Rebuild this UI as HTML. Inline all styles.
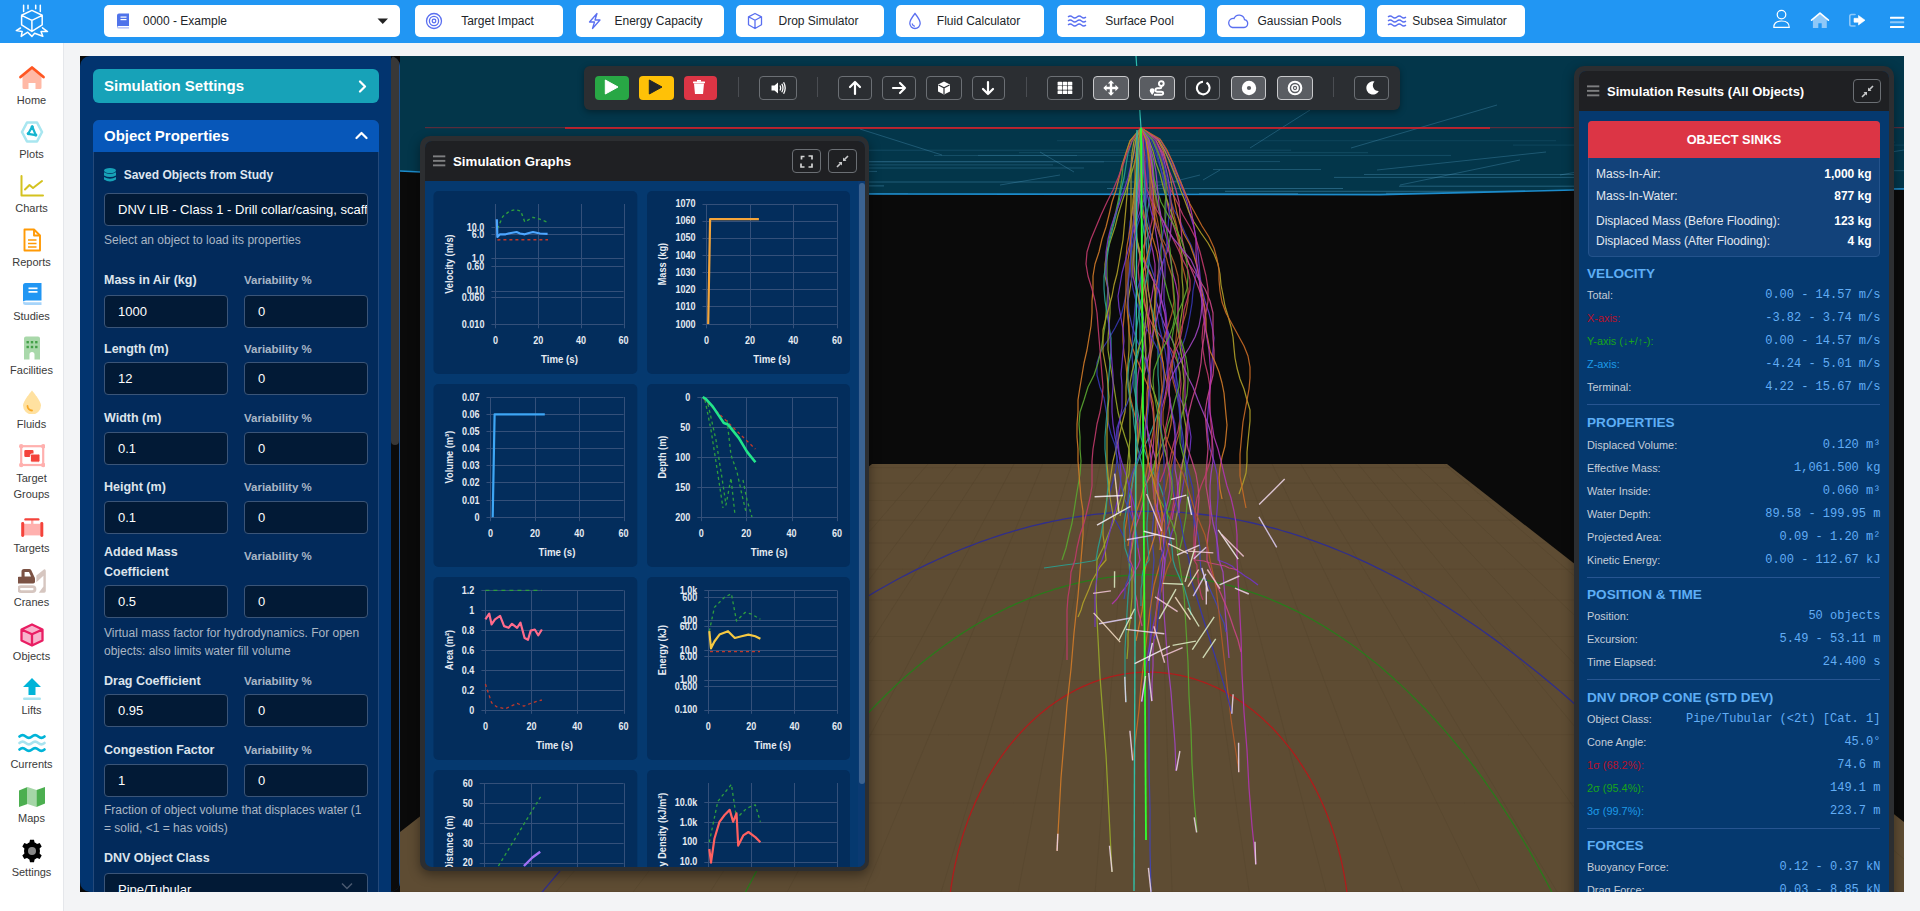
<!DOCTYPE html>
<html><head><meta charset="utf-8">
<style>
*{box-sizing:border-box;margin:0;padding:0}
html,body{width:1920px;height:911px;overflow:hidden;background:#f3f4f6;font-family:"Liberation Sans",sans-serif;position:relative}
.abs{position:absolute}
#top{position:absolute;left:0;top:0;width:1920px;height:43px;background:#2196f3}
.navbtn{position:absolute;top:5px;height:32px;width:148px;background:#fff;border-radius:5px;font-size:12px;white-space:nowrap;color:#212529;line-height:32px}
.navbtn svg{position:absolute;left:10px;top:7px}
.navbtn span{position:absolute;left:30px;right:13px;top:0;text-align:center}
#side{position:absolute;left:0;top:43px;width:64px;height:868px;background:#fff;border-right:1px solid #e5e7eb}
.si{position:absolute;left:0;width:63px;text-align:center;font-size:11px;color:#3a3a3a;line-height:16px}
.si svg{position:absolute;left:18px}
#main{position:absolute;left:80px;top:56px;width:1824px;height:836px;background:#0a0a0a;overflow:hidden}
#lp{position:absolute;left:0;top:0;width:320px;height:836px;background:#02346f;border-radius:10px;overflow:hidden}
.hdr{position:absolute;left:13px;width:286px;color:#fff;font-weight:bold;font-size:16px}
.lbl{position:absolute;font-size:12.5px;font-weight:bold;color:#dde4ec}
.vlbl{position:absolute;font-size:11.5px;font-weight:bold;color:#a9b6c6}
.inp{position:absolute;height:33px;background:#021a36;border:1px solid #3b5578;border-radius:4px;color:#fff;font-size:13px;line-height:31px;padding-left:13px}
.help{position:absolute;font-size:12px;color:#aab6c4;line-height:18px}
#scene{position:absolute;left:320px;top:0;width:1504px;height:836px;overflow:hidden}
</style></head>
<body>
<div id="top">
<svg class="abs" style="left:0;top:0" width="64" height="43" viewBox="0 0 64 43" fill="none" stroke="#fff" stroke-width="1.5" stroke-linejoin="round" stroke-linecap="round">
<path d="M23.6 5.3 V11.6 M28 5.3 V8.8 M35.7 5.3 V8.8 M40.3 5.3 V11.6"/>
<path d="M31.9 10.4 L42.2 15.3 V24.8 L31.9 31.4 L21.6 24.8 V15.3 Z M21.6 15.3 L31.9 20.3 L42.2 15.3 M31.9 20.3 V31.4"/>
<path d="M20.5 28 L16.3 30.6 L22.2 31.4 L21.2 36.4 L27.7 32.2 L31.9 36.4 L34.6 33.3 L42.8 36.2 L41 31.6 L47.5 31.6 L42.5 27.8"/>
</svg>
<div class="abs" style="left:104px;top:5px;width:296px;height:32px;background:#fff;border-radius:5px"></div>
<svg class="abs" style="left:115px;top:13px" width="15" height="16" viewBox="0 0 15 16"><path d="M2 2.5 Q2 0.5 4 0.5 H14 V13 H3.5 Q2 13 2 14.5 Z" fill="#4f73ea"/><path d="M2 14 Q2 15.5 3.5 15.5 H14 V14.2 H3.5" fill="#a9b8f5"/><rect x="5.5" y="3.5" width="6" height="1.2" fill="#fff"/><rect x="5.5" y="6" width="6" height="1.2" fill="#fff"/></svg>
<div class="abs" style="left:143px;top:5px;line-height:32px;font-size:12px;color:#212529">0000 - Example</div>
<svg class="abs" style="left:377px;top:18px" width="12" height="7" viewBox="0 0 12 7"><path d="M0.5 0.5 H11 L5.75 6 Z" fill="#222"/></svg>
<div class="navbtn" style="left:415px"><svg width="18" height="18" viewBox="0 0 18 18" fill="none" stroke="#5a6ff0" stroke-width="1.3"><circle cx="9" cy="9" r="7.5"/><circle cx="9" cy="9" r="4.6"/><circle cx="9" cy="9" r="1.8"/></svg><span>Target Impact</span></div>
<div class="navbtn" style="left:576px"><svg width="18" height="18" viewBox="0 0 18 18" fill="none" stroke="#5a6ff0" stroke-width="1.3" stroke-linejoin="round"><path d="M11 1.5 L3.5 10 H8.5 L6.5 16.5 L14 8 H9 Z"/></svg><span>Energy Capacity</span></div>
<div class="navbtn" style="left:736px"><svg width="18" height="18" viewBox="0 0 18 18" fill="none" stroke="#5a6ff0" stroke-width="1.3" stroke-linejoin="round"><path d="M9 1.5 L15.5 4.8 V12.8 L9 16.5 L2.5 12.8 V4.8 Z M2.5 4.8 L9 8.3 L15.5 4.8 M9 8.3 V16.5"/></svg><span>Drop Simulator</span></div>
<div class="navbtn" style="left:896px"><svg width="18" height="18" viewBox="0 0 18 18" fill="none" stroke="#5a6ff0" stroke-width="1.3"><path d="M9 1.5 C9 1.5 3.8 8 3.8 11.3 A5.2 5.2 0 0 0 14.2 11.3 C14.2 8 9 1.5 9 1.5 Z"/><path d="M6.3 11.5 A2.7 2.7 0 0 0 9 14.2"/></svg><span>Fluid Calculator</span></div>
<div class="navbtn" style="left:1057px"><svg width="20" height="18" viewBox="0 0 20 18" fill="none" stroke="#5a6ff0" stroke-width="1.3"><path d="M1 5 q2.25 -2 4.5 0 t4.5 0 t4.5 0 t4.5 0"/><path d="M1 9 q2.25 -2 4.5 0 t4.5 0 t4.5 0 t4.5 0"/><path d="M1 13 q2.25 -2 4.5 0 t4.5 0 t4.5 0 t4.5 0"/></svg><span>Surface Pool</span></div>
<div class="navbtn" style="left:1217px"><svg width="22" height="18" viewBox="0 0 22 18" fill="none" stroke="#5a6ff0" stroke-width="1.3"><path d="M5.5 15.5 H17 A4 4 0 0 0 17.5 7.6 A5.5 5.5 0 0 0 7 6.5 A4.5 4.5 0 0 0 5.5 15.5 Z"/></svg><span>Gaussian Pools</span></div>
<div class="navbtn" style="left:1377px"><svg width="20" height="18" viewBox="0 0 20 18" fill="none" stroke="#5a6ff0" stroke-width="1.3"><path d="M1 5 q2.25 -2 4.5 0 t4.5 0 t4.5 0 t4.5 0"/><path d="M1 9 q2.25 -2 4.5 0 t4.5 0 t4.5 0 t4.5 0"/><path d="M1 13 q2.25 -2 4.5 0 t4.5 0 t4.5 0 t4.5 0"/></svg><span>Subsea Simulator</span></div>
<svg class="abs" style="left:1760px;top:0" width="160" height="43" viewBox="1760 0 160 43">
<circle cx="1781.5" cy="14.6" r="4.3" fill="none" stroke="#fff" stroke-width="1.2"/>
<path d="M1773.8 27.4 Q1773.8 21 1781.5 21 Q1789.3 21 1789.3 27.4 Z" fill="none" stroke="#fff" stroke-width="1.2" stroke-linejoin="round"/>
<path d="M1812.9 19.5 L1820 13.8 L1826.8 19.5 V27.9 H1821.7 V23.3 H1818.3 V27.9 H1812.9 Z" fill="#8ec8f8"/>
<path d="M1811.6 20.2 L1820 13.2 L1828.4 20.2" fill="none" stroke="#fff" stroke-width="1.7" stroke-linecap="round" stroke-linejoin="round"/>
<path d="M1855 14.5 H1851.5 Q1849.8 14.5 1849.8 16.2 V24.3 Q1849.8 26 1851.5 26 H1855" fill="none" stroke="#8ec8f8" stroke-width="1.6" stroke-linecap="round"/>
<path d="M1854 18.3 H1858.5 V15.5 L1865 20.2 L1858.5 25 V22.2 H1854 Z" fill="#fff" stroke="#fff" stroke-width="0.6" stroke-linejoin="round"/>
<rect x="1890" y="16.7" width="14.2" height="2" rx="0.5" fill="#fff"/>
<rect x="1890" y="21.3" width="14.2" height="2" rx="0.5" fill="#8ec8f8"/>
<rect x="1890" y="26" width="14.2" height="2" rx="0.5" fill="#fff"/>
</svg>
</div>
<div id="side">
<div class="abs" style="left:18.0px;top:22.0px;width:28px;height:26px"><svg width="28" height="26" viewBox="0 0 28 26"><path d="M4.5 11 L14 3.5 L23.5 11 V22.5 Q23.5 24 22 24 H17.5 V18 H10.5 V24 H6 Q4.5 24 4.5 22.5 Z" fill="#ffb9a6"/><path d="M2.5 12 L14 2.5 L25.5 12" fill="none" stroke="#ff5622" stroke-width="2.8" stroke-linecap="round" stroke-linejoin="round"/></svg></div>
<div class="si" style="top:49px">Home</div>
<div class="abs" style="left:20.0px;top:77.0px;width:24px;height:24px"><svg width="24" height="24" viewBox="0 0 24 24"><path d="M7 2.5 H17 L22 12 L17 21.5 H7 L2 12 Z" fill="none" stroke="#a8e6f0" stroke-width="2.6" stroke-linejoin="round"/><path d="M12.2 6.5 L8.2 13.8 L15.8 15.2 Z" fill="none" stroke="#16b5cf" stroke-width="2.2" stroke-linejoin="round"/><circle cx="12.2" cy="6.8" r="1.6" fill="#16b5cf"/><circle cx="15.8" cy="15" r="1.6" fill="#16b5cf"/><circle cx="8.3" cy="13.6" r="1.6" fill="#16b5cf"/></svg></div>
<div class="si" style="top:103px">Plots</div>
<div class="abs" style="left:20.0px;top:132.0px;width:24px;height:22px"><svg width="24" height="22" viewBox="0 0 24 22" fill="none" stroke="#d4c21f" stroke-width="2" stroke-linecap="round" stroke-linejoin="round"><path d="M1.5 1 V20.5 H23"/><path d="M5 14.5 L9.5 10 L13 13 L22 6"/></svg></div>
<div class="si" style="top:157px">Charts</div>
<div class="abs" style="left:21.0px;top:185.0px;width:22px;height:24px"><svg width="22" height="24" viewBox="0 0 22 24" fill="none" stroke="#ff9a06" stroke-width="1.9" stroke-linejoin="round"><path d="M3.5 1.5 H13 L19 7.5 V22.5 H3.5 Z"/><path d="M13 1.5 V7.5 H19"/><path d="M7 12 H15.5 M7 15.5 H15.5 M7 19 H15.5" stroke-width="1.6"/></svg></div>
<div class="si" style="top:211px">Reports</div>
<div class="abs" style="left:20.0px;top:239.0px;width:24px;height:24px"><svg width="24" height="24" viewBox="0 0 24 24"><path d="M3 3.5 Q3 1 5.5 1 H21.5 V18.5 H6 Q3 18.5 3 20 Z" fill="#2196f3"/><path d="M3 20.5 Q3 23 5.5 23 H21.5 V20.2 H5.5 Q4 20.2 4 19" fill="#a6d4fa"/><rect x="8.5" y="5.5" width="9" height="1.7" fill="#fff"/><rect x="8.5" y="9" width="9" height="1.7" fill="#fff"/></svg></div>
<div class="si" style="top:265px">Studies</div>
<div class="abs" style="left:22.0px;top:293.0px;width:20px;height:24px"><svg width="20" height="24" viewBox="0 0 20 24"><path d="M2 2.5 Q2 0.5 4 0.5 H16 Q18 0.5 18 2.5 V23.5 H12.5 V18.5 Q12.5 16 10 16 Q7.5 16 7.5 18.5 V23.5 H2 Z" fill="#a9d8aa"/><g fill="#43a047"><rect x="4.5" y="5" width="2.4" height="2.4"/><rect x="8.8" y="5" width="2.4" height="2.4"/><rect x="13.1" y="5" width="2.4" height="2.4"/><rect x="4.5" y="9.8" width="2.4" height="2.4"/><rect x="8.8" y="9.8" width="2.4" height="2.4"/><rect x="13.1" y="9.8" width="2.4" height="2.4"/></g></svg></div>
<div class="si" style="top:319px">Facilities</div>
<div class="abs" style="left:22.0px;top:347.0px;width:20px;height:24px"><svg width="20" height="24" viewBox="0 0 20 24"><path d="M10 0.5 C10 0.5 1 11 1 15.5 A9 9 0 0 0 19 15.5 C19 11 10 0.5 10 0.5 Z" fill="#ffe1a0"/><path d="M5.5 16 A4.5 4.5 0 0 0 10 20.5" fill="none" stroke="#f9a825" stroke-width="1.8" stroke-linecap="round"/></svg></div>
<div class="si" style="top:373px">Fluids</div>
<div class="abs" style="left:19.0px;top:401.0px;width:26px;height:24px"><svg width="26" height="24" viewBox="19 444 26 24"><rect x="21.2" y="446.2" width="22" height="18.8" fill="none" stroke="#ffb0ae" stroke-width="2.2"/><circle cx="21.2" cy="446.2" r="2.2" fill="#ffb0ae"/><circle cx="43.2" cy="446.2" r="2.2" fill="#ffb0ae"/><circle cx="21.2" cy="465" r="2.2" fill="#ffb0ae"/><circle cx="43.2" cy="465" r="2.2" fill="#ffb0ae"/><rect x="24.3" y="449.9" width="9.2" height="7.1" rx="1.2" fill="#f4433b"/><rect x="30.4" y="454" width="9.6" height="8.2" rx="1.4" fill="#f4433b" stroke="#fff" stroke-width="1"/></svg></div>
<div class="si" style="top:427px">Target<br>Groups</div>
<div class="abs" style="left:19.0px;top:473.0px;width:26px;height:22px"><svg width="26" height="22" viewBox="19 516 26 22"><rect x="24" y="523.8" width="16.5" height="11.6" fill="#ffb0ae"/><rect x="21.2" y="522" width="3" height="15" rx="1.4" fill="#f4433b"/><rect x="40.3" y="522" width="3" height="15" rx="1.4" fill="#f4433b"/><rect x="31" y="519.5" width="2.4" height="4.5" fill="#ffb0ae"/><rect x="24.3" y="518.2" width="15.2" height="2.4" rx="1.2" fill="#f4433b"/></svg></div>
<div class="si" style="top:497px">Targets</div>
<div class="abs" style="left:18.0px;top:526.0px;width:28px;height:24px"><svg width="28" height="24" viewBox="18 569 28 24"><path d="M21.5 571.5 Q21.5 569 24 569 H29.3 Q30.6 569 31.3 570.3 L34.3 576.8 Q35 577.5 35 579 V581.8 Q35 583.6 33.2 583.6 H18.9 Q17.1 583.6 17.1 581.8 V578.6 Q17.1 576.8 18.9 576.8 H21.5 Z M24.6 572 V576.5 H31 L29 572 Z" fill="#7b5244" fill-rule="evenodd"/><rect x="18.6" y="586.6" width="16.4" height="5" rx="2.5" fill="none" stroke="#d6c6c0" stroke-width="2.8"/><path d="M36.4 575.5 L44.2 569.3 Q45.8 569 45.8 571 V591 Q45.8 592.8 44.2 592.8 H38.8 L43.4 586.5 V575.8 L36.4 582.2 Z" fill="#d6c6c0"/></svg></div>
<div class="si" style="top:551px">Cranes</div>
<div class="abs" style="left:19.0px;top:580.0px;width:26px;height:24px"><svg width="26" height="24" viewBox="0 0 26 24"><path d="M13 1.5 L23.5 6.5 V17.5 L13 22.5 L2.5 17.5 V6.5 Z" fill="#f8b4cd"/><path d="M13 1.5 L23.5 6.5 V17.5 L13 22.5 L2.5 17.5 V6.5 Z M2.5 6.5 L13 11.3 L23.5 6.5 M13 11.3 V22.5" fill="none" stroke="#e91e63" stroke-width="2.3" stroke-linejoin="round"/></svg></div>
<div class="si" style="top:605px">Objects</div>
<div class="abs" style="left:20.0px;top:634.0px;width:24px;height:24px"><svg width="24" height="24" viewBox="0 0 24 24"><path d="M12 1 L21 10 H15.5 V18 H8.5 V10 H3 Z" fill="#00b4d8"/><rect x="3" y="20.5" width="18" height="2.6" rx="1.3" fill="#a8e3ef"/></svg></div>
<div class="si" style="top:659px">Lifts</div>
<div class="abs" style="left:18.0px;top:690.0px;width:28px;height:20px"><svg width="28" height="20" viewBox="0 0 28 20" fill="none" stroke-width="2.6" stroke-linecap="round"><path d="M1.5 3.5 q3.1 -2.6 6.25 0 t6.25 0 t6.25 0 t6.25 0" stroke="#00b4d8"/><path d="M1.5 10 q3.1 -2.6 6.25 0 t6.25 0 t6.25 0 t6.25 0" stroke="#a8e3ef"/><path d="M1.5 16.5 q3.1 -2.6 6.25 0 t6.25 0 t6.25 0 t6.25 0" stroke="#00b4d8"/></svg></div>
<div class="si" style="top:713px">Currents</div>
<div class="abs" style="left:18.0px;top:743.0px;width:28px;height:22px"><svg width="28" height="22" viewBox="0 0 28 22"><path d="M1 4.5 L9.5 1 V18 L1 21 Z" fill="#4caf50"/><path d="M9.5 1 L18.5 4 V21 L9.5 18 Z" fill="#a5d6a7"/><path d="M18.5 4 L27 1 V17.5 L18.5 21 Z" fill="#4caf50"/></svg></div>
<div class="si" style="top:767px">Maps</div>
<div class="abs" style="left:20.0px;top:796.0px;width:24px;height:24px"><svg width="24" height="24" viewBox="0 0 24 24"><path fill="#000" d="M10 0.8 H14 L14.6 3.6 A8.8 8.8 0 0 1 17 5 L19.7 4 L21.7 7.5 L19.6 9.4 A8.8 8.8 0 0 1 19.6 14.6 L21.7 16.5 L19.7 20 L17 19 A8.8 8.8 0 0 1 14.6 20.4 L14 23.2 H10 L9.4 20.4 A8.8 8.8 0 0 1 7 19 L4.3 20 L2.3 16.5 L4.4 14.6 A8.8 8.8 0 0 1 4.4 9.4 L2.3 7.5 L4.3 4 L7 5 A8.8 8.8 0 0 1 9.4 3.6 Z"/><circle cx="12" cy="12" r="4" fill="#888"/></svg></div>
<div class="si" style="top:821px">Settings</div>
</div>
<div id="main">
<svg class="abs" style="left:320px;top:0" width="1504" height="836" viewBox="400 56 1504 836">
<rect x="400" y="56" width="1504" height="836" fill="#0a0a0a"/>
<path d="M400 56 H1904 V189 L1574 190 L1380 194.6 L870 194 L400 171 Z" fill="#03364a"/>
<clipPath id="tealclip"><path d="M400 56 H1904 V189 L1574 190 L1380 194.6 L870 194 L400 171 Z"/></clipPath>
<g stroke-width="1" fill="none" clip-path="url(#tealclip)"><path d="M1107 188.5 H1343" stroke="#5aa8d0" stroke-opacity="0.39"/><path d="M1213 169.5 H1321" stroke="#5aa8d0" stroke-opacity="0.29"/><path d="M1489 193.9 H1678" stroke="#5aa8d0" stroke-opacity="0.42"/><path d="M1694 188.6 H1972" stroke="#5aa8d0" stroke-opacity="0.39"/><path d="M1019 152.7 H1368" stroke="#5aa8d0" stroke-opacity="0.19"/><path d="M1225 191.3 H1670" stroke="#5aa8d0" stroke-opacity="0.41"/><path d="M1364 174.5 H1726" stroke="#5aa8d0" stroke-opacity="0.31"/><path d="M1386 193.3 H1714" stroke="#5aa8d0" stroke-opacity="0.42"/><path d="M440 185.9 H884" stroke="#5aa8d0" stroke-opacity="0.38"/><path d="M1334 177.4 H1784" stroke="#5aa8d0" stroke-opacity="0.33"/><path d="M1597 161.9 H1843" stroke="#5aa8d0" stroke-opacity="0.24"/><path d="M978 155.4 H1451" stroke="#5aa8d0" stroke-opacity="0.21"/><path d="M527 149.3 H664" stroke="#5aa8d0" stroke-opacity="0.18"/><path d="M1655 189.2 H1918" stroke="#5aa8d0" stroke-opacity="0.39"/><path d="M791 168.0 H1084" stroke="#5aa8d0" stroke-opacity="0.28"/><path d="M856 182.0 H1182" stroke="#5aa8d0" stroke-opacity="0.35"/><path d="M1575 170.7 H1942" stroke="#5aa8d0" stroke-opacity="0.29"/><path d="M1513 145.1 H2010" stroke="#5aa8d0" stroke-opacity="0.15"/><path d="M612 164.9 H1053" stroke="#5aa8d0" stroke-opacity="0.26"/><path d="M1576 142.1 H1895" stroke="#5aa8d0" stroke-opacity="0.14"/><path d="M674 161.9 H1104" stroke="#5aa8d0" stroke-opacity="0.25"/><path d="M770 171.4 H877" stroke="#5aa8d0" stroke-opacity="0.30"/><path d="M1687 151.3 H1804" stroke="#5aa8d0" stroke-opacity="0.19"/><path d="M934 155.5 H1077" stroke="#5aa8d0" stroke-opacity="0.21"/><path d="M1399 186.2 H1846" stroke="#5aa8d0" stroke-opacity="0.38"/><path d="M1199 193.6 H1298" stroke="#5aa8d0" stroke-opacity="0.42"/><path d="M830 161.6 H1280" stroke="#5aa8d0" stroke-opacity="0.24"/><path d="M1057 140.7 H1556" stroke="#5aa8d0" stroke-opacity="0.13"/><path d="M500 185.6 H832" stroke="#5aa8d0" stroke-opacity="0.37"/><path d="M657 193.8 H908" stroke="#5aa8d0" stroke-opacity="0.42"/><path d="M603 169.0 H701" stroke="#5aa8d0" stroke-opacity="0.28"/><path d="M808 150.2 H1291" stroke="#5aa8d0" stroke-opacity="0.18"/><path d="M1250 148 L1310 110" stroke="#5aa8d0" stroke-opacity="0.3"/><path d="M1351 148 L1497 105" stroke="#5aa8d0" stroke-opacity="0.3"/><path d="M1040 152 L1074 172" stroke="#5aa8d0" stroke-opacity="0.3"/><path d="M1377 170 L1546 152" stroke="#5aa8d0" stroke-opacity="0.3"/><path d="M860 129 L942 155" stroke="#5aa8d0" stroke-opacity="0.3"/><path d="M1203 180 L1220 170" stroke="#5aa8d0" stroke-opacity="0.3"/><path d="M1600 160 L1760 130" stroke="#5aa8d0" stroke-opacity="0.3"/><path d="M1560 175 L1700 150" stroke="#5aa8d0" stroke-opacity="0.3"/><path d="M1680 185 L1904 150" stroke="#5aa8d0" stroke-opacity="0.3"/><path d="M430 150 L520 165" stroke="#5aa8d0" stroke-opacity="0.3"/><path d="M1400 185 L1520 160" stroke="#5aa8d0" stroke-opacity="0.3"/><path d="M1000 185 L1060 175" stroke="#5aa8d0" stroke-opacity="0.3"/><path d="M1140 190 L1200 175" stroke="#5aa8d0" stroke-opacity="0.3"/><path d="M1700 120 L1860 90" stroke="#5aa8d0" stroke-opacity="0.3"/></g>
<path d="M400 171 L870 194 L1380 194.6 L1574 190 L1904 189" stroke="#1c8ccc" stroke-width="1.6" fill="none"/>
<path d="M425 127.7 H1904" stroke="#c8232c" stroke-width="1" stroke-opacity="0.55"/>
<path d="M565 128 H1490" stroke="#e0202a" stroke-width="1.6"/>
<path d="M400 832 L872 464 L1447 464 L1904 822 V892 H400 Z" fill="#5e4c33"/>
<clipPath id="bedclip"><path d="M400 832 L872 464 L1447 464 L1904 822 V892 H400 Z"/></clipPath>
<path clip-path="url(#bedclip)" d="M1008.7 371.1 L1006.3 373.8 L1003.9 376.6 L1001.4 379.5 L998.8 382.5 L996.0 385.7 L993.2 388.9 L990.3 392.2 L987.3 395.7 L984.2 399.3 L980.9 403.1 L977.5 407.0 L974.0 411.1 L970.3 415.3 L966.4 419.7 L962.4 424.4 L958.2 429.2 L953.8 434.2 L949.2 439.5 L944.4 445.1 L939.4 450.9 L934.1 457.0 L928.5 463.4 L922.6 470.2 L916.4 477.4 L909.8 484.9 L902.9 492.9 L895.5 501.4 L887.7 510.4 L879.4 520.0 L870.5 530.2 L861.0 541.0 L850.9 552.7 L840.0 565.2 L828.3 578.7 L815.7 593.2 L802.1 608.9 L787.2 626.0 L771.1 644.6 L753.4 664.9 L734.0 687.2 L712.7 711.8 L688.9 739.1 L662.5 769.5 L632.8 803.7 L599.3 842.3 L561.1 886.2 L517.2 936.7 L466.2 995.4 L406.3 1064.4 L334.8 1146.7 L248.0 1246.5 L140.6 1370.1 L4.1 1527.3 L-175.2 1733.6 L-421.1 2016.6 L-779.2 2428.7 L-1348.9 3084.4 L-2396.7 4290.2 L-4958.9 7239.0 M1026.9 371.1 L1024.8 373.8 L1022.7 376.6 L1020.5 379.5 L1018.2 382.5 L1015.9 385.7 L1013.4 388.9 L1010.9 392.2 L1008.3 395.7 L1005.5 399.3 L1002.7 403.1 L999.8 407.0 L996.7 411.1 L993.5 415.3 L990.1 419.7 L986.6 424.4 L983.0 429.2 L979.2 434.2 L975.2 439.5 L971.0 445.1 L966.6 450.9 L961.9 457.0 L957.1 463.4 L952.0 470.2 L946.6 477.4 L940.8 484.9 L934.8 492.9 L928.4 501.4 L921.6 510.4 L914.4 520.0 L906.6 530.2 L898.4 541.0 L889.6 552.7 L880.1 565.2 L870.0 578.7 L859.0 593.2 L847.1 608.9 L834.2 626.0 L820.2 644.6 L804.8 664.9 L787.9 687.2 L769.3 711.8 L748.7 739.1 L725.7 769.5 L699.9 803.7 L670.7 842.3 L637.5 886.2 L599.3 936.7 L554.9 995.4 L502.7 1064.4 L440.5 1146.7 L365.1 1246.5 L271.6 1370.1 L152.8 1527.3 L-3.1 1733.6 L-217.1 2016.6 L-528.6 2428.7 L-1024.3 3084.4 L-1935.9 4290.2 L-4165.1 7239.0 M1045.1 371.1 L1043.3 373.8 L1041.5 376.6 L1039.6 379.5 L1037.7 382.5 L1035.7 385.7 L1033.6 388.9 L1031.5 392.2 L1029.2 395.7 L1026.9 399.3 L1024.5 403.1 L1022.0 407.0 L1019.4 411.1 L1016.6 415.3 L1013.8 419.7 L1010.8 424.4 L1007.7 429.2 L1004.5 434.2 L1001.1 439.5 L997.5 445.1 L993.8 450.9 L989.8 457.0 L985.7 463.4 L981.3 470.2 L976.7 477.4 L971.9 484.9 L966.7 492.9 L961.3 501.4 L955.5 510.4 L949.4 520.0 L942.8 530.2 L935.8 541.0 L928.3 552.7 L920.2 565.2 L911.6 578.7 L902.2 593.2 L892.1 608.9 L881.2 626.0 L869.2 644.6 L856.2 664.9 L841.8 687.2 L826.0 711.8 L808.4 739.1 L788.9 769.5 L766.9 803.7 L742.1 842.3 L713.8 886.2 L681.3 936.7 L643.6 995.4 L599.2 1064.4 L546.3 1146.7 L482.1 1246.5 L402.6 1370.1 L301.6 1527.3 L168.9 1733.6 L-13.1 2016.6 L-278.1 2428.7 L-699.7 3084.4 L-1475.2 4290.2 L-3371.4 7239.0 M1063.2 371.1 L1061.8 373.8 L1060.3 376.6 L1058.8 379.5 L1057.2 382.5 L1055.5 385.7 L1053.8 388.9 L1052.1 392.2 L1050.2 395.7 L1048.3 399.3 L1046.3 403.1 L1044.2 407.0 L1042.1 411.1 L1039.8 415.3 L1037.5 419.7 L1035.0 424.4 L1032.5 429.2 L1029.8 434.2 L1027.0 439.5 L1024.0 445.1 L1021.0 450.9 L1017.7 457.0 L1014.3 463.4 L1010.7 470.2 L1006.9 477.4 L1002.9 484.9 L998.7 492.9 L994.2 501.4 L989.4 510.4 L984.3 520.0 L978.9 530.2 L973.2 541.0 L967.0 552.7 L960.3 565.2 L953.2 578.7 L945.5 593.2 L937.2 608.9 L928.1 626.0 L918.3 644.6 L907.5 664.9 L895.7 687.2 L882.6 711.8 L868.2 739.1 L852.0 769.5 L833.9 803.7 L813.5 842.3 L790.2 886.2 L763.4 936.7 L732.3 995.4 L695.7 1064.4 L652.1 1146.7 L599.2 1246.5 L533.6 1370.1 L450.3 1527.3 L340.9 1733.6 L190.9 2016.6 L-27.6 2428.7 L-375.2 3084.4 L-1014.4 4290.2 L-2577.7 7239.0 M1081.4 371.1 L1080.3 373.8 L1079.1 376.6 L1077.9 379.5 L1076.7 382.5 L1075.4 385.7 L1074.0 388.9 L1072.6 392.2 L1071.2 395.7 L1069.7 399.3 L1068.1 403.1 L1066.5 407.0 L1064.8 411.1 L1063.0 415.3 L1061.2 419.7 L1059.2 424.4 L1057.2 429.2 L1055.1 434.2 L1052.9 439.5 L1050.6 445.1 L1048.2 450.9 L1045.6 457.0 L1042.9 463.4 L1040.1 470.2 L1037.1 477.4 L1034.0 484.9 L1030.6 492.9 L1027.1 501.4 L1023.3 510.4 L1019.3 520.0 L1015.1 530.2 L1010.5 541.0 L1005.7 552.7 L1000.5 565.2 L994.8 578.7 L988.8 593.2 L982.2 608.9 L975.1 626.0 L967.4 644.6 L958.9 664.9 L949.6 687.2 L939.3 711.8 L927.9 739.1 L915.2 769.5 L901.0 803.7 L884.9 842.3 L866.5 886.2 L845.4 936.7 L821.0 995.4 L792.2 1064.4 L757.9 1146.7 L716.2 1246.5 L664.6 1370.1 L599.1 1527.3 L513.0 1733.6 L394.9 2016.6 L223.0 2428.7 L-50.6 3084.4 L-553.7 4290.2 L-1784.0 7239.0 M1099.6 371.1 L1098.8 373.8 L1097.9 376.6 L1097.1 379.5 L1096.1 382.5 L1095.2 385.7 L1094.2 388.9 L1093.2 392.2 L1092.1 395.7 L1091.0 399.3 L1089.9 403.1 L1088.7 407.0 L1087.5 411.1 L1086.2 415.3 L1084.8 419.7 L1083.4 424.4 L1082.0 429.2 L1080.4 434.2 L1078.8 439.5 L1077.1 445.1 L1075.4 450.9 L1073.5 457.0 L1071.5 463.4 L1069.5 470.2 L1067.3 477.4 L1065.0 484.9 L1062.6 492.9 L1060.0 501.4 L1057.2 510.4 L1054.3 520.0 L1051.2 530.2 L1047.9 541.0 L1044.4 552.7 L1040.6 565.2 L1036.5 578.7 L1032.0 593.2 L1027.3 608.9 L1022.1 626.0 L1016.4 644.6 L1010.2 664.9 L1003.4 687.2 L996.0 711.8 L987.7 739.1 L978.4 769.5 L968.0 803.7 L956.3 842.3 L942.9 886.2 L927.5 936.7 L909.7 995.4 L888.7 1064.4 L863.6 1146.7 L833.2 1246.5 L795.6 1370.1 L747.8 1527.3 L685.0 1733.6 L598.9 2016.6 L473.5 2428.7 L274.0 3084.4 L-92.9 4290.2 L-990.2 7239.0 M1117.8 371.1 L1117.3 373.8 L1116.8 376.6 L1116.2 379.5 L1115.6 382.5 L1115.0 385.7 L1114.4 388.9 L1113.8 392.2 L1113.1 395.7 L1112.4 399.3 L1111.7 403.1 L1110.9 407.0 L1110.2 411.1 L1109.4 415.3 L1108.5 419.7 L1107.6 424.4 L1106.7 429.2 L1105.7 434.2 L1104.7 439.5 L1103.7 445.1 L1102.5 450.9 L1101.4 457.0 L1100.1 463.4 L1098.8 470.2 L1097.5 477.4 L1096.0 484.9 L1094.5 492.9 L1092.9 501.4 L1091.2 510.4 L1089.3 520.0 L1087.4 530.2 L1085.3 541.0 L1083.1 552.7 L1080.7 565.2 L1078.1 578.7 L1075.3 593.2 L1072.3 608.9 L1069.0 626.0 L1065.5 644.6 L1061.6 664.9 L1057.3 687.2 L1052.6 711.8 L1047.4 739.1 L1041.6 769.5 L1035.0 803.7 L1027.6 842.3 L1019.2 886.2 L1009.6 936.7 L998.3 995.4 L985.1 1064.4 L969.4 1146.7 L950.3 1246.5 L926.6 1370.1 L896.6 1527.3 L857.1 1733.6 L802.9 2016.6 L724.0 2428.7 L598.6 3084.4 L367.8 4290.2 L-196.5 7239.0 M1136.0 371.1 L1135.8 373.8 L1135.6 376.6 L1135.3 379.5 L1135.1 382.5 L1134.9 385.7 L1134.6 388.9 L1134.3 392.2 L1134.1 395.7 L1133.8 399.3 L1133.5 403.1 L1133.2 407.0 L1132.9 411.1 L1132.5 415.3 L1132.2 419.7 L1131.8 424.4 L1131.4 429.2 L1131.0 434.2 L1130.6 439.5 L1130.2 445.1 L1129.7 450.9 L1129.3 457.0 L1128.8 463.4 L1128.2 470.2 L1127.7 477.4 L1127.1 484.9 L1126.4 492.9 L1125.8 501.4 L1125.1 510.4 L1124.3 520.0 L1123.5 530.2 L1122.7 541.0 L1121.8 552.7 L1120.8 565.2 L1119.7 578.7 L1118.6 593.2 L1117.3 608.9 L1116.0 626.0 L1114.5 644.6 L1113.0 664.9 L1111.2 687.2 L1109.3 711.8 L1107.1 739.1 L1104.7 769.5 L1102.1 803.7 L1099.0 842.3 L1095.6 886.2 L1091.6 936.7 L1087.0 995.4 L1081.6 1064.4 L1075.2 1146.7 L1067.3 1246.5 L1057.6 1370.1 L1045.3 1527.3 L1029.1 1733.6 L1006.9 2016.6 L974.6 2428.7 L923.1 3084.4 L828.5 4290.2 L597.2 7239.0 M1154.2 371.1 L1154.3 373.8 L1154.4 376.6 L1154.5 379.5 L1154.6 382.5 L1154.7 385.7 L1154.8 388.9 L1154.9 392.2 L1155.0 395.7 L1155.2 399.3 L1155.3 403.1 L1155.4 407.0 L1155.6 411.1 L1155.7 415.3 L1155.9 419.7 L1156.0 424.4 L1156.2 429.2 L1156.4 434.2 L1156.5 439.5 L1156.7 445.1 L1156.9 450.9 L1157.1 457.0 L1157.4 463.4 L1157.6 470.2 L1157.9 477.4 L1158.1 484.9 L1158.4 492.9 L1158.7 501.4 L1159.0 510.4 L1159.3 520.0 L1159.7 530.2 L1160.0 541.0 L1160.4 552.7 L1160.9 565.2 L1161.3 578.7 L1161.8 593.2 L1162.4 608.9 L1163.0 626.0 L1163.6 644.6 L1164.3 664.9 L1165.1 687.2 L1165.9 711.8 L1166.9 739.1 L1167.9 769.5 L1169.1 803.7 L1170.4 842.3 L1171.9 886.2 L1173.7 936.7 L1175.7 995.4 L1178.1 1064.4 L1180.9 1146.7 L1184.4 1246.5 L1188.6 1370.1 L1194.0 1527.3 L1201.2 1733.6 L1210.9 2016.6 L1225.1 2428.7 L1247.7 3084.4 L1289.3 4290.2 L1390.9 7239.0 M1172.4 371.1 L1172.8 373.8 L1173.2 376.6 L1173.6 379.5 L1174.1 382.5 L1174.5 385.7 L1175.0 388.9 L1175.5 392.2 L1176.0 395.7 L1176.5 399.3 L1177.1 403.1 L1177.7 407.0 L1178.3 411.1 L1178.9 415.3 L1179.5 419.7 L1180.2 424.4 L1180.9 429.2 L1181.7 434.2 L1182.5 439.5 L1183.3 445.1 L1184.1 450.9 L1185.0 457.0 L1186.0 463.4 L1187.0 470.2 L1188.0 477.4 L1189.2 484.9 L1190.3 492.9 L1191.6 501.4 L1192.9 510.4 L1194.3 520.0 L1195.8 530.2 L1197.4 541.0 L1199.1 552.7 L1201.0 565.2 L1203.0 578.7 L1205.1 593.2 L1207.4 608.9 L1209.9 626.0 L1212.7 644.6 L1215.7 664.9 L1219.0 687.2 L1222.6 711.8 L1226.6 739.1 L1231.1 769.5 L1236.1 803.7 L1241.8 842.3 L1248.3 886.2 L1255.7 936.7 L1264.4 995.4 L1274.6 1064.4 L1286.7 1146.7 L1301.4 1246.5 L1319.6 1370.1 L1342.8 1527.3 L1373.2 1733.6 L1414.9 2016.6 L1475.7 2428.7 L1572.3 3084.4 L1750.0 4290.2 L2184.7 7239.0 M1190.6 371.1 L1191.3 373.8 L1192.0 376.6 L1192.8 379.5 L1193.5 382.5 L1194.4 385.7 L1195.2 388.9 L1196.1 392.2 L1197.0 395.7 L1197.9 399.3 L1198.9 403.1 L1199.9 407.0 L1201.0 411.1 L1202.1 415.3 L1203.2 419.7 L1204.4 424.4 L1205.7 429.2 L1207.0 434.2 L1208.4 439.5 L1209.8 445.1 L1211.3 450.9 L1212.9 457.0 L1214.6 463.4 L1216.4 470.2 L1218.2 477.4 L1220.2 484.9 L1222.3 492.9 L1224.5 501.4 L1226.8 510.4 L1229.3 520.0 L1232.0 530.2 L1234.8 541.0 L1237.8 552.7 L1241.1 565.2 L1244.6 578.7 L1248.4 593.2 L1252.5 608.9 L1256.9 626.0 L1261.7 644.6 L1267.0 664.9 L1272.8 687.2 L1279.3 711.8 L1286.4 739.1 L1294.3 769.5 L1303.2 803.7 L1313.2 842.3 L1324.7 886.2 L1337.8 936.7 L1353.1 995.4 L1371.0 1064.4 L1392.5 1146.7 L1418.4 1246.5 L1450.6 1370.1 L1491.5 1527.3 L1545.2 1733.6 L1618.9 2016.6 L1726.2 2428.7 L1896.9 3084.4 L2210.8 4290.2 L2978.4 7239.0 M1208.8 371.1 L1209.8 373.8 L1210.8 376.6 L1211.9 379.5 L1213.0 382.5 L1214.2 385.7 L1215.4 388.9 L1216.6 392.2 L1217.9 395.7 L1219.3 399.3 L1220.7 403.1 L1222.1 407.0 L1223.7 411.1 L1225.2 415.3 L1226.9 419.7 L1228.6 424.4 L1230.4 429.2 L1232.3 434.2 L1234.3 439.5 L1236.4 445.1 L1238.5 450.9 L1240.8 457.0 L1243.2 463.4 L1245.7 470.2 L1248.4 477.4 L1251.2 484.9 L1254.2 492.9 L1257.4 501.4 L1260.7 510.4 L1264.3 520.0 L1268.1 530.2 L1272.2 541.0 L1276.5 552.7 L1281.2 565.2 L1286.2 578.7 L1291.6 593.2 L1297.5 608.9 L1303.9 626.0 L1310.8 644.6 L1318.4 664.9 L1326.7 687.2 L1335.9 711.8 L1346.1 739.1 L1357.5 769.5 L1370.2 803.7 L1384.6 842.3 L1401.0 886.2 L1419.9 936.7 L1441.8 995.4 L1467.5 1064.4 L1498.2 1146.7 L1535.5 1246.5 L1581.6 1370.1 L1640.3 1527.3 L1717.3 1733.6 L1822.9 2016.6 L1976.7 2428.7 L2221.4 3084.4 L2671.5 4290.2 L3772.1 7239.0 M1226.9 371.1 L1228.3 373.8 L1229.6 376.6 L1231.0 379.5 L1232.5 382.5 L1234.0 385.7 L1235.6 388.9 L1237.2 392.2 L1238.9 395.7 L1240.7 399.3 L1242.5 403.1 L1244.4 407.0 L1246.4 411.1 L1248.4 415.3 L1250.6 419.7 L1252.8 424.4 L1255.2 429.2 L1257.6 434.2 L1260.2 439.5 L1262.9 445.1 L1265.7 450.9 L1268.7 457.0 L1271.8 463.4 L1275.1 470.2 L1278.6 477.4 L1282.3 484.9 L1286.2 492.9 L1290.3 501.4 L1294.6 510.4 L1299.3 520.0 L1304.3 530.2 L1309.6 541.0 L1315.2 552.7 L1321.3 565.2 L1327.9 578.7 L1334.9 593.2 L1342.6 608.9 L1350.8 626.0 L1359.9 644.6 L1369.8 664.9 L1380.6 687.2 L1392.6 711.8 L1405.8 739.1 L1420.6 769.5 L1437.2 803.7 L1456.0 842.3 L1477.4 886.2 L1501.9 936.7 L1530.5 995.4 L1564.0 1064.4 L1604.0 1146.7 L1652.5 1246.5 L1712.6 1370.1 L1789.0 1527.3 L1889.3 1733.6 L2026.9 2016.6 L2227.3 2428.7 L2546.0 3084.4 L3132.3 4290.2 L4565.8 7239.0 M1245.1 371.1 L1246.8 373.8 L1248.4 376.6 L1250.2 379.5 L1252.0 382.5 L1253.8 385.7 L1255.8 388.9 L1257.8 392.2 L1259.9 395.7 L1262.0 399.3 L1264.3 403.1 L1266.6 407.0 L1269.1 411.1 L1271.6 415.3 L1274.3 419.7 L1277.0 424.4 L1279.9 429.2 L1282.9 434.2 L1286.1 439.5 L1289.4 445.1 L1292.9 450.9 L1296.6 457.0 L1300.4 463.4 L1304.5 470.2 L1308.8 477.4 L1313.3 484.9 L1318.1 492.9 L1323.2 501.4 L1328.6 510.4 L1334.3 520.0 L1340.4 530.2 L1346.9 541.0 L1353.9 552.7 L1361.4 565.2 L1369.5 578.7 L1378.2 593.2 L1387.6 608.9 L1397.8 626.0 L1408.9 644.6 L1421.1 664.9 L1434.5 687.2 L1449.2 711.8 L1465.6 739.1 L1483.8 769.5 L1504.3 803.7 L1527.4 842.3 L1553.7 886.2 L1584.0 936.7 L1619.1 995.4 L1660.5 1064.4 L1709.8 1146.7 L1769.6 1246.5 L1843.6 1370.1 L1937.8 1527.3 L2061.4 1733.6 L2230.9 2016.6 L2477.8 2428.7 L2870.6 3084.4 L3593.0 4290.2 L5359.6 7239.0 M1263.3 371.1 L1265.2 373.8 L1267.2 376.6 L1269.3 379.5 L1271.5 382.5 L1273.7 385.7 L1276.0 388.9 L1278.4 392.2 L1280.8 395.7 L1283.4 399.3 L1286.1 403.1 L1288.9 407.0 L1291.8 411.1 L1294.8 415.3 L1297.9 419.7 L1301.2 424.4 L1304.7 429.2 L1308.3 434.2 L1312.0 439.5 L1316.0 445.1 L1320.1 450.9 L1324.5 457.0 L1329.0 463.4 L1333.9 470.2 L1339.0 477.4 L1344.3 484.9 L1350.0 492.9 L1356.1 501.4 L1362.5 510.4 L1369.3 520.0 L1376.6 530.2 L1384.3 541.0 L1392.6 552.7 L1401.5 565.2 L1411.1 578.7 L1421.4 593.2 L1432.6 608.9 L1444.8 626.0 L1458.0 644.6 L1472.5 664.9 L1488.4 687.2 L1505.9 711.8 L1525.3 739.1 L1547.0 769.5 L1571.3 803.7 L1598.8 842.3 L1630.1 886.2 L1666.0 936.7 L1707.8 995.4 L1757.0 1064.4 L1815.5 1146.7 L1886.6 1246.5 L1974.6 1370.1 L2086.5 1527.3 L2233.4 1733.6 L2434.9 2016.6 L2728.3 2428.7 L3195.2 3084.4 L4053.7 4290.2 L6153.3 7239.0 M1281.5 371.1 L1283.7 373.8 L1286.1 376.6 L1288.5 379.5 L1290.9 382.5 L1293.5 385.7 L1296.2 388.9 L1298.9 392.2 L1301.8 395.7 L1304.8 399.3 L1307.9 403.1 L1311.1 407.0 L1314.5 411.1 L1318.0 415.3 L1321.6 419.7 L1325.4 424.4 L1329.4 429.2 L1333.6 434.2 L1337.9 439.5 L1342.5 445.1 L1347.3 450.9 L1352.4 457.0 L1357.7 463.4 L1363.3 470.2 L1369.2 477.4 L1375.4 484.9 L1382.0 492.9 L1389.0 501.4 L1396.4 510.4 L1404.3 520.0 L1412.7 530.2 L1421.7 541.0 L1431.3 552.7 L1441.6 565.2 L1452.7 578.7 L1464.7 593.2 L1477.7 608.9 L1491.7 626.0 L1507.1 644.6 L1523.8 664.9 L1542.2 687.2 L1562.5 711.8 L1585.1 739.1 L1610.2 769.5 L1638.3 803.7 L1670.2 842.3 L1706.4 886.2 L1748.1 936.7 L1796.5 995.4 L1853.4 1064.4 L1921.3 1146.7 L2003.6 1246.5 L2105.6 1370.1 L2235.2 1527.3 L2405.5 1733.6 L2638.9 2016.6 L2978.9 2428.7 L3519.8 3084.4 L4514.5 4290.2 L6947.0 7239.0 M1299.7 371.1 L1302.2 373.8 L1304.9 376.6 L1307.6 379.5 L1310.4 382.5 L1313.3 385.7 L1316.4 388.9 L1319.5 392.2 L1322.8 395.7 L1326.2 399.3 L1329.7 403.1 L1333.3 407.0 L1337.2 411.1 L1341.1 415.3 L1345.3 419.7 L1349.6 424.4 L1354.1 429.2 L1358.9 434.2 L1363.8 439.5 L1369.0 445.1 L1374.5 450.9 L1380.2 457.0 L1386.3 463.4 L1392.6 470.2 L1399.3 477.4 L1406.4 484.9 L1413.9 492.9 L1421.9 501.4 L1430.3 510.4 L1439.3 520.0 L1448.8 530.2 L1459.1 541.0 L1470.0 552.7 L1481.7 565.2 L1494.4 578.7 L1508.0 593.2 L1522.7 608.9 L1538.7 626.0 L1556.1 644.6 L1575.2 664.9 L1596.1 687.2 L1619.2 711.8 L1644.8 739.1 L1673.3 769.5 L1705.4 803.7 L1741.6 842.3 L1782.8 886.2 L1830.2 936.7 L1885.2 995.4 L1949.9 1064.4 L2027.1 1146.7 L2120.7 1246.5 L2236.6 1370.1 L2384.0 1527.3 L2577.5 1733.6 L2842.9 2016.6 L3229.4 2428.7 L3844.3 3084.4 L4975.2 4290.2 L7740.7 7239.0 M1317.9 371.1 L1320.7 373.8 L1323.7 376.6 L1326.7 379.5 L1329.9 382.5 L1333.2 385.7 L1336.6 388.9 L1340.1 392.2 L1343.7 395.7 L1347.5 399.3 L1351.5 403.1 L1355.6 407.0 L1359.9 411.1 L1364.3 415.3 L1369.0 419.7 L1373.8 424.4 L1378.9 429.2 L1384.2 434.2 L1389.8 439.5 L1395.6 445.1 L1401.7 450.9 L1408.1 457.0 L1414.9 463.4 L1422.0 470.2 L1429.5 477.4 L1437.5 484.9 L1445.9 492.9 L1454.8 501.4 L1464.2 510.4 L1474.3 520.0 L1485.0 530.2 L1496.4 541.0 L1508.7 552.7 L1521.8 565.2 L1536.0 578.7 L1551.2 593.2 L1567.8 608.9 L1585.7 626.0 L1605.2 644.6 L1626.6 664.9 L1650.0 687.2 L1675.9 711.8 L1704.5 739.1 L1736.5 769.5 L1772.4 803.7 L1813.0 842.3 L1859.1 886.2 L1912.2 936.7 L1973.9 995.4 L2046.4 1064.4 L2132.8 1146.7 L2237.7 1246.5 L2367.6 1370.1 L2532.7 1527.3 L2749.5 1733.6 L3046.9 2016.6 L3479.9 2428.7 L4168.9 3084.4 L5436.0 4290.2 L8534.5 7239.0 M1336.1 371.1 L1339.2 373.8 L1342.5 376.6 L1345.9 379.5 L1349.4 382.5 L1353.0 385.7 L1356.7 388.9 L1360.6 392.2 L1364.7 395.7 L1368.9 399.3 L1373.3 403.1 L1377.8 407.0 L1382.6 411.1 L1387.5 415.3 L1392.6 419.7 L1398.0 424.4 L1403.6 429.2 L1409.5 434.2 L1415.7 439.5 L1422.1 445.1 L1428.9 450.9 L1436.0 457.0 L1443.5 463.4 L1451.4 470.2 L1459.7 477.4 L1468.5 484.9 L1477.8 492.9 L1487.7 501.4 L1498.1 510.4 L1509.3 520.0 L1521.1 530.2 L1533.8 541.0 L1547.4 552.7 L1561.9 565.2 L1577.6 578.7 L1594.5 593.2 L1612.8 608.9 L1632.6 626.0 L1654.3 644.6 L1677.9 664.9 L1703.9 687.2 L1732.5 711.8 L1764.3 739.1 L1799.7 769.5 L1839.4 803.7 L1884.3 842.3 L1935.5 886.2 L1994.3 936.7 L2062.6 995.4 L2142.9 1064.4 L2238.6 1146.7 L2354.8 1246.5 L2498.6 1370.1 L2681.5 1527.3 L2921.6 1733.6 L3250.9 2016.6 L3730.5 2428.7 L4493.5 3084.4 L5896.7 4290.2 L9328.2 7239.0 M1354.3 371.1 L1357.7 373.8 L1361.3 376.6 L1365.0 379.5 L1368.8 382.5 L1372.8 385.7 L1376.9 388.9 L1381.2 392.2 L1385.7 395.7 L1390.3 399.3 L1395.1 403.1 L1400.1 407.0 L1405.3 411.1 L1410.7 415.3 L1416.3 419.7 L1422.2 424.4 L1428.4 429.2 L1434.8 434.2 L1441.6 439.5 L1448.7 445.1 L1456.1 450.9 L1463.9 457.0 L1472.1 463.4 L1480.8 470.2 L1489.9 477.4 L1499.5 484.9 L1509.7 492.9 L1520.6 501.4 L1532.0 510.4 L1544.3 520.0 L1557.3 530.2 L1571.2 541.0 L1586.1 552.7 L1602.1 565.2 L1619.2 578.7 L1637.8 593.2 L1657.8 608.9 L1679.6 626.0 L1703.3 644.6 L1729.3 664.9 L1757.8 687.2 L1789.2 711.8 L1824.0 739.1 L1862.9 769.5 L1906.5 803.7 L1955.7 842.3 L2011.8 886.2 L2076.3 936.7 L2151.3 995.4 L2239.3 1064.4 L2344.4 1146.7 L2471.8 1246.5 L2629.6 1370.1 L2830.2 1527.3 L3093.6 1733.6 L3454.9 2016.6 L3981.0 2428.7 L4818.1 3084.4 L6357.5 4290.2 L10121.9 7239.0 M1372.4 371.1 L1376.2 373.8 L1380.1 376.6 L1384.1 379.5 L1388.3 382.5 L1392.7 385.7 L1397.1 388.9 L1401.8 392.2 L1406.6 395.7 L1411.6 399.3 L1416.9 403.1 L1422.3 407.0 L1428.0 411.1 L1433.8 415.3 L1440.0 419.7 L1446.4 424.4 L1453.1 429.2 L1460.1 434.2 L1467.5 439.5 L1475.2 445.1 L1483.3 450.9 L1491.8 457.0 L1500.7 463.4 L1510.1 470.2 L1520.1 477.4 L1530.6 484.9 L1541.7 492.9 L1553.5 501.4 L1566.0 510.4 L1579.3 520.0 L1593.4 530.2 L1608.6 541.0 L1624.8 552.7 L1642.2 565.2 L1660.9 578.7 L1681.0 593.2 L1702.9 608.9 L1726.6 626.0 L1752.4 644.6 L1780.6 664.9 L1811.6 687.2 L1845.8 711.8 L1883.8 739.1 L1926.1 769.5 L1973.5 803.7 L2027.1 842.3 L2088.2 886.2 L2158.4 936.7 L2239.9 995.4 L2335.8 1064.4 L2450.1 1146.7 L2588.8 1246.5 L2760.6 1370.1 L2978.9 1527.3 L3265.7 1733.6 L3658.9 2016.6 L4231.5 2428.7 L5142.6 3084.4 L6818.2 4290.2 L10915.6 7239.0 M1390.6 371.1 L1394.7 373.8 L1398.9 376.6 L1403.3 379.5 L1407.8 382.5 L1412.5 385.7 L1417.3 388.9 L1422.4 392.2 L1427.6 395.7 L1433.0 399.3 L1438.7 403.1 L1444.5 407.0 L1450.7 411.1 L1457.0 415.3 L1463.7 419.7 L1470.6 424.4 L1477.9 429.2 L1485.5 434.2 L1493.4 439.5 L1501.7 445.1 L1510.5 450.9 L1519.7 457.0 L1529.3 463.4 L1539.5 470.2 L1550.3 477.4 L1561.6 484.9 L1573.6 492.9 L1586.4 501.4 L1599.9 510.4 L1614.3 520.0 L1629.6 530.2 L1645.9 541.0 L1663.5 552.7 L1682.3 565.2 L1702.5 578.7 L1724.3 593.2 L1747.9 608.9 L1773.5 626.0 L1801.5 644.6 L1832.0 664.9 L1865.5 687.2 L1902.5 711.8 L1943.5 739.1 L1989.2 769.5 L2040.5 803.7 L2098.5 842.3 L2164.6 886.2 L2240.5 936.7 L2328.6 995.4 L2432.3 1064.4 L2555.9 1146.7 L2705.9 1246.5 L2891.6 1370.1 L3127.7 1527.3 L3437.7 1733.6 L3862.9 2016.6 L4482.1 2428.7 L5467.2 3084.4 L7278.9 4290.2 L11709.4 7239.0 M1408.8 371.1 L1413.2 373.8 L1417.7 376.6 L1422.4 379.5 L1427.3 382.5 L1432.3 385.7 L1437.5 388.9 L1442.9 392.2 L1448.6 395.7 L1454.4 399.3 L1460.5 403.1 L1466.8 407.0 L1473.4 411.1 L1480.2 415.3 L1487.4 419.7 L1494.8 424.4 L1502.6 429.2 L1510.8 434.2 L1519.3 439.5 L1528.3 445.1 L1537.7 450.9 L1547.6 457.0 L1558.0 463.4 L1568.9 470.2 L1580.5 477.4 L1592.7 484.9 L1605.6 492.9 L1619.3 501.4 L1633.8 510.4 L1649.2 520.0 L1665.7 530.2 L1683.3 541.0 L1702.2 552.7 L1722.4 565.2 L1744.1 578.7 L1767.6 593.2 L1793.0 608.9 L1820.5 626.0 L1850.5 644.6 L1883.4 664.9 L1919.4 687.2 L1959.2 711.8 L2003.3 739.1 L2052.4 769.5 L2107.6 803.7 L2169.9 842.3 L2240.9 886.2 L2322.5 936.7 L2417.3 995.4 L2528.8 1064.4 L2661.7 1146.7 L2822.9 1246.5 L3022.6 1370.1 L3276.4 1527.3 L3609.7 1733.6 L4066.9 2016.6 L4732.6 2428.7 L5791.8 3084.4 L7739.7 4290.2 L12503.1 7239.0 M1427.0 371.1 L1431.7 373.8 L1436.5 376.6 L1441.6 379.5 L1446.8 382.5 L1452.1 385.7 L1457.7 388.9 L1463.5 392.2 L1469.5 395.7 L1475.8 399.3 L1482.3 403.1 L1489.0 407.0 L1496.1 411.1 L1503.4 415.3 L1511.0 419.7 L1519.0 424.4 L1527.4 429.2 L1536.1 434.2 L1545.2 439.5 L1554.8 445.1 L1564.9 450.9 L1575.4 457.0 L1586.6 463.4 L1598.3 470.2 L1610.6 477.4 L1623.7 484.9 L1637.5 492.9 L1652.2 501.4 L1667.7 510.4 L1684.2 520.0 L1701.9 530.2 L1720.7 541.0 L1740.9 552.7 L1762.5 565.2 L1785.7 578.7 L1810.8 593.2 L1838.0 608.9 L1867.5 626.0 L1899.6 644.6 L1934.7 664.9 L1973.3 687.2 L2015.8 711.8 L2063.0 739.1 L2115.6 769.5 L2174.6 803.7 L2241.3 842.3 L2317.3 886.2 L2404.6 936.7 L2506.0 995.4 L2625.2 1064.4 L2767.4 1146.7 L2940.0 1246.5 L3153.6 1370.1 L3425.2 1527.3 L3781.8 1733.6 L4270.9 2016.6 L4983.1 2428.7 L6116.4 3084.4 L8200.4 4290.2 L13296.8 7239.0 M1445.2 371.1 L1450.2 373.8 L1455.4 376.6 L1460.7 379.5 L1466.2 382.5 L1472.0 385.7 L1477.9 388.9 L1484.1 392.2 L1490.5 395.7 L1497.1 399.3 L1504.1 403.1 L1511.3 407.0 L1518.8 411.1 L1526.6 415.3 L1534.7 419.7 L1543.2 424.4 L1552.1 429.2 L1561.4 434.2 L1571.1 439.5 L1581.4 445.1 L1592.1 450.9 L1603.3 457.0 L1615.2 463.4 L1627.7 470.2 L1640.8 477.4 L1654.7 484.9 L1669.5 492.9 L1685.1 501.4 L1701.6 510.4 L1719.2 520.0 L1738.0 530.2 L1758.1 541.0 L1779.5 552.7 L1802.6 565.2 L1827.4 578.7 L1854.1 593.2 L1883.0 608.9 L1914.4 626.0 L1948.7 644.6 L1986.1 664.9 L2027.2 687.2 L2072.5 711.8 L2122.7 739.1 L2178.8 769.5 L2241.6 803.7 L2312.7 842.3 L2393.6 886.2 L2486.6 936.7 L2594.7 995.4 L2721.7 1064.4 L2873.2 1146.7 L3057.0 1246.5 L3284.6 1370.1 L3573.9 1527.3 L3953.8 1733.6 L4474.9 2016.6 L5233.7 2428.7 L6440.9 3084.4 L8661.2 4290.2 L14090.5 7239.0 M1463.4 371.1 L1468.7 373.8 L1474.2 376.6 L1479.8 379.5 L1485.7 382.5 L1491.8 385.7 L1498.1 388.9 L1504.7 392.2 L1511.5 395.7 L1518.5 399.3 L1525.9 403.1 L1533.5 407.0 L1541.5 411.1 L1549.7 415.3 L1558.4 419.7 L1567.4 424.4 L1576.9 429.2 L1586.7 434.2 L1597.1 439.5 L1607.9 445.1 L1619.3 450.9 L1631.2 457.0 L1643.8 463.4 L1657.0 470.2 L1671.0 477.4 L1685.8 484.9 L1701.4 492.9 L1717.9 501.4 L1735.5 510.4 L1754.2 520.0 L1774.2 530.2 L1795.5 541.0 L1818.2 552.7 L1842.7 565.2 L1869.0 578.7 L1897.4 593.2 L1928.1 608.9 L1961.4 626.0 L1997.7 644.6 L2037.4 664.9 L2081.0 687.2 L2129.1 711.8 L2182.5 739.1 L2241.9 769.5 L2308.7 803.7 L2384.1 842.3 L2470.0 886.2 L2568.7 936.7 L2683.4 995.4 L2818.2 1064.4 L2979.0 1146.7 L3174.0 1246.5 L3415.6 1370.1 L3722.7 1527.3 L4125.9 1733.6 L4678.9 2016.6 L5484.2 2428.7 L6765.5 3084.4 L9121.9 4290.2 L14884.3 7239.0 M1481.6 371.1 L1487.2 373.8 L1493.0 376.6 L1499.0 379.5 L1505.2 382.5 L1511.6 385.7 L1518.3 388.9 L1525.2 392.2 L1532.4 395.7 L1539.9 399.3 L1547.7 403.1 L1555.7 407.0 L1564.1 411.1 L1572.9 415.3 L1582.1 419.7 L1591.6 424.4 L1601.6 429.2 L1612.0 434.2 L1623.0 439.5 L1634.4 445.1 L1646.5 450.9 L1659.1 457.0 L1672.4 463.4 L1686.4 470.2 L1701.2 477.4 L1716.8 484.9 L1733.3 492.9 L1750.8 501.4 L1769.4 510.4 L1789.2 520.0 L1810.3 530.2 L1832.8 541.0 L1856.9 552.7 L1882.8 565.2 L1910.6 578.7 L1940.6 593.2 L1973.1 608.9 L2008.4 626.0 L2046.8 644.6 L2088.8 664.9 L2134.9 687.2 L2185.8 711.8 L2242.2 739.1 L2305.1 769.5 L2375.7 803.7 L2455.5 842.3 L2546.3 886.2 L2650.8 936.7 L2772.1 995.4 L2914.7 1064.4 L3084.8 1146.7 L3291.1 1246.5 L3546.6 1370.1 L3871.4 1527.3 L4297.9 1733.6 L4882.9 2016.6 L5734.7 2428.7 L7090.1 3084.4 L9582.7 4290.2 L15678.0 7239.0 M1499.8 371.1 L1505.7 373.8 L1511.8 376.6 L1518.1 379.5 L1524.7 382.5 L1531.5 385.7 L1538.5 388.9 L1545.8 392.2 L1553.4 395.7 L1561.3 399.3 L1569.5 403.1 L1578.0 407.0 L1586.8 411.1 L1596.1 415.3 L1605.7 419.7 L1615.8 424.4 L1626.3 429.2 L1637.4 434.2 L1648.9 439.5 L1661.0 445.1 L1673.7 450.9 L1687.0 457.0 L1701.0 463.4 L1715.8 470.2 L1731.4 477.4 L1747.8 484.9 L1765.3 492.9 L1783.7 501.4 L1803.4 510.4 L1824.2 520.0 L1846.5 530.2 L1870.2 541.0 L1895.6 552.7 L1922.9 565.2 L1952.3 578.7 L1983.9 593.2 L2018.2 608.9 L2055.3 626.0 L2095.9 644.6 L2140.2 664.9 L2188.8 687.2 L2242.5 711.8 L2302.0 739.1 L2368.3 769.5 L2442.7 803.7 L2526.9 842.3 L2622.7 886.2 L2732.8 936.7 L2860.8 995.4 L3011.2 1064.4 L3190.5 1146.7 L3408.1 1246.5 L3677.6 1370.1 L4020.1 1527.3 L4470.0 1733.6 L5086.9 2016.6 L5985.3 2428.7 L7414.7 3084.4 L10043.4 4290.2 L16471.7 7239.0 M1518.0 371.1 L1524.2 373.8 L1530.6 376.6 L1537.3 379.5 L1544.2 382.5 L1551.3 385.7 L1558.7 388.9 L1566.4 392.2 L1574.4 395.7 L1582.6 399.3 L1591.3 403.1 L1600.2 407.0 L1609.5 411.1 L1619.3 415.3 L1629.4 419.7 L1640.0 424.4 L1651.1 429.2 L1662.7 434.2 L1674.8 439.5 L1687.5 445.1 L1700.9 450.9 L1714.9 457.0 L1729.6 463.4 L1745.2 470.2 L1761.6 477.4 L1778.9 484.9 L1797.2 492.9 L1816.6 501.4 L1837.3 510.4 L1859.2 520.0 L1882.6 530.2 L1907.6 541.0 L1934.3 552.7 L1963.0 565.2 L1993.9 578.7 L2027.2 593.2 L2063.2 608.9 L2102.3 626.0 L2144.9 644.6 L2191.5 664.9 L2242.7 687.2 L2299.1 711.8 L2361.7 739.1 L2431.5 769.5 L2509.8 803.7 L2598.3 842.3 L2699.0 886.2 L2814.9 936.7 L2949.4 995.4 L3107.6 1064.4 L3296.3 1146.7 L3525.2 1246.5 L3808.6 1370.1 L4168.9 1527.3 L4642.0 1733.6 L5290.9 2016.6 L6235.8 2428.7 L7739.3 3084.4 L10504.1 4290.2 L17265.4 7239.0 M721.4 353.8 L743.3 353.8 L765.2 353.8 L787.1 353.8 L809.0 353.8 L831.0 353.8 L852.9 353.8 L874.8 353.8 L896.7 353.8 L918.6 353.8 L940.5 353.8 L962.4 353.8 L984.3 353.8 L1006.2 353.8 L1028.1 353.8 L1050.0 353.8 L1072.0 353.8 L1093.9 353.8 L1115.8 353.8 L1137.7 353.8 L1159.6 353.8 L1181.5 353.8 L1203.4 353.8 L1225.3 353.8 L1247.2 353.8 L1269.1 353.8 L1291.0 353.8 L1313.0 353.8 L1334.9 353.8 L1356.8 353.8 L1378.7 353.8 L1400.6 353.8 L1422.5 353.8 L1444.4 353.8 L1466.3 353.8 L1488.2 353.8 L1510.1 353.8 L1532.0 353.8 L1554.0 353.8 L1575.9 353.8 M707.5 358.5 L730.1 358.5 L752.7 358.5 L775.4 358.5 L798.0 358.5 L820.6 358.5 L843.2 358.5 L865.8 358.5 L888.5 358.5 L911.1 358.5 L933.7 358.5 L956.3 358.5 L979.0 358.5 L1001.6 358.5 L1024.2 358.5 L1046.8 358.5 L1069.5 358.5 L1092.1 358.5 L1114.7 358.5 L1137.3 358.5 L1159.9 358.5 L1182.6 358.5 L1205.2 358.5 L1227.8 358.5 L1250.4 358.5 L1273.1 358.5 L1295.7 358.5 L1318.3 358.5 L1340.9 358.5 L1363.6 358.5 L1386.2 358.5 L1408.8 358.5 L1431.4 358.5 L1454.1 358.5 L1476.7 358.5 L1499.3 358.5 L1521.9 358.5 L1544.5 358.5 L1567.2 358.5 L1589.8 358.5 M692.6 363.5 L716.0 363.5 L739.4 363.5 L762.8 363.5 L786.2 363.5 L809.5 363.5 L832.9 363.5 L856.3 363.5 L879.7 363.5 L903.1 363.5 L926.5 363.5 L949.9 363.5 L973.2 363.5 L996.6 363.5 L1020.0 363.5 L1043.4 363.5 L1066.8 363.5 L1090.2 363.5 L1113.6 363.5 L1136.9 363.5 L1160.3 363.5 L1183.7 363.5 L1207.1 363.5 L1230.5 363.5 L1253.9 363.5 L1277.3 363.5 L1300.6 363.5 L1324.0 363.5 L1347.4 363.5 L1370.8 363.5 L1394.2 363.5 L1417.6 363.5 L1441.0 363.5 L1464.3 363.5 L1487.7 363.5 L1511.1 363.5 L1534.5 363.5 L1557.9 363.5 L1581.3 363.5 L1604.7 363.5 M676.7 368.9 L700.9 368.9 L725.1 368.9 L749.3 368.9 L773.5 368.9 L797.7 368.9 L821.9 368.9 L846.1 368.9 L870.3 368.9 L894.5 368.9 L918.7 368.9 L942.9 368.9 L967.1 368.9 L991.3 368.9 L1015.5 368.9 L1039.7 368.9 L1063.9 368.9 L1088.1 368.9 L1112.3 368.9 L1136.5 368.9 L1160.7 368.9 L1184.9 368.9 L1209.1 368.9 L1233.3 368.9 L1257.5 368.9 L1281.7 368.9 L1305.9 368.9 L1330.1 368.9 L1354.3 368.9 L1378.5 368.9 L1402.7 368.9 L1426.9 368.9 L1451.1 368.9 L1475.3 368.9 L1499.5 368.9 L1523.7 368.9 L1548.0 368.9 L1572.2 368.9 L1596.4 368.9 L1620.6 368.9 M659.7 374.6 L684.7 374.6 L709.8 374.6 L734.9 374.6 L760.0 374.6 L785.0 374.6 L810.1 374.6 L835.2 374.6 L860.3 374.6 L885.3 374.6 L910.4 374.6 L935.5 374.6 L960.6 374.6 L985.6 374.6 L1010.7 374.6 L1035.8 374.6 L1060.9 374.6 L1085.9 374.6 L1111.0 374.6 L1136.1 374.6 L1161.2 374.6 L1186.2 374.6 L1211.3 374.6 L1236.4 374.6 L1261.5 374.6 L1286.5 374.6 L1311.6 374.6 L1336.7 374.6 L1361.8 374.6 L1386.8 374.6 L1411.9 374.6 L1437.0 374.6 L1462.1 374.6 L1487.1 374.6 L1512.2 374.6 L1537.3 374.6 L1562.4 374.6 L1587.4 374.6 L1612.5 374.6 L1637.6 374.6 M641.3 380.8 L667.4 380.8 L693.4 380.8 L719.4 380.8 L745.4 380.8 L771.4 380.8 L797.4 380.8 L823.5 380.8 L849.5 380.8 L875.5 380.8 L901.5 380.8 L927.5 380.8 L953.5 380.8 L979.5 380.8 L1005.6 380.8 L1031.6 380.8 L1057.6 380.8 L1083.6 380.8 L1109.6 380.8 L1135.6 380.8 L1161.6 380.8 L1187.7 380.8 L1213.7 380.8 L1239.7 380.8 L1265.7 380.8 L1291.7 380.8 L1317.7 380.8 L1343.7 380.8 L1369.8 380.8 L1395.8 380.8 L1421.8 380.8 L1447.8 380.8 L1473.8 380.8 L1499.8 380.8 L1525.9 380.8 L1551.9 380.8 L1577.9 380.8 L1603.9 380.8 L1629.9 380.8 L1655.9 380.8 M621.6 387.4 L648.6 387.4 L675.7 387.4 L702.7 387.4 L729.7 387.4 L756.7 387.4 L783.8 387.4 L810.8 387.4 L837.8 387.4 L864.8 387.4 L891.9 387.4 L918.9 387.4 L945.9 387.4 L973.0 387.4 L1000.0 387.4 L1027.0 387.4 L1054.0 387.4 L1081.1 387.4 L1108.1 387.4 L1135.1 387.4 L1162.2 387.4 L1189.2 387.4 L1216.2 387.4 L1243.2 387.4 L1270.3 387.4 L1297.3 387.4 L1324.3 387.4 L1351.3 387.4 L1378.4 387.4 L1405.4 387.4 L1432.4 387.4 L1459.5 387.4 L1486.5 387.4 L1513.5 387.4 L1540.5 387.4 L1567.6 387.4 L1594.6 387.4 L1621.6 387.4 L1648.7 387.4 L1675.7 387.4 M600.2 394.6 L628.4 394.6 L656.5 394.6 L684.6 394.6 L712.7 394.6 L740.9 394.6 L769.0 394.6 L797.1 394.6 L825.2 394.6 L853.3 394.6 L881.5 394.6 L909.6 394.6 L937.7 394.6 L965.8 394.6 L994.0 394.6 L1022.1 394.6 L1050.2 394.6 L1078.3 394.6 L1106.5 394.6 L1134.6 394.6 L1162.7 394.6 L1190.8 394.6 L1218.9 394.6 L1247.1 394.6 L1275.2 394.6 L1303.3 394.6 L1331.4 394.6 L1359.6 394.6 L1387.7 394.6 L1415.8 394.6 L1443.9 394.6 L1472.0 394.6 L1500.2 394.6 L1528.3 394.6 L1556.4 394.6 L1584.5 394.6 L1612.7 394.6 L1640.8 394.6 L1668.9 394.6 L1697.0 394.6 M577.1 402.4 L606.4 402.4 L635.7 402.4 L665.0 402.4 L694.3 402.4 L723.6 402.4 L752.9 402.4 L782.3 402.4 L811.6 402.4 L840.9 402.4 L870.2 402.4 L899.5 402.4 L928.8 402.4 L958.1 402.4 L987.4 402.4 L1016.7 402.4 L1046.1 402.4 L1075.4 402.4 L1104.7 402.4 L1134.0 402.4 L1163.3 402.4 L1192.6 402.4 L1221.9 402.4 L1251.2 402.4 L1280.5 402.4 L1309.8 402.4 L1339.2 402.4 L1368.5 402.4 L1397.8 402.4 L1427.1 402.4 L1456.4 402.4 L1485.7 402.4 L1515.0 402.4 L1544.3 402.4 L1573.6 402.4 L1602.9 402.4 L1632.3 402.4 L1661.6 402.4 L1690.9 402.4 L1720.2 402.4 M551.9 410.9 L582.5 410.9 L613.1 410.9 L643.7 410.9 L674.3 410.9 L704.9 410.9 L735.5 410.9 L766.1 410.9 L796.7 410.9 L827.3 410.9 L857.9 410.9 L888.5 410.9 L919.1 410.9 L949.7 410.9 L980.3 410.9 L1010.9 410.9 L1041.5 410.9 L1072.1 410.9 L1102.7 410.9 L1133.3 410.9 L1163.9 410.9 L1194.5 410.9 L1225.1 410.9 L1255.7 410.9 L1286.3 410.9 L1317.0 410.9 L1347.6 410.9 L1378.2 410.9 L1408.8 410.9 L1439.4 410.9 L1470.0 410.9 L1500.6 410.9 L1531.2 410.9 L1561.8 410.9 L1592.4 410.9 L1623.0 410.9 L1653.6 410.9 L1684.2 410.9 L1714.8 410.9 L1745.4 410.9 M524.4 420.1 L556.4 420.1 L588.4 420.1 L620.4 420.1 L652.4 420.1 L684.4 420.1 L716.4 420.1 L748.5 420.1 L780.5 420.1 L812.5 420.1 L844.5 420.1 L876.5 420.1 L908.5 420.1 L940.5 420.1 L972.6 420.1 L1004.6 420.1 L1036.6 420.1 L1068.6 420.1 L1100.6 420.1 L1132.6 420.1 L1164.6 420.1 L1196.7 420.1 L1228.7 420.1 L1260.7 420.1 L1292.7 420.1 L1324.7 420.1 L1356.7 420.1 L1388.7 420.1 L1420.8 420.1 L1452.8 420.1 L1484.8 420.1 L1516.8 420.1 L1548.8 420.1 L1580.8 420.1 L1612.8 420.1 L1644.9 420.1 L1676.9 420.1 L1708.9 420.1 L1740.9 420.1 L1772.9 420.1 M494.2 430.3 L527.7 430.3 L561.3 430.3 L594.9 430.3 L628.4 430.3 L662.0 430.3 L695.6 430.3 L729.1 430.3 L762.7 430.3 L796.2 430.3 L829.8 430.3 L863.4 430.3 L896.9 430.3 L930.5 430.3 L964.0 430.3 L997.6 430.3 L1031.2 430.3 L1064.7 430.3 L1098.3 430.3 L1131.9 430.3 L1165.4 430.3 L1199.0 430.3 L1232.5 430.3 L1266.1 430.3 L1299.7 430.3 L1333.2 430.3 L1366.8 430.3 L1400.4 430.3 L1433.9 430.3 L1467.5 430.3 L1501.0 430.3 L1534.6 430.3 L1568.2 430.3 L1601.7 430.3 L1635.3 430.3 L1668.8 430.3 L1702.4 430.3 L1736.0 430.3 L1769.5 430.3 L1803.1 430.3 M460.9 441.5 L496.2 441.5 L531.5 441.5 L566.7 441.5 L602.0 441.5 L637.3 441.5 L672.5 441.5 L707.8 441.5 L743.1 441.5 L778.3 441.5 L813.6 441.5 L848.9 441.5 L884.1 441.5 L919.4 441.5 L954.7 441.5 L989.9 441.5 L1025.2 441.5 L1060.5 441.5 L1095.7 441.5 L1131.0 441.5 L1166.3 441.5 L1201.5 441.5 L1236.8 441.5 L1272.1 441.5 L1307.3 441.5 L1342.6 441.5 L1377.9 441.5 L1413.1 441.5 L1448.4 441.5 L1483.7 441.5 L1518.9 441.5 L1554.2 441.5 L1589.5 441.5 L1624.7 441.5 L1660.0 441.5 L1695.3 441.5 L1730.5 441.5 L1765.8 441.5 L1801.1 441.5 L1836.3 441.5 M424.1 453.9 L461.3 453.9 L498.4 453.9 L535.6 453.9 L572.7 453.9 L609.9 453.9 L647.0 453.9 L684.2 453.9 L721.4 453.9 L758.5 453.9 L795.7 453.9 L832.8 453.9 L870.0 453.9 L907.1 453.9 L944.3 453.9 L981.4 453.9 L1018.6 453.9 L1055.8 453.9 L1092.9 453.9 L1130.1 453.9 L1167.2 453.9 L1204.4 453.9 L1241.5 453.9 L1278.7 453.9 L1315.8 453.9 L1353.0 453.9 L1390.1 453.9 L1427.3 453.9 L1464.5 453.9 L1501.6 453.9 L1538.8 453.9 L1575.9 453.9 L1613.1 453.9 L1650.2 453.9 L1687.4 453.9 L1724.5 453.9 L1761.7 453.9 L1798.8 453.9 L1836.0 453.9 L1873.2 453.9 M383.1 467.7 L422.4 467.7 L461.7 467.7 L500.9 467.7 L540.2 467.7 L579.4 467.7 L618.7 467.7 L657.9 467.7 L697.2 467.7 L736.4 467.7 L775.7 467.7 L815.0 467.7 L854.2 467.7 L893.5 467.7 L932.7 467.7 L972.0 467.7 L1011.2 467.7 L1050.5 467.7 L1089.8 467.7 L1129.0 467.7 L1168.3 467.7 L1207.5 467.7 L1246.8 467.7 L1286.0 467.7 L1325.3 467.7 L1364.5 467.7 L1403.8 467.7 L1443.1 467.7 L1482.3 467.7 L1521.6 467.7 L1560.8 467.7 L1600.1 467.7 L1639.3 467.7 L1678.6 467.7 L1717.8 467.7 L1757.1 467.7 L1796.4 467.7 L1835.6 467.7 L1874.9 467.7 L1914.1 467.7 M337.3 483.1 L378.9 483.1 L420.5 483.1 L462.1 483.1 L503.7 483.1 L545.3 483.1 L586.9 483.1 L628.5 483.1 L670.1 483.1 L711.7 483.1 L753.4 483.1 L795.0 483.1 L836.6 483.1 L878.2 483.1 L919.8 483.1 L961.4 483.1 L1003.0 483.1 L1044.6 483.1 L1086.2 483.1 L1127.8 483.1 L1169.4 483.1 L1211.1 483.1 L1252.7 483.1 L1294.3 483.1 L1335.9 483.1 L1377.5 483.1 L1419.1 483.1 L1460.7 483.1 L1502.3 483.1 L1543.9 483.1 L1585.5 483.1 L1627.1 483.1 L1668.8 483.1 L1710.4 483.1 L1752.0 483.1 L1793.6 483.1 L1835.2 483.1 L1876.8 483.1 L1918.4 483.1 L1960.0 483.1 M285.5 500.5 L329.8 500.5 L374.0 500.5 L418.3 500.5 L462.6 500.5 L506.8 500.5 L551.1 500.5 L595.4 500.5 L639.6 500.5 L683.9 500.5 L728.1 500.5 L772.4 500.5 L816.7 500.5 L860.9 500.5 L905.2 500.5 L949.5 500.5 L993.7 500.5 L1038.0 500.5 L1082.2 500.5 L1126.5 500.5 L1170.8 500.5 L1215.0 500.5 L1259.3 500.5 L1303.6 500.5 L1347.8 500.5 L1392.1 500.5 L1436.3 500.5 L1480.6 500.5 L1524.9 500.5 L1569.1 500.5 L1613.4 500.5 L1657.7 500.5 L1701.9 500.5 L1746.2 500.5 L1790.4 500.5 L1834.7 500.5 L1879.0 500.5 L1923.2 500.5 L1967.5 500.5 L2011.8 500.5 M226.7 520.3 L274.0 520.3 L321.3 520.3 L368.6 520.3 L415.8 520.3 L463.1 520.3 L510.4 520.3 L557.7 520.3 L605.0 520.3 L652.2 520.3 L699.5 520.3 L746.8 520.3 L794.1 520.3 L841.3 520.3 L888.6 520.3 L935.9 520.3 L983.2 520.3 L1030.4 520.3 L1077.7 520.3 L1125.0 520.3 L1172.3 520.3 L1219.6 520.3 L1266.8 520.3 L1314.1 520.3 L1361.4 520.3 L1408.7 520.3 L1455.9 520.3 L1503.2 520.3 L1550.5 520.3 L1597.8 520.3 L1645.0 520.3 L1692.3 520.3 L1739.6 520.3 L1786.9 520.3 L1834.2 520.3 L1881.4 520.3 L1928.7 520.3 L1976.0 520.3 L2023.3 520.3 L2070.5 520.3 M159.4 543.0 L210.1 543.0 L260.8 543.0 L311.6 543.0 L362.3 543.0 L413.0 543.0 L463.7 543.0 L514.5 543.0 L565.2 543.0 L615.9 543.0 L666.7 543.0 L717.4 543.0 L768.1 543.0 L818.9 543.0 L869.6 543.0 L920.3 543.0 L971.1 543.0 L1021.8 543.0 L1072.5 543.0 L1123.3 543.0 L1174.0 543.0 L1224.7 543.0 L1275.5 543.0 L1326.2 543.0 L1376.9 543.0 L1427.7 543.0 L1478.4 543.0 L1529.1 543.0 L1579.9 543.0 L1630.6 543.0 L1681.3 543.0 L1732.1 543.0 L1782.8 543.0 L1833.5 543.0 L1884.3 543.0 L1935.0 543.0 L1985.7 543.0 L2036.5 543.0 L2087.2 543.0 L2137.9 543.0 M81.3 569.2 L136.1 569.2 L190.8 569.2 L245.5 569.2 L300.3 569.2 L355.0 569.2 L409.7 569.2 L464.5 569.2 L519.2 569.2 L573.9 569.2 L628.7 569.2 L683.4 569.2 L738.1 569.2 L792.9 569.2 L847.6 569.2 L902.3 569.2 L957.1 569.2 L1011.8 569.2 L1066.5 569.2 L1121.3 569.2 L1176.0 569.2 L1230.7 569.2 L1285.5 569.2 L1340.2 569.2 L1394.9 569.2 L1449.7 569.2 L1504.4 569.2 L1559.1 569.2 L1613.9 569.2 L1668.6 569.2 L1723.3 569.2 L1778.1 569.2 L1832.8 569.2 L1887.5 569.2 L1942.3 569.2 L1997.0 569.2 L2051.7 569.2 L2106.5 569.2 L2161.2 569.2 L2215.9 569.2 M-10.0 600.0 L49.4 600.0 L108.8 600.0 L168.2 600.0 L227.7 600.0 L287.1 600.0 L346.5 600.0 L405.9 600.0 L465.3 600.0 L524.8 600.0 L584.2 600.0 L643.6 600.0 L703.0 600.0 L762.4 600.0 L821.8 600.0 L881.3 600.0 L940.7 600.0 L1000.1 600.0 L1059.5 600.0 L1118.9 600.0 L1178.3 600.0 L1237.8 600.0 L1297.2 600.0 L1356.6 600.0 L1416.0 600.0 L1475.4 600.0 L1534.9 600.0 L1594.3 600.0 L1653.7 600.0 L1713.1 600.0 L1772.5 600.0 L1831.9 600.0 L1891.4 600.0 L1950.8 600.0 L2010.2 600.0 L2069.6 600.0 L2129.0 600.0 L2188.4 600.0 L2247.9 600.0 L2307.3 600.0 M-118.5 636.5 L-53.5 636.5 L11.5 636.5 L76.5 636.5 L141.4 636.5 L206.4 636.5 L271.4 636.5 L336.4 636.5 L401.4 636.5 L466.3 636.5 L531.3 636.5 L596.3 636.5 L661.3 636.5 L726.3 636.5 L791.2 636.5 L856.2 636.5 L921.2 636.5 L986.2 636.5 L1051.2 636.5 L1116.1 636.5 L1181.1 636.5 L1246.1 636.5 L1311.1 636.5 L1376.1 636.5 L1441.0 636.5 L1506.0 636.5 L1571.0 636.5 L1636.0 636.5 L1701.0 636.5 L1765.9 636.5 L1830.9 636.5 L1895.9 636.5 L1960.9 636.5 L2025.9 636.5 L2090.8 636.5 L2155.8 636.5 L2220.8 636.5 L2285.8 636.5 L2350.8 636.5 L2415.7 636.5 M-249.3 680.5 L-177.7 680.5 L-106.0 680.5 L-34.3 680.5 L37.4 680.5 L109.1 680.5 L180.8 680.5 L252.5 680.5 L324.2 680.5 L395.9 680.5 L467.6 680.5 L539.3 680.5 L611.0 680.5 L682.6 680.5 L754.3 680.5 L826.0 680.5 L897.7 680.5 L969.4 680.5 L1041.1 680.5 L1112.8 680.5 L1184.5 680.5 L1256.2 680.5 L1327.9 680.5 L1399.6 680.5 L1471.2 680.5 L1542.9 680.5 L1614.6 680.5 L1686.3 680.5 L1758.0 680.5 L1829.7 680.5 L1901.4 680.5 L1973.1 680.5 L2044.8 680.5 L2116.5 680.5 L2188.2 680.5 L2259.9 680.5 L2331.5 680.5 L2403.2 680.5 L2474.9 680.5 L2546.6 680.5 M-410.4 734.7 L-330.4 734.7 L-250.5 734.7 L-170.5 734.7 L-90.6 734.7 L-10.6 734.7 L69.3 734.7 L149.3 734.7 L229.2 734.7 L309.2 734.7 L389.1 734.7 L469.1 734.7 L549.0 734.7 L629.0 734.7 L708.9 734.7 L788.9 734.7 L868.8 734.7 L948.8 734.7 L1028.7 734.7 L1108.7 734.7 L1188.6 734.7 L1268.6 734.7 L1348.5 734.7 L1428.5 734.7 L1508.4 734.7 L1588.4 734.7 L1668.3 734.7 L1748.3 734.7 L1828.2 734.7 L1908.1 734.7 L1988.1 734.7 L2068.0 734.7 L2148.0 734.7 L2227.9 734.7 L2307.9 734.7 L2387.8 734.7 L2467.8 734.7 L2547.7 734.7 L2627.7 734.7 L2707.6 734.7 M-613.3 803.0 L-522.9 803.0 L-432.6 803.0 L-342.2 803.0 L-251.9 803.0 L-161.5 803.0 L-71.2 803.0 L19.2 803.0 L109.5 803.0 L199.9 803.0 L290.3 803.0 L380.6 803.0 L471.0 803.0 L561.3 803.0 L651.7 803.0 L742.0 803.0 L832.4 803.0 L922.7 803.0 L1013.1 803.0 L1103.5 803.0 L1193.8 803.0 L1284.2 803.0 L1374.5 803.0 L1464.9 803.0 L1555.2 803.0 L1645.6 803.0 L1735.9 803.0 L1826.3 803.0 L1916.7 803.0 L2007.0 803.0 L2097.4 803.0 L2187.7 803.0 L2278.1 803.0 L2368.4 803.0 L2458.8 803.0 L2549.1 803.0 L2639.5 803.0 L2729.9 803.0 L2820.2 803.0 L2910.6 803.0 M-877.0 891.7 L-773.1 891.7 L-669.2 891.7 L-565.3 891.7 L-461.5 891.7 L-357.6 891.7 L-253.7 891.7 L-149.8 891.7 L-46.0 891.7 L57.9 891.7 L161.8 891.7 L265.7 891.7 L369.6 891.7 L473.4 891.7 L577.3 891.7 L681.2 891.7 L785.1 891.7 L888.9 891.7 L992.8 891.7 L1096.7 891.7 L1200.6 891.7 L1304.5 891.7 L1408.3 891.7 L1512.2 891.7 L1616.1 891.7 L1720.0 891.7 L1823.8 891.7 L1927.7 891.7 L2031.6 891.7 L2135.5 891.7 L2239.3 891.7 L2343.2 891.7 L2447.1 891.7 L2551.0 891.7 L2654.9 891.7 L2758.7 891.7 L2862.6 891.7 L2966.5 891.7 L3070.4 891.7 L3174.2 891.7 M-1233.5 1011.7 L-1111.3 1011.7 L-989.1 1011.7 L-867.0 1011.7 L-744.8 1011.7 L-622.7 1011.7 L-500.5 1011.7 L-378.3 1011.7 L-256.2 1011.7 L-134.0 1011.7 L-11.9 1011.7 L110.3 1011.7 L232.4 1011.7 L354.6 1011.7 L476.8 1011.7 L598.9 1011.7 L721.1 1011.7 L843.2 1011.7 L965.4 1011.7 L1087.6 1011.7 L1209.7 1011.7 L1331.9 1011.7 L1454.0 1011.7 L1576.2 1011.7 L1698.3 1011.7 L1820.5 1011.7 L1942.7 1011.7 L2064.8 1011.7 L2187.0 1011.7 L2309.1 1011.7 L2431.3 1011.7 L2553.5 1011.7 L2675.6 1011.7 L2797.8 1011.7 L2919.9 1011.7 L3042.1 1011.7 L3164.3 1011.7 L3286.4 1011.7 L3408.6 1011.7 L3530.7 1011.7 M-1742.2 1182.9 L-1594.0 1182.9 L-1445.7 1182.9 L-1297.5 1182.9 L-1149.2 1182.9 L-1001.0 1182.9 L-852.7 1182.9 L-704.5 1182.9 L-556.2 1182.9 L-408.0 1182.9 L-259.7 1182.9 L-111.5 1182.9 L36.8 1182.9 L185.0 1182.9 L333.3 1182.9 L481.5 1182.9 L629.8 1182.9 L778.0 1182.9 L926.3 1182.9 L1074.5 1182.9 L1222.8 1182.9 L1371.0 1182.9 L1519.3 1182.9 L1667.5 1182.9 L1815.8 1182.9 L1964.0 1182.9 L2112.3 1182.9 L2260.5 1182.9 L2408.7 1182.9 L2557.0 1182.9 L2705.2 1182.9 L2853.5 1182.9 L3001.7 1182.9 L3150.0 1182.9 L3298.2 1182.9 L3446.5 1182.9 L3594.7 1182.9 L3743.0 1182.9 L3891.2 1182.9 L4039.5 1182.9 M-2527.3 1447.0 L-2338.8 1447.0 L-2150.3 1447.0 L-1961.8 1447.0 L-1773.2 1447.0 L-1584.7 1447.0 L-1396.2 1447.0 L-1207.7 1447.0 L-1019.2 1447.0 L-830.7 1447.0 L-642.2 1447.0 L-453.7 1447.0 L-265.2 1447.0 L-76.7 1447.0 L111.8 1447.0 L300.3 1447.0 L488.9 1447.0 L677.4 1447.0 L865.9 1447.0 L1054.4 1447.0 L1242.9 1447.0 L1431.4 1447.0 L1619.9 1447.0 L1808.4 1447.0 L1996.9 1447.0 L2185.4 1447.0 L2373.9 1447.0 L2562.5 1447.0 L2751.0 1447.0 L2939.5 1447.0 L3128.0 1447.0 L3316.5 1447.0 L3505.0 1447.0 L3693.5 1447.0 L3882.0 1447.0 L4070.5 1447.0 L4259.0 1447.0 L4447.5 1447.0 L4636.0 1447.0 L4824.6 1447.0 M-3897.7 1908.2 L-3639.0 1908.2 L-3380.2 1908.2 L-3121.4 1908.2 L-2862.6 1908.2 L-2603.8 1908.2 L-2345.0 1908.2 L-2086.2 1908.2 L-1827.4 1908.2 L-1568.6 1908.2 L-1309.9 1908.2 L-1051.1 1908.2 L-792.3 1908.2 L-533.5 1908.2 L-274.7 1908.2 L-15.9 1908.2 L242.9 1908.2 L501.7 1908.2 L760.5 1908.2 L1019.2 1908.2 L1278.0 1908.2 L1536.8 1908.2 L1795.6 1908.2 L2054.4 1908.2 L2313.2 1908.2 L2572.0 1908.2 L2830.8 1908.2 L3089.6 1908.2 L3348.3 1908.2 L3607.1 1908.2 L3865.9 1908.2 L4124.7 1908.2 L4383.5 1908.2 L4642.3 1908.2 L4901.1 1908.2 L5159.9 1908.2 L5418.7 1908.2 L5677.4 1908.2 L5936.2 1908.2 L6195.0 1908.2 M-6897.6 2917.7 L-6484.9 2917.7 L-6072.3 2917.7 L-5659.7 2917.7 L-5247.1 2917.7 L-4834.4 2917.7 L-4421.8 2917.7 L-4009.2 2917.7 L-3596.6 2917.7 L-3183.9 2917.7 L-2771.3 2917.7 L-2358.7 2917.7 L-1946.1 2917.7 L-1533.4 2917.7 L-1120.8 2917.7 L-708.2 2917.7 L-295.6 2917.7 L117.1 2917.7 L529.7 2917.7 L942.3 2917.7 L1354.9 2917.7 L1767.6 2917.7 L2180.2 2917.7 L2592.8 2917.7 L3005.5 2917.7 L3418.1 2917.7 L3830.7 2917.7 L4243.3 2917.7 L4656.0 2917.7 L5068.6 2917.7 L5481.2 2917.7 L5893.8 2917.7 L6306.5 2917.7 L6719.1 2917.7 L7131.7 2917.7 L7544.3 2917.7 L7957.0 2917.7 L8369.6 2917.7 L8782.2 2917.7 L9194.8 2917.7 M-18691.5 6886.5 L-17674.0 6886.5 L-16656.6 6886.5 L-15639.2 6886.5 L-14621.7 6886.5 L-13604.3 6886.5 L-12586.8 6886.5 L-11569.4 6886.5 L-10551.9 6886.5 L-9534.5 6886.5 L-8517.1 6886.5 L-7499.6 6886.5 L-6482.2 6886.5 L-5464.7 6886.5 L-4447.3 6886.5 L-3429.9 6886.5 L-2412.4 6886.5 L-1395.0 6886.5 L-377.5 6886.5 L639.9 6886.5 L1657.4 6886.5 L2674.8 6886.5 L3692.2 6886.5 L4709.7 6886.5 L5727.1 6886.5 L6744.6 6886.5 L7762.0 6886.5 L8779.5 6886.5 L9796.9 6886.5 L10814.3 6886.5 L11831.8 6886.5 L12849.2 6886.5 L13866.7 6886.5 L14884.1 6886.5 L15901.5 6886.5 L16919.0 6886.5 L17936.4 6886.5 L18953.9 6886.5 L19971.3 6886.5 L20988.8 6886.5" stroke="#4a3b26" stroke-opacity="0.22" stroke-width="1" fill="none"/>
<path clip-path="url(#bedclip)" d="M1335.9 840.3 L1337.0 844.0 L1338.0 847.6 L1339.0 851.3 L1339.9 855.1 L1340.9 858.9 L1341.7 862.7 L1342.6 866.6 L1343.4 870.5 L1344.1 874.5 L1344.8 878.5 L1345.5 882.5 L1346.1 886.6 L1346.7 890.7 L1347.2 894.8 L1347.7 899.0 L1348.1 903.2 L1348.5 907.5 L1348.8 911.8 L1349.1 916.1 L1349.4 920.4 L1349.5 924.8 L1349.7 929.2 L1349.7 933.7 L1349.7 938.2 L1349.7 942.6 L1349.6 947.2 L1349.4 951.7 L1349.2 956.3 L1348.9 960.9 L1348.5 965.5 L1348.1 970.1 L1347.6 974.8 L1347.1 979.4 L1346.5 984.1 L1345.8 988.8 L1345.0 993.5 L1344.2 998.2 M952.6 995.9 L951.9 991.2 L951.1 986.5 L950.5 981.8 L949.9 977.1 L949.4 972.4 L948.9 967.8 L948.6 963.2 L948.2 958.6 L948.0 954.0 L947.8 949.4 L947.6 944.9 L947.6 940.4 L947.5 935.9 L947.6 931.5 L947.7 927.0 L947.8 922.6 L948.0 918.3 L948.3 913.9 L948.6 909.6 L949.0 905.4 L949.4 901.1 L949.8 896.9 L950.3 892.8 L950.9 888.6 L951.5 884.6 L952.1 880.5 L952.8 876.5 L953.5 872.5 L954.3 868.6 L955.1 864.7 L956.0 860.8 L956.9 857.0 L957.8 853.2 L958.8 849.5 L959.8 845.8 L960.8 842.1 L961.9 838.5 L963.0 834.9 L964.1 831.4 L965.3 827.9 L966.5 824.5 L967.7 821.1 L969.0 817.7 L970.3 814.4 L971.6 811.1 L973.0 807.9 L974.3 804.7 L975.7 801.5 L977.2 798.4 L978.6 795.4 L980.1 792.3 L981.6 789.3 L983.1 786.4 L984.7 783.5 L986.2 780.6 L987.8 777.8 L989.4 775.1 L991.0 772.3 L992.7 769.6 L994.3 767.0 L996.0 764.4 L997.7 761.8 L999.4 759.3 L1001.2 756.8 L1002.9 754.3 L1004.7 751.9 L1006.5 749.6 L1008.2 747.2 L1010.1 744.9 L1011.9 742.7 L1013.7 740.5 L1015.6 738.3 L1017.4 736.2 L1019.3 734.1 L1021.2 732.0 L1023.1 730.0 L1025.0 728.0 L1026.9 726.1 L1028.8 724.2 L1030.8 722.3 L1032.7 720.5 L1034.7 718.7 L1036.6 716.9 L1038.6 715.2 L1040.6 713.5 L1042.6 711.9 L1044.6 710.3 L1046.6 708.7 L1048.6 707.1 L1050.6 705.6 L1052.6 704.2 L1054.7 702.7 L1056.7 701.3 L1058.8 700.0 L1060.8 698.6 L1062.9 697.3 L1064.9 696.1 L1067.0 694.9 L1069.1 693.7 L1071.2 692.5 L1073.3 691.4 L1075.3 690.3 L1077.4 689.2 L1079.5 688.2 L1081.6 687.2 L1083.8 686.2 L1085.9 685.3 L1088.0 684.4 L1090.1 683.5 L1092.2 682.7 L1094.3 681.9 L1096.5 681.1 L1098.6 680.4 L1100.7 679.7 L1102.9 679.0 L1105.0 678.4 L1107.1 677.8 L1109.3 677.2 L1111.4 676.6 L1113.6 676.1 L1115.7 675.6 L1117.9 675.2 L1120.0 674.8 L1122.2 674.4 L1124.3 674.0 L1126.5 673.7 L1128.7 673.4 L1130.8 673.1 L1133.0 672.9 L1135.1 672.7 L1137.3 672.5 L1139.4 672.4 L1141.6 672.2 L1143.8 672.2 L1145.9 672.1 L1148.1 672.1 L1150.3 672.1 L1152.4 672.1 L1154.6 672.2 L1156.7 672.3 L1158.9 672.4 L1161.1 672.6 L1163.2 672.8 L1165.4 673.0 L1167.5 673.3 L1169.7 673.5 L1171.9 673.9 L1174.0 674.2 L1176.2 674.6 L1178.3 675.0 L1180.5 675.4 L1182.6 675.9 L1184.8 676.4 L1186.9 676.9 L1189.1 677.5 L1191.2 678.1 L1193.3 678.7 L1195.5 679.4 L1197.6 680.0 L1199.7 680.8 L1201.9 681.5 L1204.0 682.3 L1206.1 683.1 L1208.2 684.0 L1210.4 684.8 L1212.5 685.8 L1214.6 686.7 L1216.7 687.7 L1218.8 688.7 L1220.9 689.7 L1223.0 690.8 L1225.1 691.9 L1227.1 693.1 L1229.2 694.3 L1231.3 695.5 L1233.4 696.7 L1235.4 698.0 L1237.5 699.3 L1239.5 700.7 L1241.6 702.0 L1243.6 703.5 L1245.6 704.9 L1247.7 706.4 L1249.7 707.9 L1251.7 709.5 L1253.7 711.1 L1255.7 712.7 L1257.7 714.4 L1259.7 716.1 L1261.6 717.8 L1263.6 719.6 L1265.5 721.4 L1267.5 723.2 L1269.4 725.1 L1271.3 727.0 L1273.3 729.0 L1275.2 731.0 L1277.0 733.0 L1278.9 735.1 L1280.8 737.2 L1282.6 739.4 L1284.5 741.6 L1286.3 743.8 L1288.1 746.1 L1289.9 748.4 L1291.7 750.7 L1293.5 753.1 L1295.2 755.5 L1297.0 758.0 L1298.7 760.5 L1300.4 763.1 L1302.1 765.7 L1303.8 768.3 L1305.4 771.0 L1307.1 773.7 L1308.7 776.4 L1310.3 779.2 L1311.8 782.1 L1313.4 784.9 L1314.9 787.9 L1316.4 790.8 L1317.9 793.8 L1319.4 796.9 L1320.8 800.0 L1322.2 803.1 L1323.6 806.3 L1325.0 809.5 L1326.3 812.7 L1327.6 816.0 L1328.9 819.4 L1330.2 822.8 L1331.4 826.2 L1332.6 829.7 L1333.7 833.2 L1334.8 836.7 L1335.9 840.3" stroke="#b01c1c" stroke-width="1.3" fill="none"/>
<path clip-path="url(#bedclip)" d="M1523.2 840.3 L1527.5 847.6 L1531.8 855.1 L1536.1 862.8 L1540.4 870.6 L1544.8 878.6 L1549.1 886.8 L1553.4 895.2 L1557.7 903.8 L1562.0 912.6 L1566.3 921.6 L1570.6 930.8 L1574.9 940.2 L1579.1 949.8 L1583.4 959.7 L1587.6 969.8 L1591.9 980.1 L1596.1 990.7 M699.1 996.1 L703.3 985.4 L707.5 974.9 L711.8 964.7 L716.0 954.7 L720.3 945.0 L724.6 935.5 L728.8 926.2 L733.1 917.1 L737.4 908.2 L741.7 899.5 L746.1 891.0 L750.4 882.7 L754.7 874.6 L759.0 866.7 L763.3 858.9 L767.6 851.4 L771.9 844.0 L776.2 836.7 L780.5 829.7 L784.8 822.8 L789.0 816.0 L793.3 809.4 L797.6 803.0 L801.8 796.7 L806.1 790.5 L810.3 784.5 L814.5 778.6 L818.7 772.9 L822.9 767.2 L827.1 761.7 L831.3 756.4 L835.4 751.1 L839.6 746.0 L843.7 741.0 L847.8 736.1 L851.9 731.3 L856.0 726.6 L860.1 722.0 L864.1 717.6 L868.2 713.2 L872.2 708.9 L876.2 704.7 L880.2 700.7 L884.2 696.7 L888.2 692.8 L892.2 689.0 L896.1 685.3 L900.1 681.6 L904.0 678.1 L907.9 674.6 L911.8 671.2 L915.7 667.9 L919.6 664.7 L923.4 661.6 L927.3 658.5 L931.1 655.5 L934.9 652.5 L938.7 649.7 L942.5 646.9 L946.3 644.2 L950.1 641.5 L953.8 638.9 L957.6 636.4 L961.3 633.9 L965.0 631.5 L968.7 629.2 L972.4 626.9 L976.1 624.7 L979.8 622.5 L983.4 620.4 L987.1 618.4 L990.7 616.4 L994.4 614.5 L998.0 612.6 L1001.6 610.7 L1005.2 609.0 L1008.8 607.2 L1012.4 605.6 L1016.0 603.9 L1019.6 602.4 L1023.1 600.8 L1026.7 599.4 L1030.2 597.9 L1033.8 596.6 L1037.3 595.2 L1040.8 593.9 L1044.4 592.7 L1047.9 591.5 L1051.4 590.3 L1054.9 589.2 L1058.4 588.2 L1061.9 587.1 L1065.3 586.2 L1068.8 585.2 L1072.3 584.3 L1075.8 583.5 L1079.2 582.7 L1082.7 581.9 L1086.1 581.1 L1089.6 580.5 L1093.0 579.8 L1096.5 579.2 L1099.9 578.6 L1103.3 578.1 L1106.8 577.6 L1110.2 577.2 L1113.6 576.7 L1117.0 576.4 L1120.5 576.0 L1123.9 575.7 L1127.3 575.5 L1130.7 575.3 L1134.1 575.1 L1137.5 574.9 L1141.0 574.8 L1144.4 574.8 L1147.8 574.7 L1151.2 574.7 L1154.6 574.8 L1158.0 574.9 L1161.4 575.0 L1164.9 575.2 L1168.3 575.4 L1171.7 575.6 L1175.1 575.9 L1178.5 576.2 L1181.9 576.6 L1185.4 576.9 L1188.8 577.4 L1192.2 577.8 L1195.7 578.4 L1199.1 578.9 L1202.5 579.5 L1206.0 580.1 L1209.4 580.8 L1212.9 581.5 L1216.3 582.3 L1219.8 583.1 L1223.3 583.9 L1226.7 584.8 L1230.2 585.7 L1233.7 586.6 L1237.2 587.6 L1240.7 588.7 L1244.1 589.8 L1247.6 590.9 L1251.2 592.1 L1254.7 593.3 L1258.2 594.6 L1261.7 595.9 L1265.3 597.2 L1268.8 598.6 L1272.4 600.1 L1275.9 601.6 L1279.5 603.2 L1283.1 604.8 L1286.6 606.4 L1290.2 608.1 L1293.8 609.9 L1297.5 611.7 L1301.1 613.5 L1304.7 615.4 L1308.3 617.4 L1312.0 619.4 L1315.7 621.5 L1319.3 623.6 L1323.0 625.8 L1326.7 628.1 L1330.4 630.4 L1334.1 632.7 L1337.9 635.2 L1341.6 637.7 L1345.3 640.2 L1349.1 642.8 L1352.9 645.5 L1356.7 648.3 L1360.5 651.1 L1364.3 654.0 L1368.1 657.0 L1371.9 660.0 L1375.8 663.1 L1379.7 666.3 L1383.5 669.6 L1387.4 672.9 L1391.3 676.3 L1395.2 679.9 L1399.2 683.4 L1403.1 687.1 L1407.1 690.9 L1411.0 694.7 L1415.0 698.7 L1419.0 702.7 L1423.0 706.8 L1427.1 711.0 L1431.1 715.4 L1435.2 719.8 L1439.2 724.3 L1443.3 728.9 L1447.4 733.7 L1451.5 738.5 L1455.7 743.5 L1459.8 748.5 L1463.9 753.7 L1468.1 759.0 L1472.3 764.5 L1476.5 770.0 L1480.7 775.7 L1484.9 781.5 L1489.1 787.5 L1493.3 793.6 L1497.6 799.8 L1501.8 806.2 L1506.1 812.7 L1510.4 819.4 L1514.6 826.2 L1518.9 833.2 L1523.2 840.3" stroke="#2a7a1c" stroke-width="1.3" fill="none"/>
<path clip-path="url(#bedclip)" d="M1710.5 840.3 L1720.3 851.4 L1730.2 862.8 L1740.4 874.6 L1750.8 886.9 L1761.4 899.6 L1772.3 912.7 L1783.4 926.4 L1794.7 940.6 L1806.4 955.3 L1818.3 970.6 L1830.5 986.5 M460.6 994.7 L472.9 978.5 L485.0 962.9 L496.8 947.9 L508.2 933.4 L519.5 919.5 L530.4 906.1 L541.2 893.2 L551.7 880.7 L562.0 868.6 L572.0 857.0 L581.9 845.8 L591.6 834.9 L601.0 824.5 L610.3 814.3 L619.5 804.5 L628.4 795.1 L637.2 785.9 L645.8 777.0 L654.3 768.4 L662.6 760.1 L670.8 752.1 L678.9 744.3 L686.8 736.7 L694.6 729.4 L702.3 722.3 L709.8 715.4 L717.3 708.7 L724.6 702.2 L731.8 695.9 L739.0 689.8 L746.0 683.9 L752.9 678.1 L759.8 672.5 L766.5 667.1 L773.1 661.8 L779.7 656.7 L786.2 651.7 L792.6 646.9 L798.9 642.2 L805.2 637.7 L811.4 633.2 L817.5 628.9 L823.5 624.7 L829.5 620.7 L835.4 616.7 L841.2 612.9 L847.0 609.1 L852.8 605.5 L858.4 602.0 L864.0 598.5 L869.6 595.2 L875.1 591.9 L880.6 588.8 L886.0 585.7 L891.3 582.7 L896.7 579.8 L901.9 577.0 L907.1 574.3 L912.3 571.6 L917.5 569.1 L922.6 566.6 L927.6 564.1 L932.7 561.8 L937.7 559.5 L942.6 557.3 L947.5 555.1 L952.4 553.0 L957.3 551.0 L962.1 549.0 L966.9 547.1 L971.7 545.3 L976.4 543.5 L981.1 541.7 L985.8 540.1 L990.4 538.5 L995.1 536.9 L999.7 535.4 L1004.3 533.9 L1008.8 532.5 L1013.4 531.2 L1017.9 529.9 L1022.4 528.6 L1026.9 527.4 L1031.4 526.2 L1035.8 525.1 L1040.2 524.1 L1044.7 523.0 L1049.1 522.1 L1053.4 521.1 L1057.8 520.3 L1062.2 519.4 L1066.5 518.6 L1070.9 517.9 L1075.2 517.2 L1079.5 516.5 L1083.8 515.9 L1088.1 515.3 L1092.4 514.7 L1096.7 514.2 L1100.9 513.8 L1105.2 513.3 L1109.4 512.9 L1113.7 512.6 L1117.9 512.3 L1122.2 512.0 L1126.4 511.8 L1130.7 511.6 L1134.9 511.5 L1139.1 511.4 L1143.4 511.3 L1147.6 511.3 L1151.8 511.3 L1156.0 511.3 L1160.3 511.4 L1164.5 511.5 L1168.7 511.7 L1173.0 511.9 L1177.2 512.2 L1181.5 512.4 L1185.7 512.8 L1190.0 513.1 L1194.2 513.5 L1198.5 514.0 L1202.8 514.5 L1207.0 515.0 L1211.3 515.6 L1215.6 516.2 L1219.9 516.8 L1224.3 517.5 L1228.6 518.2 L1232.9 519.0 L1237.3 519.8 L1241.6 520.7 L1246.0 521.6 L1250.4 522.5 L1254.8 523.5 L1259.2 524.6 L1263.7 525.7 L1268.1 526.8 L1272.6 528.0 L1277.1 529.2 L1281.6 530.5 L1286.2 531.8 L1290.7 533.2 L1295.3 534.6 L1299.9 536.1 L1304.5 537.7 L1309.2 539.3 L1313.8 540.9 L1318.5 542.6 L1323.2 544.4 L1328.0 546.2 L1332.8 548.1 L1337.6 550.0 L1342.4 552.0 L1347.3 554.0 L1352.2 556.2 L1357.1 558.4 L1362.1 560.6 L1367.1 562.9 L1372.2 565.3 L1377.2 567.8 L1382.4 570.4 L1387.5 573.0 L1392.7 575.7 L1398.0 578.4 L1403.3 581.3 L1408.6 584.2 L1414.0 587.2 L1419.4 590.3 L1424.9 593.5 L1430.4 596.8 L1436.0 600.2 L1441.7 603.7 L1447.4 607.3 L1453.1 611.0 L1458.9 614.8 L1464.8 618.7 L1470.8 622.7 L1476.8 626.8 L1482.8 631.0 L1489.0 635.4 L1495.2 639.9 L1501.5 644.5 L1507.9 649.3 L1514.3 654.2 L1520.8 659.3 L1527.4 664.4 L1534.1 669.8 L1540.9 675.3 L1547.8 681.0 L1554.8 686.8 L1561.9 692.8 L1569.0 699.0 L1576.3 705.4 L1583.7 712.0 L1591.2 718.8 L1598.8 725.8 L1606.5 733.0 L1614.4 740.5 L1622.4 748.1 L1630.5 756.1 L1638.8 764.3 L1647.2 772.7 L1655.7 781.4 L1664.5 790.5 L1673.3 799.8 L1682.4 809.4 L1691.6 819.4 L1700.9 829.7 L1710.5 840.3" stroke="#302e8c" stroke-width="1.3" fill="none"/>
<g fill="none" stroke-width="1.25" stroke-opacity="0.9" stroke-linejoin="round"><path d="M1141 128 L1139 141 L1139 153 L1138 165 L1138 178 L1139 190 L1140 202 L1143 215 L1146 227 L1150 239 L1153 252 L1155 264 L1155 276 L1153 289 L1151 301 L1149 313 L1147 326 L1145 338 L1143 350 L1140 363 L1138 375 L1137 387 L1137 400 L1137 412 L1138 424 L1138 437 L1137 449 L1136 461 L1134 474 L1132 486 L1131 498 L1132 511 L1134 523 L1136 535 L1138 548 L1140 560 L1138 566 L1135 571 L1132 577 L1129 582 L1125 588 L1121 593 L1117 599 L1112 604" stroke="#b035b0"/><path d="M1141 128 L1159 141 L1166 153 L1172 165 L1177 178 L1183 190 L1187 202 L1190 215 L1194 227 L1196 239 L1198 252 L1199 264 L1200 276 L1202 289 L1205 301 L1209 313 L1212 326 L1214 338 L1213 350 L1212 363 L1211 375 L1210 387 L1209 400 L1208 412 L1207 424 L1208 437 L1210 449 L1214 461 L1217 474 L1218 486 L1218 498 L1217 511 L1216 523 L1217 535 L1217 548 L1218 560 L1226 563 L1232 566 L1236 570 L1241 573 L1245 576 L1250 579 L1254 582 L1258 585" stroke="#7035c8"/><path d="M1141 128 L1142 140 L1142 152 L1142 164 L1142 175 L1141 187 L1137 199 L1133 210 L1130 222 L1129 234 L1130 246 L1131 257 L1130 269 L1128 281 L1126 293 L1124 304 L1121 316 L1115 328 L1108 340 L1101 351 L1097 363 L1097 375 L1100 387 L1104 398 L1106 410 L1108 422 L1111 434 L1115 445 L1117 457 L1116 469 L1113 481 L1110 492 L1110 504 L1113 516 L1119 527 L1125 539" stroke="#3535b0"/><path d="M1141 128 L1140 140 L1140 152 L1139 164 L1138 176 L1136 187 L1134 199 L1132 211 L1131 223 L1129 235 L1127 246 L1126 258 L1126 270 L1126 282 L1126 294 L1125 305 L1124 317 L1123 329 L1123 341 L1124 353 L1126 365 L1127 376 L1129 388 L1131 400 L1134 412 L1137 424 L1138 435 L1137 447 L1136 459 L1134 471 L1132 483 L1131 494 L1129 506 L1127 518 L1125 530 L1125 542" stroke="#c86a25"/><path d="M1141 128 L1134 141 L1132 153 L1131 165 L1131 178 L1131 190 L1131 202 L1131 215 L1131 227 L1131 239 L1132 252 L1132 264 L1132 276 L1130 289 L1128 301 L1128 313 L1129 326 L1129 338 L1129 350 L1128 363 L1127 375 L1126 387 L1126 400 L1125 412 L1122 424 L1119 437 L1116 449 L1113 461 L1111 474 L1109 486 L1107 498 L1105 511 L1103 523 L1103 535 L1105 548 L1106 560 L1100 567 L1096 574 L1092 581 L1089 589 L1086 596 L1083 603 L1081 610 L1078 617" stroke="#b0a028"/><path d="M1141 128 L1130 141 L1126 153 L1123 165 L1122 178 L1120 190 L1118 202 L1115 215 L1112 227 L1109 239 L1107 252 L1107 264 L1107 276 L1108 289 L1107 301 L1106 313 L1105 326 L1103 338 L1101 350 L1098 363 L1094 375 L1088 387 L1084 400 L1080 412 L1079 424 L1080 437 L1080 449 L1081 461 L1080 474 L1078 486 L1076 498 L1074 511 L1072 523 L1069 535 L1066 548 L1062 560" stroke="#5aa530"/><path d="M1141 128 L1147 141 L1149 153 L1150 165 L1150 178 L1150 190 L1149 202 L1147 215 L1144 227 L1142 239 L1142 252 L1142 264 L1141 276 L1140 289 L1139 301 L1139 313 L1140 326 L1140 338 L1139 350 L1136 363 L1134 375 L1134 387 L1136 400 L1138 412 L1140 424 L1141 437 L1144 449 L1148 461 L1154 474 L1160 486 L1164 498 L1167 511 L1168 523 L1170 535 L1172 548 L1173 560 L1175 567 L1178 574 L1181 581 L1184 587 L1186 594 L1188 601 L1190 608 L1191 615" stroke="#2a9f90"/><path d="M1141 128 L1148 140 L1150 152 L1151 163 L1151 175 L1151 186 L1152 198 L1153 210 L1152 221 L1149 233 L1144 245 L1140 256 L1138 268 L1139 279 L1141 291 L1144 303 L1147 314 L1153 326 L1162 338 L1171 349 L1177 361 L1180 372 L1181 384 L1180 396 L1180 407 L1180 419 L1178 431 L1174 442 L1171 454 L1169 465 L1170 477 L1173 489 L1174 500 L1172 512 L1169 524 L1165 535" stroke="#c03a6a"/><path d="M1141 128 L1156 141 L1162 153 L1165 165 L1168 178 L1170 190 L1171 202 L1172 215 L1171 227 L1170 239 L1167 252 L1162 264 L1158 276 L1156 289 L1156 301 L1160 313 L1165 326 L1171 338 L1177 350 L1182 363 L1187 375 L1193 387 L1198 400 L1203 412 L1208 424 L1212 437 L1213 449 L1213 461 L1211 474 L1210 486 L1210 498 L1211 511 L1213 523 L1216 535 L1218 548 L1219 560 L1223 572 L1224 585 L1225 597 L1225 609 L1226 621 L1227 634 L1228 646 L1229 658" stroke="#a045c0"/><path d="M1141 128 L1130 141 L1126 153 L1122 165 L1119 178 L1116 190 L1112 202 L1109 215 L1106 227 L1102 239 L1099 252 L1095 264 L1093 276 L1093 289 L1092 301 L1092 313 L1091 326 L1089 338 L1087 350 L1084 363 L1082 375 L1080 387 L1078 400 L1078 412 L1077 424 L1077 437 L1078 449 L1078 461 L1079 474 L1080 486 L1081 498 L1083 511 L1083 523 L1083 535 L1082 548 L1081 560 L1078 596 L1074 633 L1071 669 L1067 705 L1064 742 L1061 778 L1059 815 L1057 851" stroke="#d07a28"/><path d="M1141 128 L1145 141 L1147 153 L1148 165 L1148 178 L1147 190 L1146 202 L1145 215 L1144 227 L1145 239 L1147 252 L1150 264 L1154 276 L1158 289 L1162 301 L1165 313 L1167 326 L1169 338 L1169 350 L1168 363 L1166 375 L1163 387 L1160 400 L1158 412 L1158 424 L1158 437 L1159 449 L1159 461 L1159 474 L1157 486 L1155 498 L1154 511 L1153 523 L1152 535 L1153 548 L1154 560 L1151 601 L1150 643 L1149 684 L1149 726 L1149 767 L1150 809 L1150 850 L1151 892" stroke="#4045b8"/><path d="M1141 128 L1139 141 L1137 153 L1134 165 L1130 178 L1126 190 L1122 202 L1118 215 L1115 227 L1111 239 L1107 252 L1105 264 L1105 276 L1108 289 L1110 301 L1110 313 L1109 326 L1108 338 L1108 350 L1110 363 L1112 375 L1114 387 L1116 400 L1118 412 L1121 424 L1125 437 L1129 449 L1130 461 L1129 474 L1125 486 L1121 498 L1117 511 L1113 523 L1108 535 L1103 548 L1097 560 L1096 599 L1098 638 L1100 677 L1103 716 L1106 755 L1108 794 L1110 833 L1112 872" stroke="#98a82a"/><path d="M1141 128 L1156 141 L1161 153 L1163 165 L1164 178 L1165 190 L1167 202 L1170 215 L1174 227 L1178 239 L1183 252 L1189 264 L1197 276 L1205 289 L1210 301 L1213 313 L1213 326 L1213 338 L1214 350 L1214 363 L1213 375 L1210 387 L1207 400 L1205 412 L1206 424 L1207 437 L1208 449 L1207 461 L1206 474 L1206 486 L1208 498 L1210 511 L1210 523 L1208 535 L1207 548 L1207 560 L1211 571 L1216 583 L1221 594 L1226 606 L1230 617 L1234 629 L1238 640 L1241 652" stroke="#c84585"/><path d="M1141 128 L1147 139 L1149 149 L1151 160 L1153 170 L1154 181 L1155 192 L1156 202 L1156 213 L1158 223 L1160 234 L1165 244 L1171 255 L1175 265 L1178 276 L1179 286 L1179 297 L1178 307 L1178 318 L1177 328 L1176 339 L1175 350 L1173 360 L1172 371 L1173 381 L1176 392 L1179 402 L1181 413 L1180 423 L1179 434 L1176 444 L1173 455 L1171 465 L1168 476 L1166 487 L1163 497" stroke="#b05a28"/><path d="M1141 128 L1148 139 L1150 151 L1152 162 L1153 173 L1154 184 L1156 195 L1158 207 L1161 218 L1164 229 L1167 240 L1169 251 L1171 262 L1173 274 L1176 285 L1178 296 L1178 307 L1178 318 L1178 330 L1180 341 L1183 352 L1185 363 L1185 374 L1185 385 L1185 397 L1186 408 L1188 419 L1188 430 L1187 441 L1185 452 L1182 464 L1180 475 L1178 486 L1177 497 L1174 508 L1172 520" stroke="#b035b0"/><path d="M1141 128 L1143 141 L1143 153 L1144 165 L1145 178 L1146 190 L1149 202 L1152 215 L1157 227 L1161 239 L1164 252 L1165 264 L1165 276 L1164 289 L1164 301 L1166 313 L1167 326 L1168 338 L1169 350 L1170 363 L1173 375 L1176 387 L1181 400 L1186 412 L1189 424 L1191 437 L1190 449 L1188 461 L1185 474 L1183 486 L1181 498 L1178 511 L1175 523 L1171 535 L1168 548 L1165 560 L1163 578 L1160 595 L1156 613 L1152 631 L1149 648 L1146 666 L1144 684 L1142 702" stroke="#7035c8"/><path d="M1141 128 L1151 140 L1155 152 L1159 163 L1163 175 L1166 186 L1170 198 L1174 210 L1180 221 L1185 233 L1191 245 L1195 256 L1197 268 L1195 280 L1193 291 L1192 303 L1190 315 L1188 326 L1185 338 L1181 349 L1178 361 L1176 373 L1176 384 L1177 396 L1179 408 L1180 419 L1181 431 L1182 443 L1184 454 L1187 466 L1190 477 L1193 489 L1194 501 L1194 512 L1194 524 L1195 536" stroke="#3535b0"/><path d="M1141 128 L1142 141 L1142 153 L1142 165 L1141 178 L1141 190 L1142 202 L1144 215 L1148 227 L1153 239 L1157 252 L1159 264 L1158 276 L1156 289 L1155 301 L1155 313 L1156 326 L1158 338 L1160 350 L1163 363 L1165 375 L1168 387 L1170 400 L1172 412 L1171 424 L1168 437 L1164 449 L1160 461 L1157 474 L1157 486 L1159 498 L1162 511 L1165 523 L1165 535 L1164 548 L1161 560 L1154 585 L1150 610 L1147 635 L1144 660 L1141 685 L1139 710 L1136 735 L1133 760" stroke="#c86a25"/><path d="M1141 128 L1158 139 L1164 149 L1169 160 L1173 170 L1177 180 L1181 191 L1185 201 L1189 212 L1194 222 L1201 233 L1208 243 L1214 254 L1218 264 L1220 274 L1221 285 L1223 295 L1225 306 L1228 316 L1231 327 L1233 337 L1234 348 L1235 358 L1237 368 L1240 379 L1244 389 L1247 400 L1250 410 L1250 421 L1249 431 L1248 441 L1247 452 L1247 462 L1246 473 L1243 483 L1239 494" stroke="#b0a028"/><path d="M1141 128 L1146 140 L1148 153 L1149 165 L1151 177 L1154 189 L1157 201 L1160 213 L1161 225 L1162 237 L1161 249 L1161 262 L1163 274 L1166 286 L1169 298 L1173 310 L1176 322 L1179 334 L1183 346 L1186 358 L1188 371 L1188 383 L1187 395 L1184 407 L1181 419 L1180 431 L1180 443 L1183 455 L1185 467 L1187 480 L1188 492 L1187 504 L1186 516 L1184 528 L1182 540 L1179 552" stroke="#5aa530"/><path d="M1141 128 L1132 141 L1128 153 L1126 165 L1124 178 L1121 190 L1119 202 L1116 215 L1113 227 L1110 239 L1108 252 L1106 264 L1104 276 L1104 289 L1105 301 L1107 313 L1109 326 L1111 338 L1111 350 L1110 363 L1109 375 L1108 387 L1108 400 L1107 412 L1106 424 L1105 437 L1105 449 L1106 461 L1107 474 L1108 486 L1107 498 L1106 511 L1103 523 L1101 535 L1098 548 L1096 560 L1092 561 L1086 562 L1080 563 L1073 564 L1065 565 L1058 566 L1051 567 L1044 568" stroke="#2a9f90"/><path d="M1141 128 L1154 141 L1159 153 L1162 165 L1166 178 L1171 190 L1177 202 L1183 215 L1190 227 L1196 239 L1200 252 L1203 264 L1206 276 L1208 289 L1208 301 L1206 313 L1203 326 L1202 338 L1203 350 L1205 363 L1208 375 L1210 387 L1210 400 L1210 412 L1211 424 L1212 437 L1212 449 L1210 461 L1206 474 L1201 486 L1197 498 L1195 511 L1195 523 L1194 535 L1194 548 L1194 560 L1197 565 L1197 570 L1198 575 L1198 580 L1199 585 L1200 590 L1201 595 L1203 600" stroke="#c03a6a"/><path d="M1141 128 L1143 141 L1143 153 L1143 165 L1142 178 L1140 190 L1137 202 L1136 215 L1135 227 L1135 239 L1134 252 L1133 264 L1133 276 L1136 289 L1140 301 L1143 313 L1144 326 L1145 338 L1145 350 L1147 363 L1149 375 L1149 387 L1148 400 L1147 412 L1147 424 L1148 437 L1150 449 L1151 461 L1152 474 L1153 486 L1154 498 L1158 511 L1161 523 L1163 535 L1164 548 L1163 560 L1161 578 L1158 595 L1156 613 L1155 631 L1153 648 L1153 666 L1152 684 L1152 701" stroke="#a045c0"/><path d="M1141 128 L1157 139 L1163 150 L1166 160 L1169 171 L1171 181 L1173 192 L1175 203 L1177 213 L1180 224 L1184 234 L1190 245 L1194 256 L1197 266 L1199 277 L1201 287 L1203 298 L1205 309 L1206 319 L1206 330 L1208 340 L1210 351 L1215 362 L1219 372 L1222 383 L1224 393 L1225 404 L1226 415 L1227 425 L1226 436 L1225 446 L1222 457 L1220 468 L1219 478 L1220 489 L1222 499" stroke="#d07a28"/><path d="M1141 128 L1153 141 L1157 153 L1160 165 L1163 178 L1165 190 L1166 202 L1166 215 L1164 227 L1162 239 L1160 252 L1159 264 L1159 276 L1159 289 L1160 301 L1161 313 L1163 326 L1166 338 L1170 350 L1174 363 L1176 375 L1178 387 L1179 400 L1180 412 L1181 424 L1183 437 L1184 449 L1186 461 L1187 474 L1188 486 L1190 498 L1192 511 L1195 523 L1198 535 L1200 548 L1200 560 L1201 569 L1205 578 L1209 587 L1213 596 L1217 605 L1220 614 L1224 623 L1226 632" stroke="#4045b8"/><path d="M1141 128 L1149 140 L1153 151 L1156 163 L1160 174 L1163 186 L1166 197 L1170 209 L1174 220 L1178 232 L1180 243 L1182 255 L1182 266 L1182 278 L1183 289 L1183 301 L1182 312 L1180 324 L1180 335 L1180 347 L1182 358 L1183 370 L1184 381 L1183 393 L1183 404 L1184 416 L1186 427 L1186 439 L1185 450 L1183 462 L1181 473 L1180 485 L1179 496 L1178 508 L1176 519 L1174 531" stroke="#98a82a"/><path d="M1141 128 L1156 141 L1163 153 L1167 165 L1172 178 L1176 190 L1179 202 L1180 215 L1181 227 L1182 239 L1185 252 L1189 264 L1194 276 L1199 289 L1203 301 L1205 313 L1205 326 L1204 338 L1202 350 L1201 363 L1199 375 L1196 387 L1192 400 L1189 412 L1187 424 L1186 437 L1188 449 L1192 461 L1196 474 L1198 486 L1199 498 L1198 511 L1197 523 L1196 535 L1195 548 L1195 560 L1204 561 L1210 563 L1215 564 L1220 565 L1225 566 L1229 568 L1234 569 L1238 570" stroke="#c84585"/><path d="M1141 128 L1155 141 L1160 153 L1163 165 L1165 178 L1168 190 L1171 202 L1174 215 L1177 227 L1178 239 L1180 252 L1182 264 L1185 276 L1188 289 L1188 301 L1186 313 L1182 326 L1178 338 L1174 350 L1172 363 L1170 375 L1168 387 L1165 400 L1163 412 L1163 424 L1166 437 L1171 449 L1177 461 L1183 474 L1187 486 L1191 498 L1195 511 L1200 523 L1205 535 L1208 548 L1210 560 L1216 587 L1219 613 L1222 640 L1225 666 L1228 693 L1231 719 L1235 746 L1239 772" stroke="#b05a28"/><path d="M1141 128 L1161 141 L1168 153 L1174 165 L1179 178 L1184 190 L1189 202 L1192 215 L1194 227 L1196 239 L1196 252 L1197 264 L1199 276 L1200 289 L1202 301 L1203 313 L1205 326 L1207 338 L1209 350 L1210 363 L1211 375 L1210 387 L1209 400 L1210 412 L1212 424 L1214 437 L1218 449 L1221 461 L1224 474 L1227 486 L1231 498 L1234 511 L1236 523 L1237 535 L1237 548 L1237 560 L1239 598 L1241 636 L1242 674 L1244 712 L1247 750 L1249 788 L1252 826 L1256 864" stroke="#b035b0"/><path d="M1141 128 L1136 141 L1134 153 L1131 165 L1128 178 L1124 190 L1120 202 L1115 215 L1111 227 L1108 239 L1106 252 L1106 264 L1106 276 L1108 289 L1108 301 L1108 313 L1109 326 L1110 338 L1111 350 L1112 363 L1113 375 L1113 387 L1112 400 L1112 412 L1113 424 L1115 437 L1118 449 L1120 461 L1121 474 L1120 486 L1118 498 L1115 511 L1112 523 L1109 535 L1106 548 L1102 560 L1098 568 L1097 577 L1096 585 L1095 593 L1095 602 L1095 610 L1095 618 L1095 627" stroke="#7035c8"/><path d="M1141 128 L1155 141 L1160 153 L1164 165 L1167 178 L1169 190 L1170 202 L1169 215 L1168 227 L1167 239 L1166 252 L1163 264 L1160 276 L1158 289 L1156 301 L1157 313 L1159 326 L1162 338 L1165 350 L1167 363 L1168 375 L1168 387 L1170 400 L1172 412 L1175 424 L1176 437 L1175 449 L1174 461 L1172 474 L1173 486 L1175 498 L1178 511 L1181 523 L1183 535 L1186 548 L1189 560 L1191 579 L1197 598 L1203 618 L1209 637 L1215 656 L1221 675 L1227 695 L1232 714" stroke="#3535b0"/><path d="M1141 128 L1160 139 L1167 150 L1172 161 L1176 172 L1181 183 L1185 193 L1190 204 L1196 215 L1202 226 L1209 237 L1214 248 L1217 259 L1219 270 L1219 280 L1220 291 L1222 302 L1226 313 L1232 324 L1238 335 L1244 346 L1248 356 L1250 367 L1250 378 L1249 389 L1247 400 L1245 411 L1243 422 L1242 432 L1241 443 L1240 454 L1240 465 L1240 476 L1242 487 L1244 498 L1246 508" stroke="#c86a25"/><path d="M1141 128 L1140 139 L1139 149 L1139 159 L1138 169 L1136 180 L1134 190 L1133 200 L1133 210 L1134 221 L1135 231 L1137 241 L1140 251 L1145 262 L1150 272 L1154 282 L1155 292 L1155 303 L1154 313 L1153 323 L1153 333 L1153 344 L1151 354 L1150 364 L1149 374 L1151 385 L1155 395 L1158 405 L1160 415 L1159 426 L1158 436 L1157 446 L1156 457 L1154 467 L1150 477 L1144 487" stroke="#b0a028"/><path d="M1141 128 L1149 141 L1151 153 L1153 165 L1154 178 L1157 190 L1161 202 L1168 215 L1175 227 L1181 239 L1185 252 L1187 264 L1188 276 L1187 289 L1183 301 L1178 313 L1174 326 L1172 338 L1175 350 L1178 363 L1180 375 L1179 387 L1175 400 L1172 412 L1168 424 L1165 437 L1160 449 L1155 461 L1152 474 L1154 486 L1159 498 L1166 511 L1172 523 L1176 535 L1177 548 L1179 560 L1184 594 L1186 628 L1188 662 L1189 696 L1191 730 L1192 764 L1194 798 L1197 832" stroke="#5aa530"/><path d="M1141 128 L1139 141 L1139 153 L1139 165 L1139 178 L1139 190 L1140 202 L1141 215 L1143 227 L1146 239 L1147 252 L1148 264 L1148 276 L1148 289 L1150 301 L1153 313 L1156 326 L1158 338 L1158 350 L1158 363 L1158 375 L1159 387 L1159 400 L1158 412 L1154 424 L1149 437 L1143 449 L1138 461 L1134 474 L1132 486 L1129 498 L1126 511 L1124 523 L1124 535 L1125 548 L1129 560 L1130 578 L1128 596 L1127 613 L1126 631 L1125 649 L1125 667 L1125 684 L1126 702" stroke="#2a9f90"/><path d="M1141 128 L1132 141 L1127 153 L1123 165 L1118 178 L1113 190 L1107 202 L1101 215 L1096 227 L1091 239 L1087 252 L1086 264 L1088 276 L1092 289 L1095 301 L1097 313 L1098 326 L1099 338 L1100 350 L1101 363 L1102 375 L1103 387 L1102 400 L1100 412 L1097 424 L1095 437 L1093 449 L1092 461 L1092 474 L1092 486 L1090 498 L1087 511 L1084 523 L1080 535 L1077 548 L1075 560 L1071 572 L1070 585 L1068 597 L1067 610 L1067 622 L1067 635 L1067 647 L1067 660" stroke="#c03a6a"/><path d="M1141 128 L1147 141 L1150 153 L1152 165 L1153 178 L1153 190 L1153 202 L1154 215 L1155 227 L1157 239 L1159 252 L1162 264 L1163 276 L1162 289 L1161 301 L1158 313 L1155 326 L1152 338 L1150 350 L1147 363 L1144 375 L1143 387 L1142 400 L1143 412 L1146 424 L1149 437 L1153 449 L1156 461 L1158 474 L1158 486 L1158 498 L1157 511 L1157 523 L1159 535 L1161 548 L1165 560 L1163 586 L1164 613 L1166 639 L1168 665 L1171 692 L1173 718 L1175 744 L1176 771" stroke="#a045c0"/><path d="M1141 128 L1141 141 L1141 153 L1141 165 L1142 178 L1143 190 L1145 202 L1146 215 L1146 227 L1145 239 L1144 252 L1145 264 L1146 276 L1148 289 L1150 301 L1152 313 L1154 326 L1157 338 L1161 350 L1163 363 L1164 375 L1163 387 L1161 400 L1158 412 L1157 424 L1156 437 L1156 449 L1156 461 L1155 474 L1155 486 L1155 498 L1156 511 L1156 523 L1155 535 L1151 548 L1147 560 L1145 570 L1144 580 L1144 590 L1143 601 L1142 611 L1140 621 L1138 631 L1136 641" stroke="#d07a28"/><path d="M1141 128 L1139 140 L1139 152 L1140 164 L1141 176 L1142 188 L1144 200 L1147 212 L1149 224 L1151 236 L1151 248 L1148 260 L1143 272 L1139 284 L1136 296 L1135 308 L1134 320 L1133 332 L1132 344 L1132 356 L1133 368 L1133 380 L1131 392 L1127 404 L1121 416 L1117 428 L1116 440 L1116 452 L1118 464 L1120 476 L1122 488 L1125 500 L1130 512 L1134 524 L1137 536 L1138 548" stroke="#4045b8"/><path d="M1141 128 L1140 141 L1139 153 L1138 165 L1138 178 L1137 190 L1136 202 L1136 215 L1135 227 L1134 239 L1134 252 L1134 264 L1135 276 L1137 289 L1139 301 L1142 313 L1144 326 L1145 338 L1146 350 L1145 363 L1144 375 L1143 387 L1142 400 L1141 412 L1140 424 L1139 437 L1137 449 L1136 461 L1136 474 L1136 486 L1136 498 L1136 511 L1135 523 L1134 535 L1132 548 L1129 560 L1132 572 L1132 585 L1132 597 L1131 609 L1130 622 L1128 634 L1128 646 L1127 659" stroke="#98a82a"/><path d="M1141 128 L1142 141 L1142 153 L1141 165 L1140 178 L1138 190 L1136 202 L1134 215 L1134 227 L1136 239 L1139 252 L1142 264 L1144 276 L1146 289 L1147 301 L1148 313 L1150 326 L1151 338 L1151 350 L1150 363 L1150 375 L1150 387 L1151 400 L1153 412 L1154 424 L1154 437 L1153 449 L1151 461 L1149 474 L1146 486 L1144 498 L1141 511 L1137 523 L1133 535 L1131 548 L1130 560 L1133 568 L1134 577 L1135 585 L1135 593 L1137 601 L1138 610 L1140 618 L1142 626" stroke="#c84585"/><path d="M1141 128 L1146 141 L1148 153 L1149 165 L1150 178 L1150 190 L1151 202 L1154 215 L1157 227 L1161 239 L1165 252 L1168 264 L1172 276 L1173 289 L1174 301 L1172 313 L1168 326 L1164 338 L1162 350 L1161 363 L1161 375 L1162 387 L1161 400 L1161 412 L1161 424 L1161 437 L1160 449 L1159 461 L1157 474 L1154 486 L1154 498 L1156 511 L1160 523 L1164 535 L1168 548 L1171 560 L1167 569 L1164 579 L1162 588 L1159 598 L1157 607 L1156 617 L1155 626 L1154 636" stroke="#b05a28"/><path d="M1141 128 L1142 140 L1142 152 L1142 163 L1141 175 L1140 186 L1139 198 L1138 210 L1136 221 L1136 233 L1137 245 L1141 256 L1147 268 L1153 280 L1159 291 L1162 303 L1165 314 L1166 326 L1167 338 L1168 349 L1168 361 L1168 373 L1167 384 L1165 396 L1162 407 L1161 419 L1161 431 L1163 442 L1166 454 L1168 466 L1170 477 L1170 489 L1168 501 L1165 512 L1162 524 L1159 535" stroke="#b035b0"/><path d="M1141 128 L1143 139 L1143 151 L1144 162 L1145 173 L1146 184 L1145 195 L1142 206 L1138 218 L1134 229 L1131 240 L1128 251 L1125 262 L1122 273 L1120 285 L1118 296 L1119 307 L1121 318 L1123 329 L1124 341 L1123 352 L1122 363 L1121 374 L1122 385 L1122 396 L1122 408 L1120 419 L1118 430 L1118 441 L1119 452 L1122 463 L1126 475 L1129 486 L1132 497 L1135 508 L1139 519" stroke="#7035c8"/><path d="M1141 128 L1145 141 L1146 153 L1147 165 L1147 178 L1147 190 L1145 202 L1141 215 L1137 227 L1134 239 L1131 252 L1130 264 L1131 276 L1133 289 L1136 301 L1140 313 L1145 326 L1152 338 L1158 350 L1162 363 L1164 375 L1164 387 L1162 400 L1161 412 L1161 424 L1162 437 L1163 449 L1164 461 L1164 474 L1164 486 L1164 498 L1165 511 L1166 523 L1166 535 L1164 548 L1160 560 L1160 570 L1160 580 L1160 589 L1160 599 L1159 609 L1158 619 L1157 629 L1155 639" stroke="#3535b0"/><path d="M1141 128 L1138 140 L1136 152 L1135 164 L1135 176 L1135 188 L1135 200 L1134 212 L1133 224 L1131 236 L1130 248 L1128 260 L1128 271 L1128 283 L1128 295 L1127 307 L1128 319 L1129 331 L1131 343 L1135 355 L1140 367 L1145 379 L1150 391 L1153 403 L1154 415 L1154 427 L1152 438 L1150 450 L1148 462 L1146 474 L1144 486 L1141 498 L1137 510 L1133 522 L1130 534 L1128 546" stroke="#c86a25"/><path d="M1141 128 L1136 139 L1134 151 L1132 162 L1130 173 L1128 184 L1127 195 L1126 207 L1125 218 L1124 229 L1123 240 L1121 251 L1119 263 L1117 274 L1114 285 L1112 296 L1109 307 L1106 318 L1103 330 L1103 341 L1103 352 L1105 363 L1107 374 L1108 386 L1109 397 L1108 408 L1108 419 L1107 430 L1107 442 L1107 453 L1107 464 L1108 475 L1109 486 L1110 497 L1112 509 L1114 520" stroke="#b0a028"/><path d="M1141 128 L1152 139 L1157 150 L1161 161 L1164 172 L1166 183 L1166 194 L1165 205 L1165 216 L1166 227 L1168 238 L1170 249 L1171 260 L1172 271 L1173 282 L1174 293 L1175 304 L1175 315 L1173 326 L1169 337 L1163 348 L1158 359 L1154 370 L1153 381 L1154 393 L1156 404 L1158 415 L1160 426 L1162 437 L1164 448 L1167 459 L1170 470 L1172 481 L1172 492 L1170 503 L1167 514" stroke="#5aa530"/><path d="M1141 128 L1142 141 L1143 153 L1143 165 L1144 178 L1145 190 L1145 202 L1146 215 L1147 227 L1148 239 L1149 252 L1149 264 L1147 276 L1144 289 L1141 301 L1139 313 L1137 326 L1135 338 L1132 350 L1129 363 L1128 375 L1128 387 L1130 400 L1133 412 L1134 424 L1136 437 L1138 449 L1141 461 L1144 474 L1147 486 L1148 498 L1148 511 L1147 523 L1147 535 L1148 548 L1149 560 L1145 566 L1143 571 L1142 577 L1142 583 L1141 589 L1141 594 L1141 600 L1141 606" stroke="#2a9f90"/><path d="M1141 128 L1143 138 L1144 148 L1145 159 L1145 169 L1146 179 L1147 189 L1151 199 L1156 209 L1162 219 L1168 229 L1173 239 L1178 249 L1183 260 L1188 270 L1190 280 L1190 290 L1187 300 L1184 310 L1183 320 L1182 330 L1180 340 L1176 350 L1172 360 L1169 371 L1168 381 L1169 391 L1170 401 L1169 411 L1167 421 L1165 431 L1166 441 L1167 451 L1167 461 L1164 472 L1160 482" stroke="#c03a6a"/><path d="M1141 128 L1149 139 L1151 150 L1154 161 L1156 172 L1157 183 L1158 194 L1159 205 L1161 216 L1166 227 L1173 238 L1182 249 L1191 260 L1196 271 L1200 282 L1201 293 L1202 304 L1201 315 L1199 326 L1195 337 L1189 348 L1182 359 L1175 370 L1170 381 L1169 392 L1170 403 L1172 414 L1174 425 L1175 436 L1175 447 L1175 458 L1175 469 L1177 480 L1178 491 L1179 502 L1179 513" stroke="#a045c0"/><path d="M1141 128 L1146 140 L1148 152 L1150 164 L1151 177 L1153 189 L1154 201 L1155 213 L1154 225 L1152 237 L1149 249 L1146 261 L1143 273 L1143 285 L1144 297 L1146 309 L1148 321 L1149 333 L1150 345 L1150 357 L1149 369 L1148 381 L1147 393 L1147 405 L1146 418 L1145 430 L1145 442 L1147 454 L1149 466 L1153 478 L1156 490 L1160 502 L1162 514 L1162 526 L1161 538 L1160 550" stroke="#d07a28"/><path d="M1141 128 L1140 141 L1138 153 L1137 165 L1137 178 L1136 190 L1135 202 L1134 215 L1133 227 L1132 239 L1131 252 L1130 264 L1129 276 L1128 289 L1128 301 L1129 313 L1132 326 L1136 338 L1141 350 L1146 363 L1149 375 L1150 387 L1149 400 L1148 412 L1146 424 L1144 437 L1141 449 L1137 461 L1132 474 L1129 486 L1128 498 L1128 511 L1129 523 L1130 535 L1130 548 L1128 560 L1131 565 L1130 570 L1129 575 L1128 580 L1126 584 L1125 589 L1125 594 L1124 599" stroke="#4045b8"/><path d="M1141 128 L1139 139 L1138 150 L1137 162 L1136 173 L1135 184 L1135 195 L1135 206 L1135 217 L1136 228 L1137 239 L1139 250 L1141 261 L1142 272 L1144 283 L1146 294 L1147 305 L1146 316 L1145 328 L1142 339 L1138 350 L1135 361 L1132 372 L1130 383 L1130 394 L1130 405 L1130 416 L1130 427 L1130 438 L1129 449 L1128 460 L1127 471 L1126 482 L1125 494 L1123 505 L1120 516" stroke="#98a82a"/></g>
<path d="M1141 128 L1146 840" stroke="#30ff30" stroke-width="1.8"/>
<path d="M1137 130 L1134 891" stroke="#30c0a8" stroke-width="1.4"/>
<path d="M1136 56 L1141 128" stroke="#30c0b0" stroke-width="1.2"/>
<g stroke-width="1.4" stroke-opacity="0.85"><path d="M1132.0 617.8 L1099.0 623.8" stroke="#e0d0f8"/><path d="M1114.7 473.7 L1118.9 512.0" stroke="#f8e0c8"/><path d="M1199.5 545.2 L1177.0 555.0" stroke="#f0d8ec"/><path d="M1162.7 583.4 L1183.1 584.3" stroke="#e0f0c8"/><path d="M1206.1 547.3 L1193.8 558.7" stroke="#e0d0f8"/><path d="M1234.9 588.2 L1248.8 594.0" stroke="#f0d8ec"/><path d="M1182.6 647.7 L1162.1 656.4" stroke="#f4c8d8"/><path d="M1198.6 569.5 L1188.0 586.6" stroke="#f8e0c8"/><path d="M1188.0 551.1 L1213.3 552.9" stroke="#f4c8d8"/><path d="M1258.9 516.8 L1276.7 547.4" stroke="#e0d0f8"/><path d="M1218.2 529.8 L1238.2 559.1" stroke="#f8f0f8"/><path d="M1155.1 596.9 L1177.6 611.7" stroke="#f4c8d8"/><path d="M1284.7 479.0 L1259.1 504.6" stroke="#f0d8ec"/><path d="M1201.9 567.9 L1208.1 591.5" stroke="#f0d8ec"/><path d="M1110.9 590.9 L1093.1 593.4" stroke="#f4c8d8"/><path d="M1195.9 641.1 L1172.6 645.4" stroke="#e0f0c8"/><path d="M1194.7 548.7 L1185.1 581.9" stroke="#e0f0c8"/><path d="M1125.9 629.4 L1164.3 633.8" stroke="#f0d8ec"/><path d="M1168.2 543.6 L1187.8 553.5" stroke="#f8e0c8"/><path d="M1207.3 569.5 L1220.0 588.6" stroke="#f4c8d8"/><path d="M1175.2 597.2 L1190.4 619.6" stroke="#f8e0c8"/><path d="M1122.9 495.5 L1094.6 496.7" stroke="#f8f0f8"/><path d="M1221.6 534.4 L1243.7 556.5" stroke="#f4c8d8"/><path d="M1186.3 495.2 L1171.1 499.4" stroke="#f8f0f8"/><path d="M1152.4 642.9 L1148.7 660.9" stroke="#f8f0f8"/><path d="M1187.8 496.6 L1191.6 515.0" stroke="#f8f0f8"/><path d="M1169.8 646.1 L1134.6 663.7" stroke="#f8f0f8"/><path d="M1215.7 638.8 L1202.9 657.9" stroke="#e0f0c8"/><path d="M1146.6 494.1 L1161.6 530.9" stroke="#f4c8d8"/><path d="M1206.3 581.0 L1206.3 604.4" stroke="#f0d8ec"/><path d="M1114.6 571.2 L1114.5 587.8" stroke="#e0f0c8"/><path d="M1176.0 589.2 L1159.2 618.8" stroke="#e0f0c8"/><path d="M1093.6 612.9 L1120.2 642.1" stroke="#f8e0c8"/><path d="M1157.7 534.4 L1126.9 539.7" stroke="#e0d0f8"/><path d="M1187.8 607.9 L1199.1 626.5" stroke="#e0f0c8"/><path d="M1134.6 608.8 L1119.0 640.0" stroke="#e0f0c8"/><path d="M1153.8 626.3 L1164.6 662.8" stroke="#f4c8d8"/><path d="M1214.2 616.9 L1192.3 649.6" stroke="#e0f0c8"/><path d="M1130.5 506.3 L1097.0 525.2" stroke="#f8f0f8"/><path d="M1143.7 531.3 L1174.5 539.1" stroke="#f8f0f8"/><path d="M1205.8 573.9 L1193.2 596.1" stroke="#e0d0f8"/><path d="M1239.4 576.0 L1219.5 584.8" stroke="#f0d8ec"/><path d="M1057.1 850.9 L1057.8 833.8" stroke="#f0d8ec"/><path d="M1151.0 891.8 L1148.4 867.8" stroke="#f0d8ec"/><path d="M1112.1 871.9 L1109.5 845.7" stroke="#f0d8ec"/><path d="M1141.6 701.5 L1145.5 676.0" stroke="#f0d8ec"/><path d="M1132.6 760.5 L1129.9 730.8" stroke="#f0d8ec"/><path d="M1151.8 701.2 L1148.7 673.0" stroke="#f0d8ec"/><path d="M1238.7 772.2 L1238.6 742.7" stroke="#f0d8ec"/><path d="M1255.7 864.5 L1255.0 841.7" stroke="#f0d8ec"/><path d="M1231.8 713.8 L1233.1 694.2" stroke="#f0d8ec"/><path d="M1196.6 832.5 L1194.2 817.3" stroke="#f0d8ec"/><path d="M1125.8 702.2 L1124.8 676.7" stroke="#f0d8ec"/><path d="M1176.3 770.6 L1179.9 751.0" stroke="#f0d8ec"/></g>
</svg>
<div id="lp">
<div class="abs" style="left:13px;top:13px;width:286px;height:34px;background:#17a2b8;border-radius:6px"></div>
<div class="abs" style="left:24px;top:13px;line-height:34px;font-size:15px;font-weight:bold;color:#fff">Simulation Settings</div>
<svg class="abs" style="left:278px;top:24px" width="9" height="13" viewBox="0 0 9 13"><path d="M2 1.5 L7 6.5 L2 11.5" fill="none" stroke="#fff" stroke-width="2.2" stroke-linecap="round" stroke-linejoin="round"/></svg>
<div class="abs" style="left:13px;top:64px;width:286px;height:900px;background:#022a5b;border:1px solid #24497a;border-radius:6px"></div>
<div class="abs" style="left:13px;top:64px;width:286px;height:32px;background:#0757b9;border-radius:6px 6px 0 0"></div>
<div class="abs" style="left:24px;top:64px;line-height:32px;font-size:15px;font-weight:bold;color:#fff">Object Properties</div>
<svg class="abs" style="left:275px;top:75px" width="13" height="9" viewBox="0 0 13 9"><path d="M1.5 7 L6.5 2 L11.5 7" fill="none" stroke="#fff" stroke-width="2.2" stroke-linecap="round" stroke-linejoin="round"/></svg>
<svg class="abs" style="left:24px;top:112px" width="12" height="14" viewBox="0 0 12 14" fill="#17a2b8"><ellipse cx="6" cy="2.6" rx="6" ry="2.6"/><path d="M0 4.2 Q6 7.6 12 4.2 V7.4 Q6 10.8 0 7.4 Z"/><path d="M0 9 Q6 12.4 12 9 V11.4 Q6 15.6 0 11.4 Z"/></svg>
<div class="abs" style="left:43.7px;top:111px;line-height:17px;font-size:12px;font-weight:bold;color:#dfe6ef">Saved Objects from Study</div>
<div class="inp" style="left:24px;top:137px;width:264px;height:33px;overflow:hidden;white-space:nowrap;padding-right:12px">DNV LIB - Class 1 - Drill collar/casing, scaffolding</div>
<div class="help" style="left:24px;top:175px">Select an object to load its properties</div>
<div class="lbl" style="left:24px;top:214.6px;line-height:18px">Mass in Air (kg)</div>
<div class="vlbl" style="left:164px;top:214.6px;line-height:18px">Variability %</div>
<div class="inp" style="left:24px;top:238.8px;width:124px">1000</div>
<div class="inp" style="left:164px;top:238.8px;width:124px">0</div>
<div class="lbl" style="left:24px;top:283.8px;line-height:18px">Length (m)</div>
<div class="vlbl" style="left:164px;top:283.8px;line-height:18px">Variability %</div>
<div class="inp" style="left:24px;top:306.3px;width:124px">12</div>
<div class="inp" style="left:164px;top:306.3px;width:124px">0</div>
<div class="lbl" style="left:24px;top:353.0px;line-height:18px">Width (m)</div>
<div class="vlbl" style="left:164px;top:353.0px;line-height:18px">Variability %</div>
<div class="inp" style="left:24px;top:375.5px;width:124px">0.1</div>
<div class="inp" style="left:164px;top:375.5px;width:124px">0</div>
<div class="lbl" style="left:24px;top:422.2px;line-height:18px">Height (m)</div>
<div class="vlbl" style="left:164px;top:422.2px;line-height:18px">Variability %</div>
<div class="inp" style="left:24px;top:444.7px;width:124px">0.1</div>
<div class="inp" style="left:164px;top:444.7px;width:124px">0</div>
<div class="lbl" style="left:24px;top:487.4px;line-height:18px">Added Mass</div>
<div class="lbl" style="left:24px;top:506.5px;line-height:18px">Coefficient</div>
<div class="vlbl" style="left:164px;top:491.4px;line-height:18px">Variability %</div>
<div class="inp" style="left:24px;top:529.4px;width:124px">0.5</div>
<div class="inp" style="left:164px;top:529.4px;width:124px">0</div>
<div class="lbl" style="left:24px;top:615.5px;line-height:18px">Drag Coefficient</div>
<div class="vlbl" style="left:164px;top:615.5px;line-height:18px">Variability %</div>
<div class="inp" style="left:24px;top:638.4px;width:124px">0.95</div>
<div class="inp" style="left:164px;top:638.4px;width:124px">0</div>
<div class="lbl" style="left:24px;top:684.7px;line-height:18px">Congestion Factor</div>
<div class="vlbl" style="left:164px;top:684.7px;line-height:18px">Variability %</div>
<div class="inp" style="left:24px;top:707.5px;width:124px">1</div>
<div class="inp" style="left:164px;top:707.5px;width:124px">0</div>
<div class="help" style="left:24px;top:568px;width:270px">Virtual mass factor for hydrodynamics. For open objects: also limits water fill volume</div>
<div class="help" style="left:24px;top:745px;width:266px">Fraction of object volume that displaces water (1 = solid, &lt;1 = has voids)</div>
<div class="lbl" style="left:24px;top:792.5px;line-height:18px">DNV Object Class</div>
<div class="inp" style="left:24px;top:817px;width:264px">Pipe/Tubular</div>
<svg class="abs" style="left:261px;top:826px" width="12" height="8" viewBox="0 0 12 8"><path d="M1 1.5 L6 6.5 L11 1.5" fill="none" stroke="#4a5a70" stroke-width="1.5"/></svg>
<div class="abs" style="left:311px;top:0;width:8px;height:836px;background:#0b0b0b"></div>
<div class="abs" style="left:311px;top:0;width:8px;height:389px;background:#383838;border-radius:4px"></div>
<div class="abs" style="left:319px;top:0;width:1px;height:836px;background:#1b4f8f"></div>
</div>
</div>
<div class="abs" style="left:400px;top:56px;width:1504px;height:836px;overflow:hidden">
<div class="abs" style="left:184px;top:10px;width:816px;height:44px;background:#2b2e32;border-radius:6px;box-shadow:0 2px 6px rgba(0,0,0,.35)"></div>
<div class="abs" style="left:194.7px;top:20px;width:33.9px;height:24px;border-radius:4px;background:#28a745;"><svg style="position:absolute;left:7.9px;top:3px" width="16" height="16" viewBox="0 0 16 16"><path d="M2.3 1 L15 8 L2.3 15 Z" fill="#fff" stroke="#fff" stroke-width="1" stroke-linejoin="round"/></svg></div>
<div class="abs" style="left:238.6px;top:20px;width:35.0px;height:24px;border-radius:4px;background:#ffc107;"><svg style="position:absolute;left:8.5px;top:3px" width="16" height="16" viewBox="0 0 16 16"><path d="M2.3 1 L15 8 L2.3 15 Z" fill="#212529" stroke="#212529" stroke-width="1" stroke-linejoin="round"/></svg></div>
<div class="abs" style="left:283.5px;top:20px;width:33.9px;height:24px;border-radius:4px;background:#dc3545;"><svg style="position:absolute;left:7.9px;top:3px" width="16" height="16" viewBox="0 0 16 16"><path d="M3 4.5 H13 L12 15 H4 Z" fill="#fff"/><rect x="2" y="2.5" width="12" height="1.8" rx="0.5" fill="#fff"/><rect x="6" y="1" width="4" height="1.8" fill="#fff"/></svg></div>
<div class="abs" style="left:358.7px;top:20px;width:37.9px;height:24px;border-radius:4px;border:1px solid #6b6f74;"><svg style="position:absolute;left:9.9px;top:3px" width="16" height="16" viewBox="0 0 16 16"><path d="M1.5 5.5 H4.5 L8 2.5 V13.5 L4.5 10.5 H1.5 Z" fill="#fff"/><path d="M10 5.5 Q11.3 8 10 10.5 M11.8 3.8 Q14.2 8 11.8 12.2 M13.6 2.3 Q16.8 8 13.6 13.7" fill="none" stroke="#fff" stroke-width="1.3"/></svg></div>
<div class="abs" style="left:437.7px;top:20px;width:33.9px;height:24px;border-radius:4px;border:1px solid #6b6f74;"><svg style="position:absolute;left:7.9px;top:3px" width="16" height="16" viewBox="0 0 16 16"><path d="M8 2 V14 M3 7 L8 2 L13 7" fill="none" stroke="#fff" stroke-width="2.2" stroke-linecap="round" stroke-linejoin="round"/></svg></div>
<div class="abs" style="left:481.9px;top:20px;width:33.9px;height:24px;border-radius:4px;border:1px solid #6b6f74;"><svg style="position:absolute;left:7.9px;top:3px" width="16" height="16" viewBox="0 0 16 16"><path d="M2 8 H14 M9 3 L14 8 L9 13" fill="none" stroke="#fff" stroke-width="2.2" stroke-linecap="round" stroke-linejoin="round"/></svg></div>
<div class="abs" style="left:525.6px;top:20px;width:36.1px;height:24px;border-radius:4px;border:1px solid #6b6f74;"><svg style="position:absolute;left:9.1px;top:3px" width="16" height="16" viewBox="0 0 16 16"><path d="M8 1.5 L14 4.5 V11.5 L8 14.5 L2 11.5 V4.5 Z" fill="#fff"/><path d="M2.5 5 L8 7.8 L13.5 5 M8 7.8 V14" fill="none" stroke="#2b2e32" stroke-width="1.2"/><path d="M8.6 8.3 L13.4 5.9 V11.1 L8.6 13.5 Z" fill="#2b2e32" opacity="0"/></svg></div>
<div class="abs" style="left:571.6px;top:20px;width:33.9px;height:24px;border-radius:4px;border:1px solid #6b6f74;"><svg style="position:absolute;left:7.9px;top:3px" width="16" height="16" viewBox="0 0 16 16"><path d="M8 2 V14 M3 9 L8 14 L13 9" fill="none" stroke="#fff" stroke-width="2.2" stroke-linecap="round" stroke-linejoin="round"/></svg></div>
<div class="abs" style="left:646.6px;top:20px;width:36.1px;height:24px;border-radius:4px;border:1px solid #6b6f74;"><svg style="position:absolute;left:9.1px;top:3px" width="16" height="16" viewBox="0 0 16 16"><rect x="0.6" y="1.8" width="4.5" height="3.7" rx="0.6" fill="#fff"/><rect x="0.6" y="6.1" width="4.5" height="3.7" rx="0.6" fill="#fff"/><rect x="0.6" y="10.4" width="4.5" height="3.7" rx="0.6" fill="#fff"/><rect x="5.7" y="1.8" width="4.5" height="3.7" rx="0.6" fill="#fff"/><rect x="5.7" y="6.1" width="4.5" height="3.7" rx="0.6" fill="#fff"/><rect x="5.7" y="10.4" width="4.5" height="3.7" rx="0.6" fill="#fff"/><rect x="10.8" y="1.8" width="4.5" height="3.7" rx="0.6" fill="#fff"/><rect x="10.8" y="6.1" width="4.5" height="3.7" rx="0.6" fill="#fff"/><rect x="10.8" y="10.4" width="4.5" height="3.7" rx="0.6" fill="#fff"/></svg></div>
<div class="abs" style="left:693.0px;top:20px;width:35.6px;height:24px;border-radius:4px;background:#5a5d62;border:1px solid #c8c9cb;"><svg style="position:absolute;left:8.8px;top:3px" width="16" height="16" viewBox="0 0 16 16"><path d="M8 0.3 L11.2 3.6 H9.2 V6.8 H12.4 V4.8 L15.7 8 L12.4 11.2 V9.2 H9.2 V12.4 H11.2 L8 15.7 L4.8 12.4 H6.8 V9.2 H3.6 V11.2 L0.3 8 L3.6 4.8 V6.8 H6.8 V3.6 H4.8 Z" fill="#fff"/></svg></div>
<div class="abs" style="left:738.9px;top:20px;width:35.7px;height:24px;border-radius:4px;background:#5a5d62;border:1px solid #c8c9cb;"><svg style="position:absolute;left:8.8px;top:3px" width="16" height="16" viewBox="0 0 16 16"><circle cx="12.3" cy="3.6" r="2.4" fill="none" stroke="#fff" stroke-width="1.9"/><path d="M3.2 15 C1.5 12.8 0.8 11.8 0.8 10.6 A2.4 2.4 0 0 1 5.6 10.6 C5.6 11.8 4.9 12.8 3.2 15 Z" fill="#fff"/><path d="M12.3 6.5 V7.3 Q12.3 8.2 11 8.2 H8.3 Q6.5 8.2 6.5 10 Q6.5 11.8 8.3 11.8 H12.2 Q14.2 11.8 14.2 13.3 Q14.2 14.8 12.2 14.8 H5" fill="none" stroke="#fff" stroke-width="1.9"/></svg></div>
<div class="abs" style="left:784.9px;top:20px;width:35.6px;height:24px;border-radius:4px;border:1px solid #6b6f74;"><svg style="position:absolute;left:8.8px;top:3px" width="16" height="16" viewBox="0 0 16 16"><path d="M11.5 2.6 A6.3 6.3 0 1 1 8 1.7" fill="none" stroke="#fff" stroke-width="2.1"/></svg></div>
<div class="abs" style="left:830.8px;top:20px;width:35.7px;height:24px;border-radius:4px;background:#5a5d62;border:1px solid #c8c9cb;"><svg style="position:absolute;left:8.9px;top:3px" width="16" height="16" viewBox="0 0 16 16"><circle cx="8" cy="8" r="7.2" fill="#fff"/><circle cx="8" cy="8" r="2.1" fill="#5a5d62"/></svg></div>
<div class="abs" style="left:876.7px;top:20px;width:36.1px;height:24px;border-radius:4px;background:#5a5d62;border:1px solid #c8c9cb;"><svg style="position:absolute;left:9.0px;top:3px" width="16" height="16" viewBox="0 0 16 16"><circle cx="8" cy="8" r="6.3" fill="none" stroke="#fff" stroke-width="2.1"/><circle cx="8" cy="8" r="3" fill="none" stroke="#fff" stroke-width="1.7"/><circle cx="8" cy="8" r="1" fill="#fff"/></svg></div>
<div class="abs" style="left:953.7px;top:20px;width:35.7px;height:24px;border-radius:4px;border:1px solid #6b6f74;"><svg style="position:absolute;left:8.9px;top:3px" width="16" height="16" viewBox="0 0 16 16"><path d="M10.5 1.5 A6.6 6.6 0 1 0 14.8 11 A5.6 5.6 0 0 1 10.5 1.5 Z" fill="#fff"/></svg></div>
<div class="abs" style="left:338px;top:21px;width:1px;height:20px;background:#4a4d52"></div>
<div class="abs" style="left:417.4px;top:21px;width:1px;height:20px;background:#4a4d52"></div>
<div class="abs" style="left:625.8px;top:21px;width:1px;height:20px;background:#4a4d52"></div>
<div class="abs" style="left:933px;top:21px;width:1px;height:20px;background:#4a4d52"></div>
<div class="abs" style="left:20px;top:80px;width:449px;height:735px;background:#2c2e31;border-radius:10px;box-shadow:0 4px 12px rgba(0,0,0,.4)"></div>
<div class="abs" style="left:25px;top:85px;width:440px;height:726px;background:#05396f;border-radius:7px;overflow:hidden">
<div class="abs" style="left:0;top:0;width:440px;height:40px;background:#1f2023"></div>
<svg class="abs" style="left:8px;top:14px" width="13" height="12" viewBox="0 0 13 12" fill="#7e7f81"><rect x="0" y="0.4" width="12.3" height="1.9"/><rect x="0" y="4.9" width="12.3" height="1.9"/><rect x="0" y="9.4" width="12.3" height="1.9"/></svg>
<div class="abs" style="left:28px;top:1px;line-height:40px;font-size:13.3px;font-weight:bold;color:#fff">Simulation Graphs</div>
<div class="abs" style="left:367px;top:8px;width:29px;height:24px;border:1px solid #6b6f74;border-radius:4px"><svg style="position:absolute;left:7px;top:4.5px" width="13" height="13" viewBox="0 0 13 13" fill="none" stroke="#d4d4d4" stroke-width="1.7"><path d="M1.5 4.5 V1.5 H4.5 M8.5 1 H12 V4.5 M12 8.5 V12 H8.5 M4.5 12 H1 V8.5"/></svg></div>
<div class="abs" style="left:403px;top:8px;width:29px;height:24px;border:1px solid #6b6f74;border-radius:4px"><svg style="position:absolute;left:7px;top:4.5px" width="13" height="13" viewBox="0 0 13 13"><path d="M12 1 L7.5 5.5 M1 12 L5.5 7.5" stroke="#c9cacc" stroke-width="1.6"/><path d="M7 2.5 V6 H10.5 Z M6 10.5 V7 H2.5 Z" fill="#c9cacc"/></svg></div>
<div class="abs" style="left:433px;top:40px;width:7px;height:686px;background:#0a3a72"></div>
<div class="abs" style="left:434px;top:42px;width:6px;height:601px;background:#3b6290;border-radius:3px"></div>
</div>
<svg class="abs" style="left:25px;top:125px" width="433" height="686" viewBox="425 181 433 686" font-family="Liberation Sans, sans-serif">
<rect x="433.5" y="191" width="203.8" height="183" rx="5" fill="#032d5c"/>
<rect x="647" y="191" width="203.0" height="183" rx="5" fill="#032d5c"/>
<rect x="433.5" y="384" width="203.8" height="183" rx="5" fill="#032d5c"/>
<rect x="647" y="384" width="203.0" height="183" rx="5" fill="#032d5c"/>
<rect x="433.5" y="577" width="203.8" height="183" rx="5" fill="#032d5c"/>
<rect x="647" y="577" width="203.0" height="183" rx="5" fill="#032d5c"/>
<rect x="433.5" y="770" width="203.8" height="183" rx="5" fill="#032d5c"/>
<rect x="647" y="770" width="203.0" height="183" rx="5" fill="#032d5c"/>
<path d="M491.4 227.5 H623.6" stroke="#34507a" stroke-width="1"/><text transform="translate(484.4 230.7) scale(0.86 1)" text-anchor="end" font-size="10.5" fill="#e6ebf2" font-weight="bold">10.0</text><path d="M491.4 234.5 H623.6" stroke="#34507a" stroke-width="1"/><text transform="translate(484.4 237.6) scale(0.86 1)" text-anchor="end" font-size="10.5" fill="#e6ebf2" font-weight="bold">6.0</text><path d="M491.4 258.5 H623.6" stroke="#34507a" stroke-width="1"/><text transform="translate(484.4 262.3) scale(0.86 1)" text-anchor="end" font-size="10.5" fill="#e6ebf2" font-weight="bold">1.0</text><path d="M491.4 266.5 H623.6" stroke="#34507a" stroke-width="1"/><text transform="translate(484.4 269.7) scale(0.86 1)" text-anchor="end" font-size="10.5" fill="#e6ebf2" font-weight="bold">0.60</text><path d="M491.4 291.5 H623.6" stroke="#34507a" stroke-width="1"/><text transform="translate(484.4 294.4) scale(0.86 1)" text-anchor="end" font-size="10.5" fill="#e6ebf2" font-weight="bold">0.10</text><path d="M491.4 297.5 H623.6" stroke="#34507a" stroke-width="1"/><text transform="translate(484.4 301.2) scale(0.86 1)" text-anchor="end" font-size="10.5" fill="#e6ebf2" font-weight="bold">0.060</text><path d="M491.4 324.5 H623.6" stroke="#34507a" stroke-width="1"/><text transform="translate(484.4 327.6) scale(0.86 1)" text-anchor="end" font-size="10.5" fill="#e6ebf2" font-weight="bold">0.010</text><path d="M495.5 204 V328.3" stroke="#34507a" stroke-width="1"/><text transform="translate(495.4 344.3) scale(0.86 1)" text-anchor="middle" font-size="10.5" fill="#e6ebf2" font-weight="bold">0</text><path d="M538.5 204 V328.3" stroke="#34507a" stroke-width="1"/><text transform="translate(538.2 344.3) scale(0.86 1)" text-anchor="middle" font-size="10.5" fill="#e6ebf2" font-weight="bold">20</text><path d="M581.5 204 V328.3" stroke="#34507a" stroke-width="1"/><text transform="translate(581.0 344.3) scale(0.86 1)" text-anchor="middle" font-size="10.5" fill="#e6ebf2" font-weight="bold">40</text><path d="M624.5 204 V328.3" stroke="#34507a" stroke-width="1"/><text transform="translate(623.6 344.3) scale(0.86 1)" text-anchor="middle" font-size="10.5" fill="#e6ebf2" font-weight="bold">60</text><text transform="translate(559.5 363.3) scale(0.92 1)" text-anchor="middle" font-size="10.5" fill="#e6ebf2" font-weight="bold">Time (s)</text><text transform="translate(449.3 264.1) rotate(-90) scale(0.88 1)" text-anchor="middle" y="3.5" font-size="10.5" fill="#e6ebf2" font-weight="bold">Velocity (m/s)</text><path d="M497.4 240.0 L500.0 239.8 L510.0 239.8 L520.0 239.8 L530.0 239.8 L548.0 239.8" stroke="#c0392b" stroke-width="1.4" fill="none" stroke-linejoin="round" stroke-dasharray="3 3"/><path d="M497.4 228.8 L502.8 216.5 L509.7 211.0 L515.2 209.6 L520.7 211.0 L524.8 222.0 L533.0 217.3 L539.9 219.2 L546.8 222.0" stroke="#2e9e3e" stroke-width="1.4" fill="none" stroke-linejoin="round" stroke-dasharray="3 3"/><path d="M496.8 219.2 L497.4 237.0 L500.0 234.3 L505.6 234.3 L511.0 233.0 L516.6 232.0 L520.0 233.5 L524.8 234.3 L529.0 233.0 L533.0 232.0 L540.0 233.5 L547.6 233.8" stroke="#4da6ff" stroke-width="2.2" fill="none" stroke-linejoin="round"/>
<path d="M702.5 204.5 H836.9" stroke="#34507a" stroke-width="1"/><text transform="translate(695.5 207.4) scale(0.86 1)" text-anchor="end" font-size="10.5" fill="#e6ebf2" font-weight="bold">1070</text><path d="M702.5 221.5 H836.9" stroke="#34507a" stroke-width="1"/><text transform="translate(695.5 224.4) scale(0.86 1)" text-anchor="end" font-size="10.5" fill="#e6ebf2" font-weight="bold">1060</text><path d="M702.5 238.5 H836.9" stroke="#34507a" stroke-width="1"/><text transform="translate(695.5 241.4) scale(0.86 1)" text-anchor="end" font-size="10.5" fill="#e6ebf2" font-weight="bold">1050</text><path d="M702.5 255.5 H836.9" stroke="#34507a" stroke-width="1"/><text transform="translate(695.5 258.7) scale(0.86 1)" text-anchor="end" font-size="10.5" fill="#e6ebf2" font-weight="bold">1040</text><path d="M702.5 272.5 H836.9" stroke="#34507a" stroke-width="1"/><text transform="translate(695.5 275.7) scale(0.86 1)" text-anchor="end" font-size="10.5" fill="#e6ebf2" font-weight="bold">1030</text><path d="M702.5 289.5 H836.9" stroke="#34507a" stroke-width="1"/><text transform="translate(695.5 293.0) scale(0.86 1)" text-anchor="end" font-size="10.5" fill="#e6ebf2" font-weight="bold">1020</text><path d="M702.5 306.5 H836.9" stroke="#34507a" stroke-width="1"/><text transform="translate(695.5 310.3) scale(0.86 1)" text-anchor="end" font-size="10.5" fill="#e6ebf2" font-weight="bold">1010</text><path d="M702.5 324.5 H836.9" stroke="#34507a" stroke-width="1"/><text transform="translate(695.5 327.6) scale(0.86 1)" text-anchor="end" font-size="10.5" fill="#e6ebf2" font-weight="bold">1000</text><path d="M706.5 204 V328.3" stroke="#34507a" stroke-width="1"/><text transform="translate(706.5 344.3) scale(0.86 1)" text-anchor="middle" font-size="10.5" fill="#e6ebf2" font-weight="bold">0</text><path d="M750.5 204 V328.3" stroke="#34507a" stroke-width="1"/><text transform="translate(749.9 344.3) scale(0.86 1)" text-anchor="middle" font-size="10.5" fill="#e6ebf2" font-weight="bold">20</text><path d="M793.5 204 V328.3" stroke="#34507a" stroke-width="1"/><text transform="translate(793.2 344.3) scale(0.86 1)" text-anchor="middle" font-size="10.5" fill="#e6ebf2" font-weight="bold">40</text><path d="M837.5 204 V328.3" stroke="#34507a" stroke-width="1"/><text transform="translate(836.9 344.3) scale(0.86 1)" text-anchor="middle" font-size="10.5" fill="#e6ebf2" font-weight="bold">60</text><text transform="translate(771.7 363.3) scale(0.92 1)" text-anchor="middle" font-size="10.5" fill="#e6ebf2" font-weight="bold">Time (s)</text><text transform="translate(662.0 264.1) rotate(-90) scale(0.88 1)" text-anchor="middle" y="3.5" font-size="10.5" fill="#e6ebf2" font-weight="bold">Mass (kg)</text><path d="M708.2 324.0 L710.1 219.2 L758.9 219.2" stroke="#f5a53a" stroke-width="2.2" fill="none" stroke-linejoin="round"/>
<path d="M486.5 397.5 H623.6" stroke="#34507a" stroke-width="1"/><text transform="translate(479.5 400.8) scale(0.86 1)" text-anchor="end" font-size="10.5" fill="#e6ebf2" font-weight="bold">0.07</text><path d="M486.5 414.5 H623.6" stroke="#34507a" stroke-width="1"/><text transform="translate(479.5 418.1) scale(0.86 1)" text-anchor="end" font-size="10.5" fill="#e6ebf2" font-weight="bold">0.06</text><path d="M486.5 431.5 H623.6" stroke="#34507a" stroke-width="1"/><text transform="translate(479.5 435.1) scale(0.86 1)" text-anchor="end" font-size="10.5" fill="#e6ebf2" font-weight="bold">0.05</text><path d="M486.5 448.5 H623.6" stroke="#34507a" stroke-width="1"/><text transform="translate(479.5 451.8) scale(0.86 1)" text-anchor="end" font-size="10.5" fill="#e6ebf2" font-weight="bold">0.04</text><path d="M486.5 465.5 H623.6" stroke="#34507a" stroke-width="1"/><text transform="translate(479.5 468.8) scale(0.86 1)" text-anchor="end" font-size="10.5" fill="#e6ebf2" font-weight="bold">0.03</text><path d="M486.5 482.5 H623.6" stroke="#34507a" stroke-width="1"/><text transform="translate(479.5 486.0) scale(0.86 1)" text-anchor="end" font-size="10.5" fill="#e6ebf2" font-weight="bold">0.02</text><path d="M486.5 500.5 H623.6" stroke="#34507a" stroke-width="1"/><text transform="translate(479.5 503.8) scale(0.86 1)" text-anchor="end" font-size="10.5" fill="#e6ebf2" font-weight="bold">0.01</text><path d="M486.5 517.5 H623.6" stroke="#34507a" stroke-width="1"/><text transform="translate(479.5 521.0) scale(0.86 1)" text-anchor="end" font-size="10.5" fill="#e6ebf2" font-weight="bold">0</text><path d="M490.5 397 V521.2" stroke="#34507a" stroke-width="1"/><text transform="translate(490.5 537.2) scale(0.86 1)" text-anchor="middle" font-size="10.5" fill="#e6ebf2" font-weight="bold">0</text><path d="M535.5 397 V521.2" stroke="#34507a" stroke-width="1"/><text transform="translate(535.0 537.2) scale(0.86 1)" text-anchor="middle" font-size="10.5" fill="#e6ebf2" font-weight="bold">20</text><path d="M579.5 397 V521.2" stroke="#34507a" stroke-width="1"/><text transform="translate(579.2 537.2) scale(0.86 1)" text-anchor="middle" font-size="10.5" fill="#e6ebf2" font-weight="bold">40</text><path d="M624.5 397 V521.2" stroke="#34507a" stroke-width="1"/><text transform="translate(623.6 537.2) scale(0.86 1)" text-anchor="middle" font-size="10.5" fill="#e6ebf2" font-weight="bold">60</text><text transform="translate(557.0 556.2) scale(0.92 1)" text-anchor="middle" font-size="10.5" fill="#e6ebf2" font-weight="bold">Time (s)</text><text transform="translate(449.3 457.1) rotate(-90) scale(0.88 1)" text-anchor="middle" y="3.5" font-size="10.5" fill="#e6ebf2" font-weight="bold">Volume (m³)</text><path d="M492.7 517.2 L494.6 414.3 L544.8 414.3" stroke="#3ea6f5" stroke-width="2.2" fill="none" stroke-linejoin="round"/>
<path d="M697.3 397.5 H836.9" stroke="#34507a" stroke-width="1"/><text transform="translate(690.3 400.8) scale(0.86 1)" text-anchor="end" font-size="10.5" fill="#e6ebf2" font-weight="bold">0</text><path d="M697.3 427.5 H836.9" stroke="#34507a" stroke-width="1"/><text transform="translate(690.3 430.8) scale(0.86 1)" text-anchor="end" font-size="10.5" fill="#e6ebf2" font-weight="bold">50</text><path d="M697.3 457.5 H836.9" stroke="#34507a" stroke-width="1"/><text transform="translate(690.3 460.8) scale(0.86 1)" text-anchor="end" font-size="10.5" fill="#e6ebf2" font-weight="bold">100</text><path d="M697.3 487.5 H836.9" stroke="#34507a" stroke-width="1"/><text transform="translate(690.3 490.8) scale(0.86 1)" text-anchor="end" font-size="10.5" fill="#e6ebf2" font-weight="bold">150</text><path d="M697.3 517.5 H836.9" stroke="#34507a" stroke-width="1"/><text transform="translate(690.3 520.8) scale(0.86 1)" text-anchor="end" font-size="10.5" fill="#e6ebf2" font-weight="bold">200</text><path d="M701.5 397 V521.2" stroke="#34507a" stroke-width="1"/><text transform="translate(701.3 537.2) scale(0.86 1)" text-anchor="middle" font-size="10.5" fill="#e6ebf2" font-weight="bold">0</text><path d="M746.5 397 V521.2" stroke="#34507a" stroke-width="1"/><text transform="translate(746.3 537.2) scale(0.86 1)" text-anchor="middle" font-size="10.5" fill="#e6ebf2" font-weight="bold">20</text><path d="M792.5 397 V521.2" stroke="#34507a" stroke-width="1"/><text transform="translate(791.6 537.2) scale(0.86 1)" text-anchor="middle" font-size="10.5" fill="#e6ebf2" font-weight="bold">40</text><path d="M837.5 397 V521.2" stroke="#34507a" stroke-width="1"/><text transform="translate(836.9 537.2) scale(0.86 1)" text-anchor="middle" font-size="10.5" fill="#e6ebf2" font-weight="bold">60</text><text transform="translate(769.1 556.2) scale(0.92 1)" text-anchor="middle" font-size="10.5" fill="#e6ebf2" font-weight="bold">Time (s)</text><text transform="translate(662.0 457.1) rotate(-90) scale(0.88 1)" text-anchor="middle" y="3.5" font-size="10.5" fill="#e6ebf2" font-weight="bold">Depth (m)</text><path d="M705.0 400.0 L711.0 430.0 L716.0 462.0 L723.0 508.0" stroke="#2e9e3e" stroke-width="1.3" fill="none" stroke-linejoin="round" stroke-dasharray="3 3"/><path d="M708.0 404.0 L716.0 440.0 L722.0 478.0 L726.0 505.0 L731.0 478.0 L735.0 515.0" stroke="#2e9e3e" stroke-width="1.3" fill="none" stroke-linejoin="round" stroke-dasharray="3 3"/><path d="M727.0 420.0 L731.0 455.0 L737.0 472.0 L742.0 495.0 L746.0 512.0" stroke="#2e9e3e" stroke-width="1.3" fill="none" stroke-linejoin="round" stroke-dasharray="3 3"/><path d="M743.0 480.0 L747.0 500.0 L752.0 517.0" stroke="#2e9e3e" stroke-width="1.3" fill="none" stroke-linejoin="round" stroke-dasharray="3 3"/><path d="M703.2 398.3 L755.4 449.1" stroke="#c0392b" stroke-width="1.3" fill="none" stroke-linejoin="round" stroke-dasharray="3 3"/><path d="M702.7 397.0 L706.0 399.2 L712.8 406.6 L723.8 423.0 L727.9 424.4 L738.9 438.1 L747.1 451.9 L755.4 462.3" stroke="#22e58a" stroke-width="2.6" fill="none" stroke-linejoin="round"/>
<path d="M481.4 590.5 H623.6" stroke="#34507a" stroke-width="1"/><text transform="translate(474.4 594.2) scale(0.86 1)" text-anchor="end" font-size="10.5" fill="#e6ebf2" font-weight="bold">1.2</text><path d="M481.4 610.5 H623.6" stroke="#34507a" stroke-width="1"/><text transform="translate(474.4 614.0) scale(0.86 1)" text-anchor="end" font-size="10.5" fill="#e6ebf2" font-weight="bold">1</text><path d="M481.4 630.5 H623.6" stroke="#34507a" stroke-width="1"/><text transform="translate(474.4 634.0) scale(0.86 1)" text-anchor="end" font-size="10.5" fill="#e6ebf2" font-weight="bold">0.8</text><path d="M481.4 650.5 H623.6" stroke="#34507a" stroke-width="1"/><text transform="translate(474.4 653.8) scale(0.86 1)" text-anchor="end" font-size="10.5" fill="#e6ebf2" font-weight="bold">0.6</text><path d="M481.4 670.5 H623.6" stroke="#34507a" stroke-width="1"/><text transform="translate(474.4 673.6) scale(0.86 1)" text-anchor="end" font-size="10.5" fill="#e6ebf2" font-weight="bold">0.4</text><path d="M481.4 690.5 H623.6" stroke="#34507a" stroke-width="1"/><text transform="translate(474.4 693.8) scale(0.86 1)" text-anchor="end" font-size="10.5" fill="#e6ebf2" font-weight="bold">0.2</text><path d="M481.4 710.5 H623.6" stroke="#34507a" stroke-width="1"/><text transform="translate(474.4 713.6) scale(0.86 1)" text-anchor="end" font-size="10.5" fill="#e6ebf2" font-weight="bold">0</text><path d="M485.5 590.4 V713.8" stroke="#34507a" stroke-width="1"/><text transform="translate(485.4 729.8) scale(0.86 1)" text-anchor="middle" font-size="10.5" fill="#e6ebf2" font-weight="bold">0</text><path d="M531.5 590.4 V713.8" stroke="#34507a" stroke-width="1"/><text transform="translate(531.4 729.8) scale(0.86 1)" text-anchor="middle" font-size="10.5" fill="#e6ebf2" font-weight="bold">20</text><path d="M577.5 590.4 V713.8" stroke="#34507a" stroke-width="1"/><text transform="translate(577.3 729.8) scale(0.86 1)" text-anchor="middle" font-size="10.5" fill="#e6ebf2" font-weight="bold">40</text><path d="M624.5 590.4 V713.8" stroke="#34507a" stroke-width="1"/><text transform="translate(623.6 729.8) scale(0.86 1)" text-anchor="middle" font-size="10.5" fill="#e6ebf2" font-weight="bold">60</text><text transform="translate(554.5 748.8) scale(0.92 1)" text-anchor="middle" font-size="10.5" fill="#e6ebf2" font-weight="bold">Time (s)</text><text transform="translate(449.3 650.1) rotate(-90) scale(0.88 1)" text-anchor="middle" y="3.5" font-size="10.5" fill="#e6ebf2" font-weight="bold">Area (m²)</text><path d="M485.4 590.4 L541.9 590.4" stroke="#2e9e3e" stroke-width="1.3" fill="none" stroke-linejoin="round" stroke-dasharray="4 4"/><path d="M485.4 684.0 L488.2 692.5 L491.6 702.7 L496.7 706.8 L505.2 708.8 L517.1 703.4 L523.9 706.1 L532.4 702.7 L541.9 700.0" stroke="#c0392b" stroke-width="1.3" fill="none" stroke-linejoin="round" stroke-dasharray="3 3"/><path d="M485.4 619.3 L489.2 613.6 L491.6 624.4 L495.0 619.3 L500.1 615.9 L504.1 626.1 L508.6 627.8 L512.0 623.8 L517.1 627.8 L520.5 622.7 L524.6 638.0 L528.0 639.8 L530.7 630.6 L534.8 629.5 L538.2 635.3 L541.9 629.5" stroke="#ff6b8b" stroke-width="2.2" fill="none" stroke-linejoin="round"/>
<path d="M704.3 590.5 H836.9" stroke="#34507a" stroke-width="1"/><text transform="translate(697.3 593.5) scale(0.86 1)" text-anchor="end" font-size="10.5" fill="#e6ebf2" font-weight="bold">1.0k</text><path d="M704.3 597.5 H836.9" stroke="#34507a" stroke-width="1"/><text transform="translate(697.3 601.0) scale(0.86 1)" text-anchor="end" font-size="10.5" fill="#e6ebf2" font-weight="bold">600</text><path d="M704.3 620.5 H836.9" stroke="#34507a" stroke-width="1"/><text transform="translate(697.3 624.2) scale(0.86 1)" text-anchor="end" font-size="10.5" fill="#e6ebf2" font-weight="bold">100</text><path d="M704.3 626.5 H836.9" stroke="#34507a" stroke-width="1"/><text transform="translate(697.3 629.9) scale(0.86 1)" text-anchor="end" font-size="10.5" fill="#e6ebf2" font-weight="bold">60.0</text><path d="M704.3 650.5 H836.9" stroke="#34507a" stroke-width="1"/><text transform="translate(697.3 653.8) scale(0.86 1)" text-anchor="end" font-size="10.5" fill="#e6ebf2" font-weight="bold">10.0</text><path d="M704.3 656.5 H836.9" stroke="#34507a" stroke-width="1"/><text transform="translate(697.3 659.5) scale(0.86 1)" text-anchor="end" font-size="10.5" fill="#e6ebf2" font-weight="bold">6.00</text><path d="M704.3 680.5 H836.9" stroke="#34507a" stroke-width="1"/><text transform="translate(697.3 683.4) scale(0.86 1)" text-anchor="end" font-size="10.5" fill="#e6ebf2" font-weight="bold">1.00</text><path d="M704.3 686.5 H836.9" stroke="#34507a" stroke-width="1"/><text transform="translate(697.3 689.5) scale(0.86 1)" text-anchor="end" font-size="10.5" fill="#e6ebf2" font-weight="bold">0.600</text><path d="M704.3 710.5 H836.9" stroke="#34507a" stroke-width="1"/><text transform="translate(697.3 713.3) scale(0.86 1)" text-anchor="end" font-size="10.5" fill="#e6ebf2" font-weight="bold">0.100</text><path d="M708.5 590.4 V713.8" stroke="#34507a" stroke-width="1"/><text transform="translate(708.3 729.8) scale(0.86 1)" text-anchor="middle" font-size="10.5" fill="#e6ebf2" font-weight="bold">0</text><path d="M751.5 590.4 V713.8" stroke="#34507a" stroke-width="1"/><text transform="translate(751.2 729.8) scale(0.86 1)" text-anchor="middle" font-size="10.5" fill="#e6ebf2" font-weight="bold">20</text><path d="M794.5 590.4 V713.8" stroke="#34507a" stroke-width="1"/><text transform="translate(794.4 729.8) scale(0.86 1)" text-anchor="middle" font-size="10.5" fill="#e6ebf2" font-weight="bold">40</text><path d="M837.5 590.4 V713.8" stroke="#34507a" stroke-width="1"/><text transform="translate(836.9 729.8) scale(0.86 1)" text-anchor="middle" font-size="10.5" fill="#e6ebf2" font-weight="bold">60</text><text transform="translate(772.6 748.8) scale(0.92 1)" text-anchor="middle" font-size="10.5" fill="#e6ebf2" font-weight="bold">Time (s)</text><text transform="translate(662.0 650.1) rotate(-90) scale(0.88 1)" text-anchor="middle" y="3.5" font-size="10.5" fill="#e6ebf2" font-weight="bold">Energy (kJ)</text><path d="M709.3 631.2 L714.4 607.4 L724.6 597.2 L731.4 593.8 L736.5 621.0 L745.0 612.5 L751.8 614.2 L760.4 619.3" stroke="#2e9e3e" stroke-width="1.3" fill="none" stroke-linejoin="round" stroke-dasharray="3 3"/><path d="M710.0 651.7 L760.0 651.7" stroke="#c0392b" stroke-width="1.3" fill="none" stroke-linejoin="round" stroke-dasharray="3 3"/><path d="M709.3 631.2 L711.0 648.3 L714.4 641.5 L719.5 634.6 L728.0 631.2 L734.8 638.0 L741.6 636.3 L748.4 634.6 L755.3 636.3 L760.4 638.7" stroke="#f5c842" stroke-width="2.2" fill="none" stroke-linejoin="round"/>
<path d="M479.7 783.5 H623.6" stroke="#34507a" stroke-width="1"/><text transform="translate(472.7 787.1) scale(0.86 1)" text-anchor="end" font-size="10.5" fill="#e6ebf2" font-weight="bold">60</text><path d="M479.7 803.5 H623.6" stroke="#34507a" stroke-width="1"/><text transform="translate(472.7 806.8) scale(0.86 1)" text-anchor="end" font-size="10.5" fill="#e6ebf2" font-weight="bold">50</text><path d="M479.7 823.5 H623.6" stroke="#34507a" stroke-width="1"/><text transform="translate(472.7 826.6) scale(0.86 1)" text-anchor="end" font-size="10.5" fill="#e6ebf2" font-weight="bold">40</text><path d="M479.7 843.5 H623.6" stroke="#34507a" stroke-width="1"/><text transform="translate(472.7 847.0) scale(0.86 1)" text-anchor="end" font-size="10.5" fill="#e6ebf2" font-weight="bold">30</text><path d="M479.7 863.5 H623.6" stroke="#34507a" stroke-width="1"/><text transform="translate(472.7 866.4) scale(0.86 1)" text-anchor="end" font-size="10.5" fill="#e6ebf2" font-weight="bold">20</text><path d="M484.5 783.3 V906.7" stroke="#34507a" stroke-width="1"/><text transform="translate(483.7 922.7) scale(0.86 1)" text-anchor="middle" font-size="10.5" fill="#e6ebf2" font-weight="bold"></text><path d="M531.5 783.3 V906.7" stroke="#34507a" stroke-width="1"/><text transform="translate(530.7 922.7) scale(0.86 1)" text-anchor="middle" font-size="10.5" fill="#e6ebf2" font-weight="bold"></text><path d="M577.5 783.3 V906.7" stroke="#34507a" stroke-width="1"/><text transform="translate(577.3 922.7) scale(0.86 1)" text-anchor="middle" font-size="10.5" fill="#e6ebf2" font-weight="bold"></text><path d="M624.5 783.3 V906.7" stroke="#34507a" stroke-width="1"/><text transform="translate(623.6 922.7) scale(0.86 1)" text-anchor="middle" font-size="10.5" fill="#e6ebf2" font-weight="bold"></text><text transform="translate(553.6 941.7) scale(0.92 1)" text-anchor="middle" font-size="10.5" fill="#e6ebf2" font-weight="bold">Time (s)</text><text transform="translate(449.3 843.0) rotate(-90) scale(0.88 1)" text-anchor="middle" y="3.5" font-size="10.5" fill="#e6ebf2" font-weight="bold">Distance (m)</text><path d="M498.4 866.0 L540.9 796.3" stroke="#2e9e3e" stroke-width="1.3" fill="none" stroke-linejoin="round" stroke-dasharray="3 3"/><path d="M523.9 866.0 L532.4 857.5 L540.2 851.7" stroke="#a070f5" stroke-width="2.4" fill="none" stroke-linejoin="round"/>
<path d="M704.3 802.5 H836.9" stroke="#34507a" stroke-width="1"/><text transform="translate(697.3 805.8) scale(0.86 1)" text-anchor="end" font-size="10.5" fill="#e6ebf2" font-weight="bold">10.0k</text><path d="M704.3 822.5 H836.9" stroke="#34507a" stroke-width="1"/><text transform="translate(697.3 825.6) scale(0.86 1)" text-anchor="end" font-size="10.5" fill="#e6ebf2" font-weight="bold">1.0k</text><path d="M704.3 842.5 H836.9" stroke="#34507a" stroke-width="1"/><text transform="translate(697.3 845.3) scale(0.86 1)" text-anchor="end" font-size="10.5" fill="#e6ebf2" font-weight="bold">100</text><path d="M704.3 862.5 H836.9" stroke="#34507a" stroke-width="1"/><text transform="translate(697.3 865.4) scale(0.86 1)" text-anchor="end" font-size="10.5" fill="#e6ebf2" font-weight="bold">10.0</text><path d="M708.5 783 V906.4" stroke="#34507a" stroke-width="1"/><text transform="translate(708.3 922.4) scale(0.86 1)" text-anchor="middle" font-size="10.5" fill="#e6ebf2" font-weight="bold"></text><path d="M751.5 783 V906.4" stroke="#34507a" stroke-width="1"/><text transform="translate(751.2 922.4) scale(0.86 1)" text-anchor="middle" font-size="10.5" fill="#e6ebf2" font-weight="bold"></text><path d="M794.5 783 V906.4" stroke="#34507a" stroke-width="1"/><text transform="translate(794.4 922.4) scale(0.86 1)" text-anchor="middle" font-size="10.5" fill="#e6ebf2" font-weight="bold"></text><path d="M837.5 783 V906.4" stroke="#34507a" stroke-width="1"/><text transform="translate(836.9 922.4) scale(0.86 1)" text-anchor="middle" font-size="10.5" fill="#e6ebf2" font-weight="bold"></text><text transform="translate(772.6 941.4) scale(0.92 1)" text-anchor="middle" font-size="10.5" fill="#e6ebf2" font-weight="bold">Time (s)</text><text transform="translate(662.0 842.7) rotate(-90) scale(0.88 1)" text-anchor="middle" y="3.5" font-size="10.5" fill="#e6ebf2" font-weight="bold">Energy Density (kJ/m²)</text><path d="M709.3 842.2 L717.8 801.4 L731.4 784.4 L736.5 818.4 L746.7 808.2 L755.3 804.8 L760.4 821.8" stroke="#2e9e3e" stroke-width="1.3" fill="none" stroke-linejoin="round" stroke-dasharray="3 3"/><path d="M709.3 849.0 L711.0 862.6 L714.4 838.8 L719.5 821.8 L724.6 815.0 L729.7 809.9 L733.1 821.8 L736.5 813.3 L738.2 845.6 L743.3 835.4 L748.4 832.0 L755.3 837.1 L760.4 842.2" stroke="#ff6060" stroke-width="2.2" fill="none" stroke-linejoin="round"/>
</svg>
<div class="abs" style="left:1174px;top:10px;width:320px;height:900px;background:#2c2e31;border-radius:10px;box-shadow:0 4px 12px rgba(0,0,0,.4)"></div>
<div class="abs" style="left:1179px;top:15px;width:310px;height:900px;background:#05396f;border-radius:7px 7px 0 0;overflow:hidden;font-family:'Liberation Sans',sans-serif">
<div class="abs" style="left:0;top:0;width:310px;height:40px;background:#1f2023"></div>
<svg class="abs" style="left:8px;top:14px" width="13" height="12" viewBox="0 0 13 12" fill="#7e7f81"><rect x="0" y="0.4" width="12.3" height="1.9"/><rect x="0" y="4.9" width="12.3" height="1.9"/><rect x="0" y="9.4" width="12.3" height="1.9"/></svg>
<div class="abs" style="left:28px;top:1px;line-height:40px;font-size:13px;font-weight:bold;color:#fff">Simulation Results (All Objects)</div>
<div class="abs" style="left:274px;top:8px;width:28px;height:24px;border:1px solid #6b6f74;border-radius:4px"><svg style="position:absolute;left:7px;top:5px" width="13" height="13" viewBox="0 0 13 13"><path d="M12 1 L7.5 5.5 M1 12 L5.5 7.5" stroke="#c9cacc" stroke-width="1.6"/><path d="M7 2.5 V6 H10.5 Z M6 10.5 V7 H2.5 Z" fill="#c9cacc"/></svg></div>
<div class="abs" style="left:8.7px;top:50px;width:292.5px;height:136px;background:#12427a;border:1px solid #24538c;border-radius:4px"></div>
<div class="abs" style="left:8.7px;top:50px;width:292.5px;height:37px;background:#dc3545;border-radius:4px 4px 0 0;text-align:center;line-height:37px;color:#fff;font-weight:bold;font-size:12.8px">OBJECT SINKS</div>
<div class="abs" style="left:17px;top:94.3px;line-height:18px;font-size:12px;color:#e3e8ef">Mass-In-Air:</div>
<div class="abs" style="right:17.4px;top:94.3px;line-height:18px;font-size:12px;color:#fff;font-weight:bold">1,000 kg</div>
<div class="abs" style="left:17px;top:115.6px;line-height:18px;font-size:12px;color:#e3e8ef">Mass-In-Water:</div>
<div class="abs" style="right:17.4px;top:115.6px;line-height:18px;font-size:12px;color:#fff;font-weight:bold">877 kg</div>
<div class="abs" style="left:17px;top:140.8px;line-height:18px;font-size:12px;color:#e3e8ef">Displaced Mass (Before Flooding):</div>
<div class="abs" style="right:17.4px;top:140.8px;line-height:18px;font-size:12px;color:#fff;font-weight:bold">123 kg</div>
<div class="abs" style="left:17px;top:160.6px;line-height:18px;font-size:12px;color:#e3e8ef">Displaced Mass (After Flooding):</div>
<div class="abs" style="right:17.4px;top:160.6px;line-height:18px;font-size:12px;color:#fff;font-weight:bold">4 kg</div>
<div class="abs" style="left:8px;top:192.6px;line-height:20px;font-size:13.6px;font-weight:bold;color:#5eaef5">VELOCITY</div>
<div class="abs" style="left:8px;top:215.3px;line-height:18px;font-size:10.9px;color:#c5cdd8">Total:</div>
<div class="abs" style="right:8.6px;top:215.3px;line-height:18px;font-size:12px;color:#62adf5;font-family:'Liberation Mono',monospace;white-space:nowrap">0.00 - 14.57 m/s</div>
<div class="abs" style="left:8px;top:238.3px;line-height:18px;font-size:10.9px;color:#b8102a">X-axis:</div>
<div class="abs" style="right:8.6px;top:238.3px;line-height:18px;font-size:12px;color:#62adf5;font-family:'Liberation Mono',monospace;white-space:nowrap">-3.82 - 3.74 m/s</div>
<div class="abs" style="left:8px;top:261.3px;line-height:18px;font-size:10.9px;color:#19a519">Y-axis (↓+/↑-):</div>
<div class="abs" style="right:8.6px;top:261.3px;line-height:18px;font-size:12px;color:#62adf5;font-family:'Liberation Mono',monospace;white-space:nowrap">0.00 - 14.57 m/s</div>
<div class="abs" style="left:8px;top:284.3px;line-height:18px;font-size:10.9px;color:#1e9be8">Z-axis:</div>
<div class="abs" style="right:8.6px;top:284.3px;line-height:18px;font-size:12px;color:#62adf5;font-family:'Liberation Mono',monospace;white-space:nowrap">-4.24 - 5.01 m/s</div>
<div class="abs" style="left:8px;top:307.4px;line-height:18px;font-size:10.9px;color:#c5cdd8">Terminal:</div>
<div class="abs" style="right:8.6px;top:307.4px;line-height:18px;font-size:12px;color:#62adf5;font-family:'Liberation Mono',monospace;white-space:nowrap">4.22 - 15.67 m/s</div>
<div class="abs" style="left:8px;top:333.1px;width:293px;height:1px;background:#275591"></div>
<div class="abs" style="left:8px;top:341.7px;line-height:20px;font-size:13.6px;font-weight:bold;color:#5eaef5">PROPERTIES</div>
<div class="abs" style="left:8px;top:364.8px;line-height:18px;font-size:10.9px;color:#c5cdd8">Displaced Volume:</div>
<div class="abs" style="right:8.6px;top:364.8px;line-height:18px;font-size:12px;color:#62adf5;font-family:'Liberation Mono',monospace;white-space:nowrap">0.120 m³</div>
<div class="abs" style="left:8px;top:387.8px;line-height:18px;font-size:10.9px;color:#c5cdd8">Effective Mass:</div>
<div class="abs" style="right:8.6px;top:387.8px;line-height:18px;font-size:12px;color:#62adf5;font-family:'Liberation Mono',monospace;white-space:nowrap">1,061.500 kg</div>
<div class="abs" style="left:8px;top:410.9px;line-height:18px;font-size:10.9px;color:#c5cdd8">Water Inside:</div>
<div class="abs" style="right:8.6px;top:410.9px;line-height:18px;font-size:12px;color:#62adf5;font-family:'Liberation Mono',monospace;white-space:nowrap">0.060 m³</div>
<div class="abs" style="left:8px;top:433.8px;line-height:18px;font-size:10.9px;color:#c5cdd8">Water Depth:</div>
<div class="abs" style="right:8.6px;top:433.8px;line-height:18px;font-size:12px;color:#62adf5;font-family:'Liberation Mono',monospace;white-space:nowrap">89.58 - 199.95 m</div>
<div class="abs" style="left:8px;top:456.9px;line-height:18px;font-size:10.9px;color:#c5cdd8">Projected Area:</div>
<div class="abs" style="right:8.6px;top:456.9px;line-height:18px;font-size:12px;color:#62adf5;font-family:'Liberation Mono',monospace;white-space:nowrap">0.09 - 1.20 m²</div>
<div class="abs" style="left:8px;top:479.9px;line-height:18px;font-size:10.9px;color:#c5cdd8">Kinetic Energy:</div>
<div class="abs" style="right:8.6px;top:479.9px;line-height:18px;font-size:12px;color:#62adf5;font-family:'Liberation Mono',monospace;white-space:nowrap">0.00 - 112.67 kJ</div>
<div class="abs" style="left:8px;top:505.8px;width:293px;height:1px;background:#275591"></div>
<div class="abs" style="left:8px;top:513.5px;line-height:20px;font-size:13.6px;font-weight:bold;color:#5eaef5">POSITION &amp; TIME</div>
<div class="abs" style="left:8px;top:535.9px;line-height:18px;font-size:10.9px;color:#c5cdd8">Position:</div>
<div class="abs" style="right:8.6px;top:535.9px;line-height:18px;font-size:12px;color:#62adf5;font-family:'Liberation Mono',monospace;white-space:nowrap">50 objects</div>
<div class="abs" style="left:8px;top:558.8px;line-height:18px;font-size:10.9px;color:#c5cdd8">Excursion:</div>
<div class="abs" style="right:8.6px;top:558.8px;line-height:18px;font-size:12px;color:#62adf5;font-family:'Liberation Mono',monospace;white-space:nowrap">5.49 - 53.11 m</div>
<div class="abs" style="left:8px;top:582.0px;line-height:18px;font-size:10.9px;color:#c5cdd8">Time Elapsed:</div>
<div class="abs" style="right:8.6px;top:582.0px;line-height:18px;font-size:12px;color:#62adf5;font-family:'Liberation Mono',monospace;white-space:nowrap">24.400 s</div>
<div class="abs" style="left:8px;top:608.4px;width:293px;height:1px;background:#275591"></div>
<div class="abs" style="left:8px;top:616.8px;line-height:20px;font-size:13.6px;font-weight:bold;color:#5eaef5">DNV DROP CONE (STD DEV)</div>
<div class="abs" style="left:8px;top:638.8px;line-height:18px;font-size:10.9px;color:#c5cdd8">Object Class:</div>
<div class="abs" style="right:8.6px;top:638.8px;line-height:18px;font-size:12px;color:#62adf5;font-family:'Liberation Mono',monospace;white-space:nowrap">Pipe/Tubular (&lt;2t) [Cat. 1]</div>
<div class="abs" style="left:8px;top:661.8px;line-height:18px;font-size:10.9px;color:#c5cdd8">Cone Angle:</div>
<div class="abs" style="right:8.6px;top:661.8px;line-height:18px;font-size:12px;color:#62adf5;font-family:'Liberation Mono',monospace;white-space:nowrap">45.0°</div>
<div class="abs" style="left:8px;top:684.9px;line-height:18px;font-size:10.9px;color:#b8102a">1σ (68.2%):</div>
<div class="abs" style="right:8.6px;top:684.9px;line-height:18px;font-size:12px;color:#62adf5;font-family:'Liberation Mono',monospace;white-space:nowrap">74.6 m</div>
<div class="abs" style="left:8px;top:707.9px;line-height:18px;font-size:10.9px;color:#19a519">2σ (95.4%):</div>
<div class="abs" style="right:8.6px;top:707.9px;line-height:18px;font-size:12px;color:#62adf5;font-family:'Liberation Mono',monospace;white-space:nowrap">149.1 m</div>
<div class="abs" style="left:8px;top:730.7px;line-height:18px;font-size:10.9px;color:#1e9be8">3σ (99.7%):</div>
<div class="abs" style="right:8.6px;top:730.7px;line-height:18px;font-size:12px;color:#62adf5;font-family:'Liberation Mono',monospace;white-space:nowrap">223.7 m</div>
<div class="abs" style="left:8px;top:756.6px;width:293px;height:1px;background:#275591"></div>
<div class="abs" style="left:8px;top:765.0px;line-height:20px;font-size:13.6px;font-weight:bold;color:#5eaef5">FORCES</div>
<div class="abs" style="left:8px;top:787.4px;line-height:18px;font-size:10.9px;color:#c5cdd8">Buoyancy Force:</div>
<div class="abs" style="right:8.6px;top:787.4px;line-height:18px;font-size:12px;color:#62adf5;font-family:'Liberation Mono',monospace;white-space:nowrap">0.12 - 0.37 kN</div>
<div class="abs" style="left:8px;top:810.4px;line-height:18px;font-size:10.9px;color:#c5cdd8">Drag Force:</div>
<div class="abs" style="right:8.6px;top:810.4px;line-height:18px;font-size:12px;color:#62adf5;font-family:'Liberation Mono',monospace;white-space:nowrap">0.03 - 8.85 kN</div>
</div>
</div>
</body></html>
